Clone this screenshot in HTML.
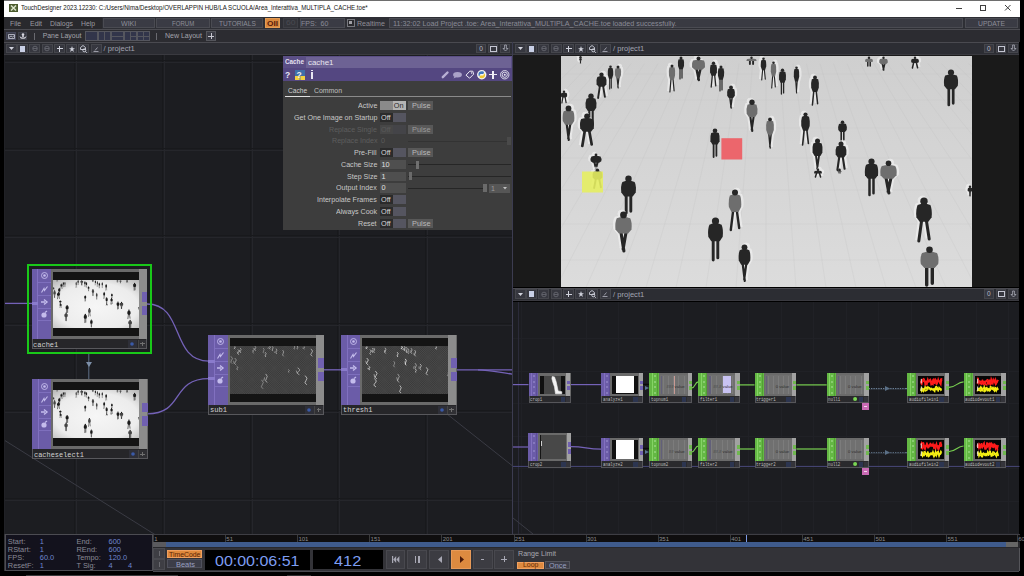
<!DOCTYPE html><html><head><meta charset="utf-8"><style>
html,body{margin:0;padding:0;}
body{width:1024px;height:576px;overflow:hidden;background:#000;position:relative;font-family:"Liberation Sans",sans-serif;}
.a{position:absolute;box-sizing:border-box;}
.t{white-space:pre;line-height:1;}
svg.a{overflow:visible;}
</style></head><body>

<div class="a" style="left:4px;top:0px;width:1016px;height:16.5px;background:#ffffff;"></div>
<div class="a" style="left:4px;top:0px;width:1016px;height:1px;background:#6e6e6e;"></div>
<svg class="a" style="left:8.5px;top:4px;" width="9" height="8" viewBox="0 0 9 8"><rect x="0" y="0" width="9" height="8" fill="#4b5a2c"/><rect x="1" y="1" width="7" height="6" fill="#56663a"/><path d="M2 1.5 L7 6.5 M7 1.5 L2 6.5" stroke="#dfe6cf" stroke-width="1.3"/></svg>
<div class="a t" style="left:20.50px;top:4.21px;font-size:7.9px;color:#141414;font-family:'Liberation Sans',sans-serif;transform:scaleX(0.7715);transform-origin:0 0;">TouchDesigner 2023.12230: C:/Users/Nima/Desktop/OVERLAPPIN HUB/LA SCUOLA/Area_Interattiva_MULTIPLA_CACHE.toe*</div>
<div class="a" style="left:955.5px;top:7.8px;width:6.5px;height:1px;background:#404040;"></div>
<div class="a" style="left:980px;top:5.2px;width:5.8px;height:5.6px;border:1px solid #404040;"></div>
<svg class="a" style="left:1004.6px;top:5px;" width="5.5" height="5.5" viewBox="0 0 5.5 5.5"><path d="M0 0L5.5 5.5M5.5 0L0 5.5" stroke="#404040" stroke-width="1"/></svg>
<div class="a" style="left:4px;top:16.5px;width:1016px;height:13px;background:#2c2c31;"></div>
<div class="a" style="left:4px;top:16.5px;width:97.5px;height:13px;background:#29292d;"></div>
<div class="a t" style="left:10.00px;top:19.72px;font-size:7.3px;color:#9a9aa0;font-family:'Liberation Sans',sans-serif;transform:scaleX(0.9352);transform-origin:0 0;">File</div>
<div class="a t" style="left:30.00px;top:19.72px;font-size:7.3px;color:#9a9aa0;font-family:'Liberation Sans',sans-serif;transform:scaleX(0.9540);transform-origin:0 0;">Edit</div>
<div class="a t" style="left:50.00px;top:19.72px;font-size:7.3px;color:#9a9aa0;font-family:'Liberation Sans',sans-serif;transform:scaleX(0.9447);transform-origin:0 0;">Dialogs</div>
<div class="a t" style="left:81.00px;top:19.72px;font-size:7.3px;color:#9a9aa0;font-family:'Liberation Sans',sans-serif;transform:scaleX(0.9325);transform-origin:0 0;">Help</div>
<div class="a" style="left:101.5px;top:16.5px;width:918.5px;height:13px;background:#2e2f35;"></div>
<div class="a" style="left:102.6px;top:17.8px;width:52.099999999999994px;height:9.8px;background:#3a3b44;border:1px solid #4a4b52;"></div>
<div class="a t" style="left:121.00px;top:19.82px;font-size:7.3px;color:#8c8d98;font-family:'Liberation Sans',sans-serif;transform:scaleX(0.9674);transform-origin:0 0;">WIKI</div>
<div class="a" style="left:156px;top:17.8px;width:54px;height:9.8px;background:#3a3b44;border:1px solid #4a4b52;"></div>
<div class="a t" style="left:171.80px;top:19.82px;font-size:7.3px;color:#8c8d98;font-family:'Liberation Sans',sans-serif;transform:scaleX(0.8295);transform-origin:0 0;">FORUM</div>
<div class="a" style="left:210.7px;top:17.8px;width:52.10000000000002px;height:9.8px;background:#3a3b44;border:1px solid #4a4b52;"></div>
<div class="a t" style="left:219.00px;top:19.82px;font-size:7.3px;color:#8c8d98;font-family:'Liberation Sans',sans-serif;transform:scaleX(0.9012);transform-origin:0 0;">TUTORIALS</div>
<div class="a" style="left:265.3px;top:17.8px;width:14.699999999999989px;height:9.8px;background:#d8893e;border:1px solid #e49c55;"></div>
<div class="a t" style="left:267.20px;top:19.77px;font-size:7px;color:#5a1a0c;font-family:'Liberation Sans',sans-serif;font-weight:bold;transform:scaleX(1.1892);transform-origin:0 0;">OII</div>
<div class="a" style="left:283px;top:17.8px;width:14.699999999999989px;height:9.8px;background:#34353b;border:1px solid #3e3f45;"></div>
<div class="a t" style="left:285.50px;top:20.09px;font-size:6.5px;color:#4a4b52;font-family:'Liberation Sans',sans-serif;transform:scaleX(1.3140);transform-origin:0 0;">60</div>
<div class="a" style="left:299.5px;top:17.8px;width:45.10000000000002px;height:9.8px;background:#3a3b44;border:1px solid #4a4b52;"></div>
<div class="a t" style="left:301.40px;top:19.82px;font-size:7.3px;color:#8a8b96;font-family:'Liberation Sans',sans-serif;transform:scaleX(0.9612);transform-origin:0 0;">FPS:  60</div>
<div class="a" style="left:347px;top:18.8px;width:7.5px;height:8px;background:#2a2a2e;border:1px solid #77787e;"></div>
<div class="a" style="left:349.2px;top:21px;width:3.2px;height:3.4px;background:#a0a0a6;"></div>
<div class="a t" style="left:357.30px;top:19.82px;font-size:7.3px;color:#8e8e96;font-family:'Liberation Sans',sans-serif;transform:scaleX(0.9686);transform-origin:0 0;">Realtime</div>
<div class="a" style="left:389.4px;top:17.8px;width:573.6px;height:9.8px;background:#393a42;border:1px solid #4a4b52;"></div>
<div class="a t" style="left:392.60px;top:19.82px;font-size:7.3px;color:#8a8b96;font-family:'Liberation Sans',sans-serif;transform:scaleX(0.9844);transform-origin:0 0;">11:32:02 Load Project .toe: Area_Interattiva_MULTIPLA_CACHE.toe loaded successfully.</div>
<div class="a" style="left:965px;top:17.8px;width:52.60000000000002px;height:9.8px;background:#3a3b44;border:1px solid #4a4b52;"></div>
<div class="a t" style="left:978.00px;top:19.82px;font-size:7.3px;color:#8c8d98;font-family:'Liberation Sans',sans-serif;transform:scaleX(0.9288);transform-origin:0 0;">UPDATE</div>
<div class="a" style="left:4px;top:29.2px;width:1016px;height:13px;background:#2c2c31;"></div>
<div class="a" style="left:4px;top:29.2px;width:1016px;height:0.8px;background:#4c4c52;"></div>
<div class="a" style="left:6px;top:32.3px;width:9.7px;height:7.4px;background:#3a3c48;border:1px solid #45475a;"></div>
<svg class="a" style="left:7.5px;top:33.5px;" width="7" height="5" viewBox="0 0 7 5"><path d="M0.5 0.5h6v4h-6z M1 3.5 L3 2 L4.5 3 L6.5 1.5" stroke="#c8cad8" stroke-width="0.8" fill="none"/></svg>
<div class="a" style="left:18px;top:32.3px;width:9.4px;height:7.4px;background:#34363f;border:1px solid #40424c;"></div>
<svg class="a" style="left:19px;top:33px;" width="8" height="6" viewBox="0 0 8 6"><circle cx="4" cy="1.6" r="1.3" fill="#d8d8e0"/><path d="M0.5 3 Q4 6.5 7.5 3 L6.5 5.2 Q4 6.5 1.5 5.2z" fill="#d8d8e0"/><rect x="3.2" y="2.5" width="1.6" height="1.8" fill="#d8d8e0"/></svg>
<div class="a" style="left:34.3px;top:33px;width:0.9px;height:7px;background:#6a6a70;"></div>
<div class="a t" style="left:42.70px;top:32.76px;font-size:6.9px;color:#a4a4ac;font-family:'Liberation Sans',sans-serif;">Pane Layout</div>
<div class="a" style="left:85px;top:31.3px;width:13px;height:9.8px;background:#32354a;border:1px solid #55565e;"></div>
<div class="a" style="left:98px;top:31.3px;width:13px;height:9.8px;background:#32354a;border:1px solid #55565e;"></div>
<div class="a" style="left:111px;top:31.3px;width:13px;height:9.8px;background:#32354a;border:1px solid #55565e;"></div>
<div class="a" style="left:124px;top:31.3px;width:13px;height:9.8px;background:#32354a;border:1px solid #55565e;"></div>
<div class="a" style="left:137px;top:31.3px;width:13px;height:9.8px;background:#32354a;border:1px solid #55565e;"></div>
<div class="a" style="left:104px;top:31.5px;width:1px;height:9.5px;background:#55565e;"></div>
<div class="a" style="left:111px;top:36px;width:13px;height:1px;background:#55565e;"></div>
<div class="a" style="left:130px;top:31.5px;width:1px;height:9.5px;background:#55565e;"></div>
<div class="a" style="left:130px;top:36px;width:7px;height:1px;background:#55565e;"></div>
<div class="a" style="left:143px;top:31.5px;width:1px;height:9.5px;background:#55565e;"></div>
<div class="a" style="left:137px;top:36px;width:13px;height:1px;background:#55565e;"></div>
<div class="a" style="left:156.2px;top:33px;width:0.9px;height:7px;background:#6a6a70;"></div>
<div class="a t" style="left:165.00px;top:32.76px;font-size:6.9px;color:#a4a4ac;font-family:'Liberation Sans',sans-serif;transform:scaleX(1.0154);transform-origin:0 0;">New Layout</div>
<div class="a" style="left:206px;top:31.3px;width:10px;height:9.6px;background:#3a3b44;border:1px solid #55565c;"></div>
<div class="a" style="left:208.3px;top:35.6px;width:5.4px;height:1px;background:#c8c8d0;"></div>
<div class="a" style="left:210.5px;top:33.4px;width:1px;height:5.4px;background:#c8c8d0;"></div>
<div class="a" style="left:4px;top:42.2px;width:507.7px;height:12.8px;background:#2c2d33;"></div>
<div class="a" style="left:4px;top:42.2px;width:507.7px;height:0.8px;background:#4a4a50;"></div>
<div class="a" style="left:4px;top:54.4px;width:507.7px;height:0.6px;background:#3a3a40;"></div>
<div class="a" style="left:6px;top:44.0px;width:11px;height:9.4px;background:#36373f;border:1px solid #45464c;"></div>
<div class="a" style="left:16.5px;top:44.0px;width:11px;height:9.4px;background:#36373f;border:1px solid #45464c;"></div>
<div class="a" style="left:29px;top:44.0px;width:11px;height:9.4px;background:#36373f;border:1px solid #45464c;"></div>
<div class="a" style="left:41.5px;top:44.0px;width:11px;height:9.4px;background:#36373f;border:1px solid #45464c;"></div>
<div class="a" style="left:54px;top:44.0px;width:11px;height:9.4px;background:#36373f;border:1px solid #45464c;"></div>
<div class="a" style="left:66px;top:44.0px;width:11px;height:9.4px;background:#36373f;border:1px solid #45464c;"></div>
<div class="a" style="left:78px;top:44.0px;width:11px;height:9.4px;background:#36373f;border:1px solid #45464c;"></div>
<div class="a" style="left:90.5px;top:44.0px;width:11px;height:9.4px;background:#36373f;border:1px solid #45464c;"></div>
<svg class="a" style="left:9px;top:47.2px;" width="5" height="3" viewBox="0 0 5 3"><path d="M0 0H5L2.5 3z" fill="#d0d2dc"/></svg>
<div class="a" style="left:19.5px;top:45.5px;width:5.5px;height:6.4px;background:#c9d0e6;"></div>
<svg class="a" style="left:31.5px;top:46.2px;" width="6" height="5" viewBox="0 0 6 5"><circle cx="3" cy="2.5" r="2.3" stroke="#6a6b74" stroke-width="0.8" fill="none"/><path d="M1 2.5h4" stroke="#6a6b74" stroke-width="0.8"/></svg>
<svg class="a" style="left:44.0px;top:46.2px;" width="6" height="5" viewBox="0 0 6 5"><circle cx="3" cy="2.5" r="2.3" stroke="#6a6b74" stroke-width="0.8" fill="none"/><path d="M1 2.5h4" stroke="#6a6b74" stroke-width="0.8"/></svg>
<div class="a" style="left:56.5px;top:48.2px;width:6px;height:1.1px;background:#d0d2dc;"></div>
<div class="a" style="left:58.95px;top:45.7px;width:1.1px;height:6px;background:#d0d2dc;"></div>
<svg class="a" style="left:68.5px;top:45.7px;" width="6" height="6" viewBox="0 0 6 6"><path d="M3 0L3.8 2.2H6L4.2 3.6L4.9 6L3 4.6L1.1 6L1.8 3.6L0 2.2H2.2z" fill="#d0d2dc"/></svg>
<svg class="a" style="left:80px;top:44.900000000000006px;" width="7" height="8" viewBox="0 0 7 8"><path d="M3 0.5L5.5 2.5V4.5H0.5V2.5z" stroke="#d0d2dc" stroke-width="0.9" fill="none"/><circle cx="4.3" cy="5.3" r="1.5" stroke="#d0d2dc" stroke-width="0.9" fill="none"/><path d="M5.3 6.3L6.8 7.8" stroke="#d0d2dc" stroke-width="0.9"/></svg>
<svg class="a" style="left:93.0px;top:46.7px;" width="6" height="5" viewBox="0 0 6 5"><path d="M0.5 4.5H5.5M4.5 0.5L2 3.5" stroke="#9a9ba6" stroke-width="1"/></svg>
<div class="a t" style="left:103.60px;top:45.26px;font-size:7.6px;color:#a2a4b2;font-family:'Liberation Sans',sans-serif;">/ project1</div>
<div class="a" style="left:476.2px;top:43.800000000000004px;width:10px;height:9.6px;background:#36373f;border:1px solid #45464c;"></div>
<div class="a t" style="left:479.20px;top:45.89px;font-size:6.5px;color:#b8bac6;font-family:'Liberation Sans',sans-serif;">0</div>
<div class="a" style="left:488.2px;top:43.800000000000004px;width:10px;height:9.6px;background:#36373f;border:1px solid #45464c;"></div>
<div class="a" style="left:490.2px;top:45.6px;width:6.5px;height:6px;border:1px solid #c4c6d2;border-top-width:1.6px;"></div>
<div class="a" style="left:500.4px;top:43.800000000000004px;width:10px;height:9.6px;background:#36373f;border:1px solid #45464c;"></div>
<svg class="a" style="left:502.7px;top:45.400000000000006px;" width="5" height="6.5" viewBox="0 0 5 6.5"><path d="M1.6 0V3.5H0L2.5 6L5 3.5H3.4V0z" stroke="#b8bac6" stroke-width="0.7" fill="none"/></svg>
<div class="a" style="left:513.4px;top:42.2px;width:506.1px;height:12.8px;background:#2c2d33;"></div>
<div class="a" style="left:513.4px;top:42.2px;width:506.1px;height:0.8px;background:#4a4a50;"></div>
<div class="a" style="left:513.4px;top:54.4px;width:506.1px;height:0.6px;background:#3a3a40;"></div>
<div class="a" style="left:515.4px;top:44.0px;width:11px;height:9.4px;background:#36373f;border:1px solid #45464c;"></div>
<div class="a" style="left:525.9px;top:44.0px;width:11px;height:9.4px;background:#36373f;border:1px solid #45464c;"></div>
<div class="a" style="left:538.4px;top:44.0px;width:11px;height:9.4px;background:#36373f;border:1px solid #45464c;"></div>
<div class="a" style="left:550.9px;top:44.0px;width:11px;height:9.4px;background:#36373f;border:1px solid #45464c;"></div>
<div class="a" style="left:563.4px;top:44.0px;width:11px;height:9.4px;background:#36373f;border:1px solid #45464c;"></div>
<div class="a" style="left:575.4px;top:44.0px;width:11px;height:9.4px;background:#36373f;border:1px solid #45464c;"></div>
<div class="a" style="left:587.4px;top:44.0px;width:11px;height:9.4px;background:#36373f;border:1px solid #45464c;"></div>
<div class="a" style="left:599.9px;top:44.0px;width:11px;height:9.4px;background:#36373f;border:1px solid #45464c;"></div>
<svg class="a" style="left:518.4px;top:47.2px;" width="5" height="3" viewBox="0 0 5 3"><path d="M0 0H5L2.5 3z" fill="#d0d2dc"/></svg>
<div class="a" style="left:528.9px;top:45.5px;width:5.5px;height:6.4px;background:#c9d0e6;"></div>
<svg class="a" style="left:540.9px;top:46.2px;" width="6" height="5" viewBox="0 0 6 5"><circle cx="3" cy="2.5" r="2.3" stroke="#6a6b74" stroke-width="0.8" fill="none"/><path d="M1 2.5h4" stroke="#6a6b74" stroke-width="0.8"/></svg>
<svg class="a" style="left:553.4px;top:46.2px;" width="6" height="5" viewBox="0 0 6 5"><circle cx="3" cy="2.5" r="2.3" stroke="#6a6b74" stroke-width="0.8" fill="none"/><path d="M1 2.5h4" stroke="#6a6b74" stroke-width="0.8"/></svg>
<div class="a" style="left:565.9px;top:48.2px;width:6px;height:1.1px;background:#d0d2dc;"></div>
<div class="a" style="left:568.35px;top:45.7px;width:1.1px;height:6px;background:#d0d2dc;"></div>
<svg class="a" style="left:577.9px;top:45.7px;" width="6" height="6" viewBox="0 0 6 6"><path d="M3 0L3.8 2.2H6L4.2 3.6L4.9 6L3 4.6L1.1 6L1.8 3.6L0 2.2H2.2z" fill="#d0d2dc"/></svg>
<svg class="a" style="left:589.4px;top:44.900000000000006px;" width="7" height="8" viewBox="0 0 7 8"><path d="M3 0.5L5.5 2.5V4.5H0.5V2.5z" stroke="#d0d2dc" stroke-width="0.9" fill="none"/><circle cx="4.3" cy="5.3" r="1.5" stroke="#d0d2dc" stroke-width="0.9" fill="none"/><path d="M5.3 6.3L6.8 7.8" stroke="#d0d2dc" stroke-width="0.9"/></svg>
<svg class="a" style="left:602.4px;top:46.7px;" width="6" height="5" viewBox="0 0 6 5"><path d="M0.5 4.5H5.5M4.5 0.5L2 3.5" stroke="#9a9ba6" stroke-width="1"/></svg>
<div class="a t" style="left:613.00px;top:45.26px;font-size:7.6px;color:#a2a4b2;font-family:'Liberation Sans',sans-serif;">/ project1</div>
<div class="a" style="left:984.0px;top:43.800000000000004px;width:10px;height:9.6px;background:#36373f;border:1px solid #45464c;"></div>
<div class="a t" style="left:987.00px;top:45.89px;font-size:6.5px;color:#b8bac6;font-family:'Liberation Sans',sans-serif;">0</div>
<div class="a" style="left:996.0px;top:43.800000000000004px;width:10px;height:9.6px;background:#36373f;border:1px solid #45464c;"></div>
<div class="a" style="left:998.0px;top:45.6px;width:6.5px;height:6px;border:1px solid #c4c6d2;border-top-width:1.6px;"></div>
<div class="a" style="left:1008.2px;top:43.800000000000004px;width:10px;height:9.6px;background:#36373f;border:1px solid #45464c;"></div>
<svg class="a" style="left:1010.5px;top:45.400000000000006px;" width="5" height="6.5" viewBox="0 0 5 6.5"><path d="M1.6 0V3.5H0L2.5 6L5 3.5H3.4V0z" stroke="#b8bac6" stroke-width="0.7" fill="none"/></svg>
<div class="a" style="left:4px;top:55px;width:507.7px;height:479px;background:#1c1d21;"></div>
<div class="a" style="left:4px;top:55px;width:1.2px;height:479px;background:#202126;"></div>
<div class="a" style="left:74.4px;top:55px;width:1px;height:479px;background:#18191c;"></div>
<div class="a" style="left:76.4px;top:55px;width:1px;height:479px;background:#25262b;"></div>
<div class="a" style="left:162px;top:55px;width:1px;height:479px;background:#18191c;"></div>
<div class="a" style="left:164px;top:55px;width:1px;height:479px;background:#25262b;"></div>
<div class="a" style="left:249.5px;top:55px;width:1px;height:479px;background:#18191c;"></div>
<div class="a" style="left:251.5px;top:55px;width:1px;height:479px;background:#25262b;"></div>
<div class="a" style="left:337px;top:55px;width:1px;height:479px;background:#18191c;"></div>
<div class="a" style="left:339px;top:55px;width:1px;height:479px;background:#25262b;"></div>
<div class="a" style="left:424.5px;top:55px;width:1px;height:479px;background:#18191c;"></div>
<div class="a" style="left:426.5px;top:55px;width:1px;height:479px;background:#25262b;"></div>
<div class="a" style="left:5px;top:59.5px;width:506.7px;height:1px;background:#18191c;"></div>
<div class="a" style="left:5px;top:61.5px;width:506.7px;height:1px;background:#25262b;"></div>
<div class="a" style="left:5px;top:147.6px;width:506.7px;height:1px;background:#18191c;"></div>
<div class="a" style="left:5px;top:149.6px;width:506.7px;height:1px;background:#25262b;"></div>
<div class="a" style="left:5px;top:235px;width:506.7px;height:1px;background:#18191c;"></div>
<div class="a" style="left:5px;top:237px;width:506.7px;height:1px;background:#25262b;"></div>
<div class="a" style="left:5px;top:322.5px;width:506.7px;height:1px;background:#18191c;"></div>
<div class="a" style="left:5px;top:324.5px;width:506.7px;height:1px;background:#25262b;"></div>
<div class="a" style="left:5px;top:410px;width:506.7px;height:1px;background:#18191c;"></div>
<div class="a" style="left:5px;top:412px;width:506.7px;height:1px;background:#25262b;"></div>
<div class="a" style="left:5px;top:497.5px;width:506.7px;height:1px;background:#18191c;"></div>
<div class="a" style="left:5px;top:499.5px;width:506.7px;height:1px;background:#25262b;"></div>
<svg class="a" style="left:0;top:0" width="1024" height="576"><path d="M5 440.6L155 534.6" stroke="#3a3b44" stroke-width="1" fill="none"/></svg>
<svg class="a" style="left:0;top:0" width="1024" height="576"><path d="M447 414L512 465.5" stroke="#3a3b44" stroke-width="1" fill="none"/></svg>
<svg class="a" style="left:0;top:0" width="1024" height="576"><path d="M5 303.4H32" stroke="#7462b8" stroke-width="1.3" fill="none"/></svg>
<svg class="a" style="left:0;top:0" width="1024" height="576"><path d="M147 304C185 304 170 361.2 209 361.2" stroke="#7462b8" stroke-width="1.3" fill="none"/></svg>
<svg class="a" style="left:0;top:0" width="1024" height="576"><path d="M147 413.8C185 413.8 170 378.6 209 378.6" stroke="#7462b8" stroke-width="1.3" fill="none"/></svg>
<svg class="a" style="left:0;top:0" width="1024" height="576"><path d="M324 369.8H341" stroke="#7462b8" stroke-width="1.3" fill="none"/></svg>
<svg class="a" style="left:0;top:0" width="1024" height="576"><path d="M456 369.8H512" stroke="#7462b8" stroke-width="1.3" fill="none"/></svg>
<svg class="a" style="left:0;top:0" width="1024" height="576"><path d="M478 369.8C490 370 500 372.5 512 374.1" stroke="#7462b8" stroke-width="1.3" fill="none"/></svg>
<svg class="a" style="left:0;top:0" width="1024" height="576"><path d="M88.8 354V379" stroke="#5f6f88" stroke-width="1" fill="none"/></svg>
<svg class="a" style="left:85.8px;top:362px;" width="6" height="5" viewBox="0 0 6 5"><path d="M0 0H6L3 5z" fill="#7d8fa8"/></svg>
<div class="a" style="left:27px;top:264px;width:125px;height:90px;border:2px solid #19c819;"></div>
<div class="a" style="left:31.8px;top:268.8px;width:115.5px;height:70px;background:#6a6a6a;"></div>
<div class="a" style="left:31.8px;top:268.8px;width:19.4px;height:70px;background:#6b5ca8;"></div>
<div class="a" style="left:37.4px;top:268.8px;width:0.8px;height:70px;background:#8170c0;"></div>
<div class="a" style="left:38.2px;top:282.1px;width:13px;height:0.7px;background:#7e6fbd;"></div>
<div class="a" style="left:38.2px;top:295.1px;width:13px;height:0.7px;background:#7e6fbd;"></div>
<div class="a" style="left:38.2px;top:308.1px;width:13px;height:0.7px;background:#7e6fbd;"></div>
<div class="a" style="left:38.2px;top:320.1px;width:13px;height:0.7px;background:#7e6fbd;"></div>
<svg class="a" style="left:40.5px;top:272.3px;" width="7" height="7" viewBox="0 0 7 7"><circle cx="3.5" cy="3.5" r="3" stroke="#c4bcec" stroke-width="0.9" fill="none"/><circle cx="3.5" cy="3.5" r="1.3" fill="#c4bcec"/></svg>
<svg class="a" style="left:40.5px;top:285.6px;" width="7" height="7" viewBox="0 0 7 7"><path d="M0.5 6.5L3 2.5L3.5 4.5L6.5 0.5" stroke="#c4bcec" stroke-width="1.1" fill="none"/></svg>
<svg class="a" style="left:40.5px;top:298.6px;" width="7" height="6" viewBox="0 0 7 6"><path d="M0 3H4M3 0.5L6 3L3 5.5" stroke="#c4bcec" stroke-width="1.4" fill="none"/></svg>
<svg class="a" style="left:40.5px;top:310.6px;" width="7" height="7" viewBox="0 0 7 7"><circle cx="3" cy="4" r="2.6" fill="#c4bcec"/><path d="M4 1.5L6 0" stroke="#c4bcec" stroke-width="1.2"/></svg>
<div class="a" style="left:31.8px;top:301.79999999999995px;width:6.4px;height:3.2px;background:#8a7bcc;"></div>
<div class="a" style="left:139.0px;top:268.8px;width:8.299999999999997px;height:70px;background:#8c8c8c;"></div>
<div class="a" style="left:141.8px;top:292.3px;width:5.5px;height:9.5px;background:#7060b0;"></div>
<div class="a" style="left:141.8px;top:305.8px;width:5.5px;height:9.5px;background:#7060b0;"></div>
<div class="a" style="left:53.0px;top:272.1px;width:86px;height:64.0px;background:#141414;"></div>
<svg class="a" style="left:53.0px;top:279.70000000000005px;overflow:hidden" width="86" height="48.4" viewBox="0 0 411 231.5" preserveAspectRatio="none"><defs><radialGradient id="vg" cx="0.5" cy="0.55" r="0.75"><stop offset="0" stop-color="#f6f6f6"/><stop offset="0.65" stop-color="#ececec"/><stop offset="1" stop-color="#b4b4b4"/></radialGradient></defs><rect width="411" height="231.5" fill="url(#vg)"/><path d="M19.1 3.1L19.6 7.0M19.9 3.1L19.4 7.0" stroke="#1a1a1a" stroke-width="0.9" stroke-linecap="round" fill="none"/><path d="M18.5 2.4Q19.5 1.4 20.5 2.4Q20.8 3.1 20.6 4.5L20.2 4.1L18.8 4.1L18.4 4.5Q18.2 3.1 18.5 2.4z" fill="#1a1a1a"/><circle cx="19.5" cy="1.2" r="1.2" fill="#1a1a1a"/><path d="M38.9 29.8L37.1 42.0M42.1 29.8L43.9 40.9" stroke="#1a1a1a" stroke-width="1.9" stroke-linecap="round" fill="none"/><path d="M36.3 20.9Q40.5 19.2 44.7 20.9Q46.0 23.5 45.4 28.2L43.4 30.8L37.6 30.8L35.6 28.2Q35.0 23.5 36.3 20.9z" fill="#1a1a1a"/><circle cx="40.5" cy="18.7" r="2.2" fill="#1a1a1a"/><path d="M48.7 21.7L48.7 33.0M50.3 21.7L50.3 32.1" stroke="#1a1a1a" stroke-width="1.1" stroke-linecap="round" fill="none"/><path d="M47.3 12.2Q49.5 11.1 51.7 12.2Q52.4 14.6 52.2 18.9L51.0 22.7L48.0 22.7L46.8 18.9Q46.6 14.6 47.3 12.2z" fill="#1a1a1a"/><circle cx="49.5" cy="10.8" r="1.3" fill="#1a1a1a"/><path d="M56.0 21.1L57.2 32.0M58.0 21.1L56.8 31.1" stroke="#1a1a1a" stroke-width="1.2" stroke-linecap="round" fill="none"/><path d="M54.4 12.5Q57.0 11.3 59.6 12.5Q60.4 14.8 60.0 19.0L58.8 22.1L55.2 22.1L54.0 19.0Q53.6 14.8 54.4 12.5z" fill="#444"/><circle cx="57.0" cy="11.0" r="1.5" fill="#1a1a1a"/><path d="M110.0 22.9L108.9 36.0M112.0 22.9L113.1 34.8" stroke="#1a1a1a" stroke-width="1.2" stroke-linecap="round" fill="none"/><path d="M108.4 11.5Q111.0 10.3 113.6 11.5Q114.4 14.3 114.0 19.4L112.8 23.9L109.2 23.9L108.0 19.4Q107.6 14.3 108.4 11.5z" fill="#444"/><circle cx="111.0" cy="10.0" r="1.5" fill="#1a1a1a"/><path d="M119.0 12.2L119.0 23.0M121.0 12.2L121.0 22.1" stroke="#1a1a1a" stroke-width="1.2" stroke-linecap="round" fill="none"/><path d="M117.4 3.5Q120.0 2.3 122.6 3.5Q123.4 5.8 123.0 10.0L121.8 13.2L118.2 13.2L117.0 10.0Q116.6 5.8 117.4 3.5z" fill="#1a1a1a"/><circle cx="120.0" cy="2.0" r="1.5" fill="#1a1a1a"/><path d="M135.5 12.7L137.8 24.0M139.5 12.7L137.2 23.1" stroke="#1a1a1a" stroke-width="2.5" stroke-linecap="round" fill="none"/><path d="M132.1 4.6Q137.5 2.9 142.9 4.6Q144.6 7.0 144.0 11.3L141.2 13.7L133.8 13.7L131.0 11.3Q130.4 7.0 132.1 4.6z" fill="#444"/><circle cx="137.5" cy="2.5" r="2.0" fill="#1a1a1a"/><path d="M151.4 18.8L150.2 31.0M153.6 18.8L154.8 29.9" stroke="#1a1a1a" stroke-width="1.3" stroke-linecap="round" fill="none"/><path d="M149.6 8.9Q152.5 7.6 155.4 8.9Q156.3 11.5 155.9 16.2L154.5 19.8L150.5 19.8L149.1 16.2Q148.7 11.5 149.6 8.9z" fill="#1a1a1a"/><circle cx="152.5" cy="7.2" r="1.7" fill="#1a1a1a"/><path d="M159.0 22.8L159.0 35.0M161.0 22.8L161.0 33.9" stroke="#1a1a1a" stroke-width="1.2" stroke-linecap="round" fill="none"/><path d="M157.4 12.5Q160.0 11.3 162.6 12.5Q163.4 15.1 163.0 19.8L161.8 23.8L158.2 23.8L157.0 19.8Q156.6 15.1 157.4 12.5z" fill="#1a1a1a"/><circle cx="160.0" cy="11.0" r="1.5" fill="#1a1a1a"/><path d="M168.8 41.1L170.2 52.0M171.2 41.1L169.8 51.1" stroke="#1a1a1a" stroke-width="1.5" stroke-linecap="round" fill="none"/><path d="M166.8 33.3Q170.0 31.8 173.2 33.3Q174.2 35.6 173.8 39.7L172.2 42.1L167.8 42.1L166.2 39.7Q165.8 35.6 166.8 33.3z" fill="#1a1a1a"/><circle cx="170.0" cy="31.4" r="1.9" fill="#1a1a1a"/><path d="M201.7 13.2L200.7 24.0M203.3 13.2L204.3 23.1" stroke="#1a1a1a" stroke-width="1.1" stroke-linecap="round" fill="none"/><path d="M200.3 4.2Q202.5 3.1 204.7 4.2Q205.4 6.5 205.2 10.6L204.0 14.2L201.0 14.2L199.8 10.6Q199.6 6.5 200.3 4.2z" fill="#1a1a1a"/><circle cx="202.5" cy="2.8" r="1.3" fill="#1a1a1a"/><path d="M188.9 3.9L188.9 8.0M192.1 3.9L192.1 8.0" stroke="#1a1a1a" stroke-width="1.9" stroke-linecap="round" fill="none"/><path d="M186.3 2.9Q190.5 1.9 194.7 2.9Q196.0 3.7 195.4 5.1L193.4 4.9L187.6 4.9L185.6 5.1Q185.0 3.7 186.3 2.9z" fill="#444"/><circle cx="190.5" cy="1.7" r="1.2" fill="#1a1a1a"/><path d="M189.3 60.1L191.3 75.0M192.7 60.1L190.7 73.6" stroke="#1a1a1a" stroke-width="2.1" stroke-linecap="round" fill="none"/><path d="M186.5 48.8Q191.0 46.7 195.5 48.8Q196.9 52.0 196.3 57.8L194.1 61.1L187.9 61.1L185.7 57.8Q185.1 52.0 186.5 48.8z" fill="#444"/><circle cx="191.0" cy="46.2" r="2.7" fill="#1a1a1a"/><path d="M2.0 40.6L0.9 47.0M4.0 40.6L5.1 46.7" stroke="#1a1a1a" stroke-width="1.2" stroke-linecap="round" fill="none"/><path d="M0.4 36.9Q3.0 35.9 5.6 36.9Q6.4 38.2 6.0 40.5L4.8 41.6L1.2 41.6L-0.0 40.5Q-0.4 38.2 0.4 36.9z" fill="#1a1a1a"/><circle cx="3.0" cy="35.7" r="1.2" fill="#1a1a1a"/><path d="M28.3 54.1L28.3 69.0M31.7 54.1L31.7 67.6" stroke="#1a1a1a" stroke-width="2.1" stroke-linecap="round" fill="none"/><path d="M25.5 42.8Q30.0 40.7 34.5 42.8Q35.9 46.0 35.3 51.8L33.1 55.1L26.9 55.1L24.7 51.8Q24.1 46.0 25.5 42.8z" fill="#1a1a1a"/><circle cx="30.0" cy="40.2" r="2.7" fill="#1a1a1a"/><path d="M5.7 67.8L7.8 84.0M9.3 67.8L7.2 82.4" stroke="#1a1a1a" stroke-width="2.2" stroke-linecap="round" fill="none"/><path d="M2.7 55.2Q7.5 52.9 12.3 55.2Q13.8 58.7 13.2 65.0L10.8 68.8L4.2 68.8L1.8 65.0Q1.2 58.7 2.7 55.2z" fill="#444"/><circle cx="7.5" cy="52.4" r="2.9" fill="#1a1a1a"/><path d="M23.8 74.7L21.3 90.0M28.2 74.7L30.7 88.5" stroke="#1a1a1a" stroke-width="2.7" stroke-linecap="round" fill="none"/><path d="M20.2 63.1Q26.0 60.9 31.8 63.1Q33.6 66.4 32.8 72.3L30.0 75.7L22.0 75.7L19.2 72.3Q18.4 66.4 20.2 63.1z" fill="#1a1a1a"/><circle cx="26.0" cy="60.3" r="2.8" fill="#1a1a1a"/><path d="M152.6 87.5L152.6 101.0M155.4 87.5L155.4 99.8" stroke="#1a1a1a" stroke-width="1.8" stroke-linecap="round" fill="none"/><path d="M150.2 77.1Q154.0 75.2 157.8 77.1Q159.0 80.0 158.6 85.2L156.6 88.5L151.4 88.5L149.4 85.2Q149.0 80.0 150.2 77.1z" fill="#1a1a1a"/><circle cx="154.0" cy="74.8" r="2.3" fill="#1a1a1a"/><path d="M33.3 105.8L35.3 114.0M36.7 105.8L34.7 113.5" stroke="#1a1a1a" stroke-width="2.1" stroke-linecap="round" fill="none"/><path d="M30.5 100.4Q35.0 99.2 39.5 100.4Q40.9 102.1 40.3 105.2L38.1 106.8L31.9 106.8L29.7 105.2Q29.1 102.1 30.5 100.4z" fill="#1a1a1a"/><circle cx="35.0" cy="98.9" r="1.4" fill="#1a1a1a"/><path d="M211.7 19.4L210.7 32.0M213.3 19.4L214.3 30.9" stroke="#1a1a1a" stroke-width="1.1" stroke-linecap="round" fill="none"/><path d="M210.3 8.2Q212.5 7.1 214.7 8.2Q215.4 10.9 215.2 15.7L214.0 20.4L211.0 20.4L209.8 15.7Q209.6 10.9 210.3 8.2z" fill="#444"/><circle cx="212.5" cy="6.8" r="1.3" fill="#1a1a1a"/><path d="M220.4 25.8L220.4 38.0M222.6 25.8L222.6 36.9" stroke="#1a1a1a" stroke-width="1.3" stroke-linecap="round" fill="none"/><path d="M218.6 15.9Q221.5 14.6 224.4 15.9Q225.3 18.5 224.9 23.2L223.5 26.8L219.5 26.8L218.1 23.2Q217.7 18.5 218.6 15.9z" fill="#1a1a1a"/><circle cx="221.5" cy="14.2" r="1.7" fill="#1a1a1a"/><path d="M234.7 24.4L235.6 37.0M236.3 24.4L235.4 35.9" stroke="#1a1a1a" stroke-width="1.1" stroke-linecap="round" fill="none"/><path d="M233.3 13.2Q235.5 12.1 237.7 13.2Q238.4 15.9 238.2 20.7L237.0 25.4L234.0 25.4L232.8 20.7Q232.6 15.9 233.3 13.2z" fill="#1a1a1a"/><circle cx="235.5" cy="11.8" r="1.3" fill="#1a1a1a"/><path d="M252.8 35.0L251.4 49.0M255.2 35.0L256.6 47.7" stroke="#1a1a1a" stroke-width="1.5" stroke-linecap="round" fill="none"/><path d="M250.8 23.3Q254.0 21.8 257.2 23.3Q258.2 26.3 257.8 31.7L256.2 36.0L251.8 36.0L250.2 31.7Q249.8 26.3 250.8 23.3z" fill="#1a1a1a"/><circle cx="254.0" cy="21.4" r="1.9" fill="#1a1a1a"/><path d="M306.8 5.0L306.8 10.0M309.2 5.0L309.2 9.9" stroke="#1a1a1a" stroke-width="1.5" stroke-linecap="round" fill="none"/><path d="M304.8 2.9Q308.0 1.9 311.2 2.9Q312.2 3.9 311.8 5.7L310.2 6.0L305.8 6.0L304.2 5.7Q303.8 3.9 304.8 2.9z" fill="#444"/><circle cx="308.0" cy="1.7" r="1.2" fill="#1a1a1a"/><path d="M321.2 7.2L322.7 14.0M323.8 7.2L322.3 13.7" stroke="#1a1a1a" stroke-width="1.6" stroke-linecap="round" fill="none"/><path d="M319.0 2.9Q322.5 1.9 326.0 2.9Q327.1 4.3 326.7 6.8L324.9 8.2L320.1 8.2L318.3 6.8Q317.9 4.3 319.0 2.9z" fill="#444"/><circle cx="322.5" cy="1.7" r="1.2" fill="#1a1a1a"/><path d="M352.8 6.1L351.4 12.0M355.2 6.1L356.6 11.8" stroke="#1a1a1a" stroke-width="1.5" stroke-linecap="round" fill="none"/><path d="M350.8 2.9Q354.0 1.9 357.2 2.9Q358.2 4.1 357.8 6.3L356.2 7.1L351.8 7.1L350.2 6.3Q349.8 4.1 350.8 2.9z" fill="#1a1a1a"/><circle cx="354.0" cy="1.7" r="1.2" fill="#1a1a1a"/><path d="M387.8 32.3L387.8 49.0M392.2 32.3L392.2 47.3" stroke="#1a1a1a" stroke-width="2.7" stroke-linecap="round" fill="none"/><path d="M384.2 19.6Q390.0 17.2 395.8 19.6Q397.6 23.2 396.8 29.7L394.0 33.3L386.0 33.3L383.2 29.7Q382.4 23.2 384.2 19.6z" fill="#1a1a1a"/><circle cx="390.0" cy="16.6" r="3.1" fill="#1a1a1a"/><path d="M207.8 77.5L209.2 92.0M210.2 77.5L208.8 90.6" stroke="#1a1a1a" stroke-width="1.5" stroke-linecap="round" fill="none"/><path d="M205.8 65.3Q209.0 63.8 212.2 65.3Q213.2 68.4 212.8 74.0L211.2 78.5L206.8 78.5L205.2 74.0Q204.8 68.4 205.8 65.3z" fill="#444"/><circle cx="209.0" cy="63.4" r="1.9" fill="#1a1a1a"/><path d="M243.2 73.7L241.6 89.0M245.8 73.7L247.4 87.5" stroke="#1a1a1a" stroke-width="1.6" stroke-linecap="round" fill="none"/><path d="M241.0 60.7Q244.5 59.0 248.0 60.7Q249.1 64.0 248.7 69.9L246.9 74.7L242.1 74.7L240.3 69.9Q239.9 64.0 241.0 60.7z" fill="#1a1a1a"/><circle cx="244.5" cy="58.6" r="2.1" fill="#1a1a1a"/><path d="M280.2 75.0L280.2 85.0M282.8 75.0L282.8 84.2" stroke="#1a1a1a" stroke-width="1.6" stroke-linecap="round" fill="none"/><path d="M278.0 68.1Q281.5 66.6 285.0 68.1Q286.1 70.2 285.7 73.9L283.9 76.0L279.1 76.0L277.3 73.9Q276.9 70.2 278.0 68.1z" fill="#1a1a1a"/><circle cx="281.5" cy="66.3" r="1.8" fill="#1a1a1a"/><path d="M254.9 99.1L256.8 114.0M258.1 99.1L256.2 112.6" stroke="#1a1a1a" stroke-width="1.9" stroke-linecap="round" fill="none"/><path d="M252.3 87.4Q256.5 85.5 260.7 87.4Q262.0 90.6 261.4 96.4L259.4 100.1L253.6 100.1L251.6 96.4Q251.0 90.6 252.3 87.4z" fill="#1a1a1a"/><circle cx="256.5" cy="85.0" r="2.5" fill="#1a1a1a"/><path d="M278.3 100.5L276.4 114.0M281.7 100.5L283.6 112.8" stroke="#1a1a1a" stroke-width="2.1" stroke-linecap="round" fill="none"/><path d="M275.5 90.4Q280.0 88.5 284.5 90.4Q285.9 93.3 285.3 98.6L283.1 101.5L276.9 101.5L274.7 98.6Q274.1 93.3 275.5 90.4z" fill="#1a1a1a"/><circle cx="280.0" cy="88.0" r="2.5" fill="#1a1a1a"/><path d="M308.5 121.8L308.5 139.0M312.5 121.8L312.5 137.3" stroke="#1a1a1a" stroke-width="2.5" stroke-linecap="round" fill="none"/><path d="M305.1 108.8Q310.5 106.3 315.9 108.8Q317.6 112.5 317.0 119.2L314.2 122.8L306.8 122.8L304.0 119.2Q303.4 112.5 305.1 108.8z" fill="#1a1a1a"/><circle cx="310.5" cy="105.6" r="3.1" fill="#1a1a1a"/><path d="M325.0 121.7L327.9 137.0M330.0 121.7L327.1 135.5" stroke="#1a1a1a" stroke-width="3.1" stroke-linecap="round" fill="none"/><path d="M320.8 110.1Q327.5 107.9 334.2 110.1Q336.3 113.4 335.5 119.3L332.1 122.7L322.9 122.7L319.5 119.3Q318.7 113.4 320.8 110.1z" fill="#444"/><circle cx="327.5" cy="107.3" r="2.8" fill="#1a1a1a"/><path d="M34.9 122.5L33.1 132.0M38.1 122.5L39.9 131.3" stroke="#1a1a1a" stroke-width="1.9" stroke-linecap="round" fill="none"/><path d="M32.3 115.9Q36.5 114.5 40.7 115.9Q42.0 117.9 41.4 121.5L39.4 123.5L33.6 123.5L31.6 121.5Q31.0 117.9 32.3 115.9z" fill="#1a1a1a"/><circle cx="36.5" cy="114.2" r="1.7" fill="#1a1a1a"/><path d="M65.2 139.4L65.2 157.0M69.8 139.4L69.8 155.2" stroke="#1a1a1a" stroke-width="2.9" stroke-linecap="round" fill="none"/><path d="M61.4 126.0Q67.5 123.4 73.6 126.0Q75.5 129.8 74.7 136.6L71.7 140.4L63.3 140.4L60.3 136.6Q59.5 129.8 61.4 126.0z" fill="#1a1a1a"/><circle cx="67.5" cy="122.7" r="3.2" fill="#1a1a1a"/><path d="M60.0 176.5L62.9 195.0M65.0 176.5L62.1 193.1" stroke="#1a1a1a" stroke-width="3.1" stroke-linecap="round" fill="none"/><path d="M55.8 162.3Q62.5 159.6 69.2 162.3Q71.3 166.3 70.5 173.5L67.1 177.5L57.9 177.5L54.5 173.5Q53.7 166.3 55.8 162.3z" fill="#444"/><circle cx="62.5" cy="158.9" r="3.4" fill="#1a1a1a"/><path d="M172.1 155.1L169.8 174.0M175.9 155.1L178.2 172.0" stroke="#1a1a1a" stroke-width="2.4" stroke-linecap="round" fill="none"/><path d="M168.9 139.6Q174.0 137.1 179.1 139.6Q180.7 143.7 180.1 151.1L177.5 156.1L170.5 156.1L167.9 151.1Q167.3 143.7 168.9 139.6z" fill="#444"/><circle cx="174.0" cy="136.5" r="3.0" fill="#1a1a1a"/><path d="M152.2 184.2L152.2 204.0M156.8 184.2L156.8 201.9" stroke="#1a1a1a" stroke-width="2.9" stroke-linecap="round" fill="none"/><path d="M148.4 168.7Q154.5 165.8 160.6 168.7Q162.5 173.0 161.7 180.8L158.7 185.2L150.3 185.2L147.3 180.8Q146.5 173.0 148.4 168.7z" fill="#1a1a1a"/><circle cx="154.5" cy="165.1" r="3.6" fill="#1a1a1a"/><path d="M181.7 207.8L183.8 225.0M185.3 207.8L183.2 223.3" stroke="#1a1a1a" stroke-width="2.2" stroke-linecap="round" fill="none"/><path d="M178.7 194.2Q183.5 191.9 188.3 194.2Q189.8 197.9 189.2 204.6L186.8 208.8L180.2 208.8L177.8 204.6Q177.2 197.9 178.7 194.2z" fill="#1a1a1a"/><circle cx="183.5" cy="191.3" r="2.9" fill="#1a1a1a"/><path d="M360.6 164.7L357.8 185.0M365.4 164.7L368.2 182.9" stroke="#1a1a1a" stroke-width="3.0" stroke-linecap="round" fill="none"/><path d="M356.6 149.0Q363.0 146.0 369.4 149.0Q371.4 153.4 370.6 161.3L367.4 165.7L358.6 165.7L355.4 161.3Q354.6 153.4 356.6 149.0z" fill="#1a1a1a"/><circle cx="363.0" cy="145.2" r="3.7" fill="#1a1a1a"/><path d="M365.7 210.9L365.7 229.0M371.3 210.9L371.3 227.2" stroke="#1a1a1a" stroke-width="3.4" stroke-linecap="round" fill="none"/><path d="M361.1 197.1Q368.5 194.5 375.9 197.1Q378.2 201.0 377.2 208.1L373.6 211.9L363.4 211.9L359.8 208.1Q358.8 201.0 361.1 197.1z" fill="#444"/><circle cx="368.5" cy="193.8" r="3.3" fill="#1a1a1a"/><path d="M408.3 134.6L409.1 140.0M409.7 134.6L408.9 139.8" stroke="#1a1a1a" stroke-width="0.9" stroke-linecap="round" fill="none"/><path d="M407.1 131.9Q409.0 130.9 410.9 131.9Q411.5 133.0 411.3 135.0L410.3 135.6L407.7 135.6L406.7 135.0Q406.5 133.0 407.1 131.9z" fill="#1a1a1a"/><circle cx="409.0" cy="130.7" r="1.2" fill="#1a1a1a"/><path d="M255.8 116.5L254.4 121.0M258.2 116.5L259.6 121.0" stroke="#1a1a1a" stroke-width="1.5" stroke-linecap="round" fill="none"/><path d="M253.8 114.9Q257.0 113.9 260.2 114.9Q261.2 115.8 260.8 117.4L259.2 117.5L254.8 117.5L253.2 117.4Q252.8 115.8 253.8 114.9z" fill="#1a1a1a"/><circle cx="257.0" cy="113.7" r="1.2" fill="#1a1a1a"/><path d="M277.9 114.2L277.9 117.0M279.1 114.2L279.1 117.2" stroke="#1a1a1a" stroke-width="0.9" stroke-linecap="round" fill="none"/><path d="M276.9 114.9Q278.5 113.9 280.1 114.9Q280.6 115.4 280.4 116.3L279.6 115.2L277.4 115.2L276.6 116.3Q276.4 115.4 276.9 114.9z" fill="#1a1a1a"/><circle cx="278.5" cy="113.7" r="1.2" fill="#1a1a1a"/></svg>
<div class="a" style="left:31.8px;top:338.8px;width:115.5px;height:10px;background:#262629;border:1px solid #58585c;border-top:none;"></div>
<div class="a t" style="left:33.30px;top:341.56px;font-size:7.1px;color:#d2d2d2;font-family:'Liberation Mono',monospace;transform:scaleX(0.9897);transform-origin:0 0;">cache1</div>
<div class="a" style="left:128.3px;top:339.8px;width:9px;height:8px;background:#2e2f38;"></div>
<svg class="a" style="left:130.3px;top:341.8px;" width="4" height="4" viewBox="0 0 4 4"><circle cx="2" cy="2" r="1.8" fill="#3a5aa8"/></svg>
<div class="a" style="left:137.8px;top:339.8px;width:8.5px;height:8px;background:#303034;border-left:1px solid #444;"></div>
<div class="a" style="left:140.0px;top:343.40000000000003px;width:4.5px;height:0.8px;background:#707070;"></div>
<div class="a" style="left:141.85000000000002px;top:341.6px;width:0.8px;height:4.5px;background:#707070;"></div>
<div class="a" style="left:32px;top:379px;width:115.5px;height:70px;background:#6a6a6a;"></div>
<div class="a" style="left:32px;top:379px;width:19.4px;height:70px;background:#6b5ca8;"></div>
<div class="a" style="left:37.6px;top:379px;width:0.8px;height:70px;background:#8170c0;"></div>
<div class="a" style="left:38.4px;top:392.3px;width:13px;height:0.7px;background:#7e6fbd;"></div>
<div class="a" style="left:38.4px;top:405.3px;width:13px;height:0.7px;background:#7e6fbd;"></div>
<div class="a" style="left:38.4px;top:418.3px;width:13px;height:0.7px;background:#7e6fbd;"></div>
<div class="a" style="left:38.4px;top:430.3px;width:13px;height:0.7px;background:#7e6fbd;"></div>
<svg class="a" style="left:40.7px;top:382.5px;" width="7" height="7" viewBox="0 0 7 7"><circle cx="3.5" cy="3.5" r="3" stroke="#c4bcec" stroke-width="0.9" fill="none"/><circle cx="3.5" cy="3.5" r="1.3" fill="#c4bcec"/></svg>
<svg class="a" style="left:40.7px;top:395.8px;" width="7" height="7" viewBox="0 0 7 7"><path d="M0.5 6.5L3 2.5L3.5 4.5L6.5 0.5" stroke="#c4bcec" stroke-width="1.1" fill="none"/></svg>
<svg class="a" style="left:40.7px;top:408.8px;" width="7" height="6" viewBox="0 0 7 6"><path d="M0 3H4M3 0.5L6 3L3 5.5" stroke="#c4bcec" stroke-width="1.4" fill="none"/></svg>
<svg class="a" style="left:40.7px;top:420.8px;" width="7" height="7" viewBox="0 0 7 7"><circle cx="3" cy="4" r="2.6" fill="#c4bcec"/><path d="M4 1.5L6 0" stroke="#c4bcec" stroke-width="1.2"/></svg>
<div class="a" style="left:139.2px;top:379px;width:8.299999999999997px;height:70px;background:#8c8c8c;"></div>
<div class="a" style="left:142px;top:402.5px;width:5.5px;height:9.5px;background:#7060b0;"></div>
<div class="a" style="left:142px;top:416px;width:5.5px;height:9.5px;background:#7060b0;"></div>
<div class="a" style="left:53.2px;top:382.3px;width:86px;height:64.0px;background:#141414;"></div>
<svg class="a" style="left:53.2px;top:389.90000000000003px;overflow:hidden" width="86" height="48.4" viewBox="0 0 411 231.5" preserveAspectRatio="none"><defs><radialGradient id="vg" cx="0.5" cy="0.55" r="0.75"><stop offset="0" stop-color="#f6f6f6"/><stop offset="0.65" stop-color="#ececec"/><stop offset="1" stop-color="#b4b4b4"/></radialGradient></defs><rect width="411" height="231.5" fill="url(#vg)"/><path d="M19.1 3.1L19.6 7.0M19.9 3.1L19.4 7.0" stroke="#1a1a1a" stroke-width="0.9" stroke-linecap="round" fill="none"/><path d="M18.5 2.4Q19.5 1.4 20.5 2.4Q20.8 3.1 20.6 4.5L20.2 4.1L18.8 4.1L18.4 4.5Q18.2 3.1 18.5 2.4z" fill="#1a1a1a"/><circle cx="19.5" cy="1.2" r="1.2" fill="#1a1a1a"/><path d="M38.9 29.8L37.1 42.0M42.1 29.8L43.9 40.9" stroke="#1a1a1a" stroke-width="1.9" stroke-linecap="round" fill="none"/><path d="M36.3 20.9Q40.5 19.2 44.7 20.9Q46.0 23.5 45.4 28.2L43.4 30.8L37.6 30.8L35.6 28.2Q35.0 23.5 36.3 20.9z" fill="#1a1a1a"/><circle cx="40.5" cy="18.7" r="2.2" fill="#1a1a1a"/><path d="M48.7 21.7L48.7 33.0M50.3 21.7L50.3 32.1" stroke="#1a1a1a" stroke-width="1.1" stroke-linecap="round" fill="none"/><path d="M47.3 12.2Q49.5 11.1 51.7 12.2Q52.4 14.6 52.2 18.9L51.0 22.7L48.0 22.7L46.8 18.9Q46.6 14.6 47.3 12.2z" fill="#1a1a1a"/><circle cx="49.5" cy="10.8" r="1.3" fill="#1a1a1a"/><path d="M56.0 21.1L57.2 32.0M58.0 21.1L56.8 31.1" stroke="#1a1a1a" stroke-width="1.2" stroke-linecap="round" fill="none"/><path d="M54.4 12.5Q57.0 11.3 59.6 12.5Q60.4 14.8 60.0 19.0L58.8 22.1L55.2 22.1L54.0 19.0Q53.6 14.8 54.4 12.5z" fill="#444"/><circle cx="57.0" cy="11.0" r="1.5" fill="#1a1a1a"/><path d="M110.0 22.9L108.9 36.0M112.0 22.9L113.1 34.8" stroke="#1a1a1a" stroke-width="1.2" stroke-linecap="round" fill="none"/><path d="M108.4 11.5Q111.0 10.3 113.6 11.5Q114.4 14.3 114.0 19.4L112.8 23.9L109.2 23.9L108.0 19.4Q107.6 14.3 108.4 11.5z" fill="#444"/><circle cx="111.0" cy="10.0" r="1.5" fill="#1a1a1a"/><path d="M119.0 12.2L119.0 23.0M121.0 12.2L121.0 22.1" stroke="#1a1a1a" stroke-width="1.2" stroke-linecap="round" fill="none"/><path d="M117.4 3.5Q120.0 2.3 122.6 3.5Q123.4 5.8 123.0 10.0L121.8 13.2L118.2 13.2L117.0 10.0Q116.6 5.8 117.4 3.5z" fill="#1a1a1a"/><circle cx="120.0" cy="2.0" r="1.5" fill="#1a1a1a"/><path d="M135.5 12.7L137.8 24.0M139.5 12.7L137.2 23.1" stroke="#1a1a1a" stroke-width="2.5" stroke-linecap="round" fill="none"/><path d="M132.1 4.6Q137.5 2.9 142.9 4.6Q144.6 7.0 144.0 11.3L141.2 13.7L133.8 13.7L131.0 11.3Q130.4 7.0 132.1 4.6z" fill="#444"/><circle cx="137.5" cy="2.5" r="2.0" fill="#1a1a1a"/><path d="M151.4 18.8L150.2 31.0M153.6 18.8L154.8 29.9" stroke="#1a1a1a" stroke-width="1.3" stroke-linecap="round" fill="none"/><path d="M149.6 8.9Q152.5 7.6 155.4 8.9Q156.3 11.5 155.9 16.2L154.5 19.8L150.5 19.8L149.1 16.2Q148.7 11.5 149.6 8.9z" fill="#1a1a1a"/><circle cx="152.5" cy="7.2" r="1.7" fill="#1a1a1a"/><path d="M159.0 22.8L159.0 35.0M161.0 22.8L161.0 33.9" stroke="#1a1a1a" stroke-width="1.2" stroke-linecap="round" fill="none"/><path d="M157.4 12.5Q160.0 11.3 162.6 12.5Q163.4 15.1 163.0 19.8L161.8 23.8L158.2 23.8L157.0 19.8Q156.6 15.1 157.4 12.5z" fill="#1a1a1a"/><circle cx="160.0" cy="11.0" r="1.5" fill="#1a1a1a"/><path d="M168.8 41.1L170.2 52.0M171.2 41.1L169.8 51.1" stroke="#1a1a1a" stroke-width="1.5" stroke-linecap="round" fill="none"/><path d="M166.8 33.3Q170.0 31.8 173.2 33.3Q174.2 35.6 173.8 39.7L172.2 42.1L167.8 42.1L166.2 39.7Q165.8 35.6 166.8 33.3z" fill="#1a1a1a"/><circle cx="170.0" cy="31.4" r="1.9" fill="#1a1a1a"/><path d="M201.7 13.2L200.7 24.0M203.3 13.2L204.3 23.1" stroke="#1a1a1a" stroke-width="1.1" stroke-linecap="round" fill="none"/><path d="M200.3 4.2Q202.5 3.1 204.7 4.2Q205.4 6.5 205.2 10.6L204.0 14.2L201.0 14.2L199.8 10.6Q199.6 6.5 200.3 4.2z" fill="#1a1a1a"/><circle cx="202.5" cy="2.8" r="1.3" fill="#1a1a1a"/><path d="M188.9 3.9L188.9 8.0M192.1 3.9L192.1 8.0" stroke="#1a1a1a" stroke-width="1.9" stroke-linecap="round" fill="none"/><path d="M186.3 2.9Q190.5 1.9 194.7 2.9Q196.0 3.7 195.4 5.1L193.4 4.9L187.6 4.9L185.6 5.1Q185.0 3.7 186.3 2.9z" fill="#444"/><circle cx="190.5" cy="1.7" r="1.2" fill="#1a1a1a"/><path d="M189.3 60.1L191.3 75.0M192.7 60.1L190.7 73.6" stroke="#1a1a1a" stroke-width="2.1" stroke-linecap="round" fill="none"/><path d="M186.5 48.8Q191.0 46.7 195.5 48.8Q196.9 52.0 196.3 57.8L194.1 61.1L187.9 61.1L185.7 57.8Q185.1 52.0 186.5 48.8z" fill="#444"/><circle cx="191.0" cy="46.2" r="2.7" fill="#1a1a1a"/><path d="M2.0 40.6L0.9 47.0M4.0 40.6L5.1 46.7" stroke="#1a1a1a" stroke-width="1.2" stroke-linecap="round" fill="none"/><path d="M0.4 36.9Q3.0 35.9 5.6 36.9Q6.4 38.2 6.0 40.5L4.8 41.6L1.2 41.6L-0.0 40.5Q-0.4 38.2 0.4 36.9z" fill="#1a1a1a"/><circle cx="3.0" cy="35.7" r="1.2" fill="#1a1a1a"/><path d="M28.3 54.1L28.3 69.0M31.7 54.1L31.7 67.6" stroke="#1a1a1a" stroke-width="2.1" stroke-linecap="round" fill="none"/><path d="M25.5 42.8Q30.0 40.7 34.5 42.8Q35.9 46.0 35.3 51.8L33.1 55.1L26.9 55.1L24.7 51.8Q24.1 46.0 25.5 42.8z" fill="#1a1a1a"/><circle cx="30.0" cy="40.2" r="2.7" fill="#1a1a1a"/><path d="M5.7 67.8L7.8 84.0M9.3 67.8L7.2 82.4" stroke="#1a1a1a" stroke-width="2.2" stroke-linecap="round" fill="none"/><path d="M2.7 55.2Q7.5 52.9 12.3 55.2Q13.8 58.7 13.2 65.0L10.8 68.8L4.2 68.8L1.8 65.0Q1.2 58.7 2.7 55.2z" fill="#444"/><circle cx="7.5" cy="52.4" r="2.9" fill="#1a1a1a"/><path d="M23.8 74.7L21.3 90.0M28.2 74.7L30.7 88.5" stroke="#1a1a1a" stroke-width="2.7" stroke-linecap="round" fill="none"/><path d="M20.2 63.1Q26.0 60.9 31.8 63.1Q33.6 66.4 32.8 72.3L30.0 75.7L22.0 75.7L19.2 72.3Q18.4 66.4 20.2 63.1z" fill="#1a1a1a"/><circle cx="26.0" cy="60.3" r="2.8" fill="#1a1a1a"/><path d="M152.6 87.5L152.6 101.0M155.4 87.5L155.4 99.8" stroke="#1a1a1a" stroke-width="1.8" stroke-linecap="round" fill="none"/><path d="M150.2 77.1Q154.0 75.2 157.8 77.1Q159.0 80.0 158.6 85.2L156.6 88.5L151.4 88.5L149.4 85.2Q149.0 80.0 150.2 77.1z" fill="#1a1a1a"/><circle cx="154.0" cy="74.8" r="2.3" fill="#1a1a1a"/><path d="M33.3 105.8L35.3 114.0M36.7 105.8L34.7 113.5" stroke="#1a1a1a" stroke-width="2.1" stroke-linecap="round" fill="none"/><path d="M30.5 100.4Q35.0 99.2 39.5 100.4Q40.9 102.1 40.3 105.2L38.1 106.8L31.9 106.8L29.7 105.2Q29.1 102.1 30.5 100.4z" fill="#1a1a1a"/><circle cx="35.0" cy="98.9" r="1.4" fill="#1a1a1a"/><path d="M211.7 19.4L210.7 32.0M213.3 19.4L214.3 30.9" stroke="#1a1a1a" stroke-width="1.1" stroke-linecap="round" fill="none"/><path d="M210.3 8.2Q212.5 7.1 214.7 8.2Q215.4 10.9 215.2 15.7L214.0 20.4L211.0 20.4L209.8 15.7Q209.6 10.9 210.3 8.2z" fill="#444"/><circle cx="212.5" cy="6.8" r="1.3" fill="#1a1a1a"/><path d="M220.4 25.8L220.4 38.0M222.6 25.8L222.6 36.9" stroke="#1a1a1a" stroke-width="1.3" stroke-linecap="round" fill="none"/><path d="M218.6 15.9Q221.5 14.6 224.4 15.9Q225.3 18.5 224.9 23.2L223.5 26.8L219.5 26.8L218.1 23.2Q217.7 18.5 218.6 15.9z" fill="#1a1a1a"/><circle cx="221.5" cy="14.2" r="1.7" fill="#1a1a1a"/><path d="M234.7 24.4L235.6 37.0M236.3 24.4L235.4 35.9" stroke="#1a1a1a" stroke-width="1.1" stroke-linecap="round" fill="none"/><path d="M233.3 13.2Q235.5 12.1 237.7 13.2Q238.4 15.9 238.2 20.7L237.0 25.4L234.0 25.4L232.8 20.7Q232.6 15.9 233.3 13.2z" fill="#1a1a1a"/><circle cx="235.5" cy="11.8" r="1.3" fill="#1a1a1a"/><path d="M252.8 35.0L251.4 49.0M255.2 35.0L256.6 47.7" stroke="#1a1a1a" stroke-width="1.5" stroke-linecap="round" fill="none"/><path d="M250.8 23.3Q254.0 21.8 257.2 23.3Q258.2 26.3 257.8 31.7L256.2 36.0L251.8 36.0L250.2 31.7Q249.8 26.3 250.8 23.3z" fill="#1a1a1a"/><circle cx="254.0" cy="21.4" r="1.9" fill="#1a1a1a"/><path d="M306.8 5.0L306.8 10.0M309.2 5.0L309.2 9.9" stroke="#1a1a1a" stroke-width="1.5" stroke-linecap="round" fill="none"/><path d="M304.8 2.9Q308.0 1.9 311.2 2.9Q312.2 3.9 311.8 5.7L310.2 6.0L305.8 6.0L304.2 5.7Q303.8 3.9 304.8 2.9z" fill="#444"/><circle cx="308.0" cy="1.7" r="1.2" fill="#1a1a1a"/><path d="M321.2 7.2L322.7 14.0M323.8 7.2L322.3 13.7" stroke="#1a1a1a" stroke-width="1.6" stroke-linecap="round" fill="none"/><path d="M319.0 2.9Q322.5 1.9 326.0 2.9Q327.1 4.3 326.7 6.8L324.9 8.2L320.1 8.2L318.3 6.8Q317.9 4.3 319.0 2.9z" fill="#444"/><circle cx="322.5" cy="1.7" r="1.2" fill="#1a1a1a"/><path d="M352.8 6.1L351.4 12.0M355.2 6.1L356.6 11.8" stroke="#1a1a1a" stroke-width="1.5" stroke-linecap="round" fill="none"/><path d="M350.8 2.9Q354.0 1.9 357.2 2.9Q358.2 4.1 357.8 6.3L356.2 7.1L351.8 7.1L350.2 6.3Q349.8 4.1 350.8 2.9z" fill="#1a1a1a"/><circle cx="354.0" cy="1.7" r="1.2" fill="#1a1a1a"/><path d="M387.8 32.3L387.8 49.0M392.2 32.3L392.2 47.3" stroke="#1a1a1a" stroke-width="2.7" stroke-linecap="round" fill="none"/><path d="M384.2 19.6Q390.0 17.2 395.8 19.6Q397.6 23.2 396.8 29.7L394.0 33.3L386.0 33.3L383.2 29.7Q382.4 23.2 384.2 19.6z" fill="#1a1a1a"/><circle cx="390.0" cy="16.6" r="3.1" fill="#1a1a1a"/><path d="M207.8 77.5L209.2 92.0M210.2 77.5L208.8 90.6" stroke="#1a1a1a" stroke-width="1.5" stroke-linecap="round" fill="none"/><path d="M205.8 65.3Q209.0 63.8 212.2 65.3Q213.2 68.4 212.8 74.0L211.2 78.5L206.8 78.5L205.2 74.0Q204.8 68.4 205.8 65.3z" fill="#444"/><circle cx="209.0" cy="63.4" r="1.9" fill="#1a1a1a"/><path d="M243.2 73.7L241.6 89.0M245.8 73.7L247.4 87.5" stroke="#1a1a1a" stroke-width="1.6" stroke-linecap="round" fill="none"/><path d="M241.0 60.7Q244.5 59.0 248.0 60.7Q249.1 64.0 248.7 69.9L246.9 74.7L242.1 74.7L240.3 69.9Q239.9 64.0 241.0 60.7z" fill="#1a1a1a"/><circle cx="244.5" cy="58.6" r="2.1" fill="#1a1a1a"/><path d="M280.2 75.0L280.2 85.0M282.8 75.0L282.8 84.2" stroke="#1a1a1a" stroke-width="1.6" stroke-linecap="round" fill="none"/><path d="M278.0 68.1Q281.5 66.6 285.0 68.1Q286.1 70.2 285.7 73.9L283.9 76.0L279.1 76.0L277.3 73.9Q276.9 70.2 278.0 68.1z" fill="#1a1a1a"/><circle cx="281.5" cy="66.3" r="1.8" fill="#1a1a1a"/><path d="M254.9 99.1L256.8 114.0M258.1 99.1L256.2 112.6" stroke="#1a1a1a" stroke-width="1.9" stroke-linecap="round" fill="none"/><path d="M252.3 87.4Q256.5 85.5 260.7 87.4Q262.0 90.6 261.4 96.4L259.4 100.1L253.6 100.1L251.6 96.4Q251.0 90.6 252.3 87.4z" fill="#1a1a1a"/><circle cx="256.5" cy="85.0" r="2.5" fill="#1a1a1a"/><path d="M278.3 100.5L276.4 114.0M281.7 100.5L283.6 112.8" stroke="#1a1a1a" stroke-width="2.1" stroke-linecap="round" fill="none"/><path d="M275.5 90.4Q280.0 88.5 284.5 90.4Q285.9 93.3 285.3 98.6L283.1 101.5L276.9 101.5L274.7 98.6Q274.1 93.3 275.5 90.4z" fill="#1a1a1a"/><circle cx="280.0" cy="88.0" r="2.5" fill="#1a1a1a"/><path d="M308.5 121.8L308.5 139.0M312.5 121.8L312.5 137.3" stroke="#1a1a1a" stroke-width="2.5" stroke-linecap="round" fill="none"/><path d="M305.1 108.8Q310.5 106.3 315.9 108.8Q317.6 112.5 317.0 119.2L314.2 122.8L306.8 122.8L304.0 119.2Q303.4 112.5 305.1 108.8z" fill="#1a1a1a"/><circle cx="310.5" cy="105.6" r="3.1" fill="#1a1a1a"/><path d="M325.0 121.7L327.9 137.0M330.0 121.7L327.1 135.5" stroke="#1a1a1a" stroke-width="3.1" stroke-linecap="round" fill="none"/><path d="M320.8 110.1Q327.5 107.9 334.2 110.1Q336.3 113.4 335.5 119.3L332.1 122.7L322.9 122.7L319.5 119.3Q318.7 113.4 320.8 110.1z" fill="#444"/><circle cx="327.5" cy="107.3" r="2.8" fill="#1a1a1a"/><path d="M34.9 122.5L33.1 132.0M38.1 122.5L39.9 131.3" stroke="#1a1a1a" stroke-width="1.9" stroke-linecap="round" fill="none"/><path d="M32.3 115.9Q36.5 114.5 40.7 115.9Q42.0 117.9 41.4 121.5L39.4 123.5L33.6 123.5L31.6 121.5Q31.0 117.9 32.3 115.9z" fill="#1a1a1a"/><circle cx="36.5" cy="114.2" r="1.7" fill="#1a1a1a"/><path d="M65.2 139.4L65.2 157.0M69.8 139.4L69.8 155.2" stroke="#1a1a1a" stroke-width="2.9" stroke-linecap="round" fill="none"/><path d="M61.4 126.0Q67.5 123.4 73.6 126.0Q75.5 129.8 74.7 136.6L71.7 140.4L63.3 140.4L60.3 136.6Q59.5 129.8 61.4 126.0z" fill="#1a1a1a"/><circle cx="67.5" cy="122.7" r="3.2" fill="#1a1a1a"/><path d="M60.0 176.5L62.9 195.0M65.0 176.5L62.1 193.1" stroke="#1a1a1a" stroke-width="3.1" stroke-linecap="round" fill="none"/><path d="M55.8 162.3Q62.5 159.6 69.2 162.3Q71.3 166.3 70.5 173.5L67.1 177.5L57.9 177.5L54.5 173.5Q53.7 166.3 55.8 162.3z" fill="#444"/><circle cx="62.5" cy="158.9" r="3.4" fill="#1a1a1a"/><path d="M172.1 155.1L169.8 174.0M175.9 155.1L178.2 172.0" stroke="#1a1a1a" stroke-width="2.4" stroke-linecap="round" fill="none"/><path d="M168.9 139.6Q174.0 137.1 179.1 139.6Q180.7 143.7 180.1 151.1L177.5 156.1L170.5 156.1L167.9 151.1Q167.3 143.7 168.9 139.6z" fill="#444"/><circle cx="174.0" cy="136.5" r="3.0" fill="#1a1a1a"/><path d="M152.2 184.2L152.2 204.0M156.8 184.2L156.8 201.9" stroke="#1a1a1a" stroke-width="2.9" stroke-linecap="round" fill="none"/><path d="M148.4 168.7Q154.5 165.8 160.6 168.7Q162.5 173.0 161.7 180.8L158.7 185.2L150.3 185.2L147.3 180.8Q146.5 173.0 148.4 168.7z" fill="#1a1a1a"/><circle cx="154.5" cy="165.1" r="3.6" fill="#1a1a1a"/><path d="M181.7 207.8L183.8 225.0M185.3 207.8L183.2 223.3" stroke="#1a1a1a" stroke-width="2.2" stroke-linecap="round" fill="none"/><path d="M178.7 194.2Q183.5 191.9 188.3 194.2Q189.8 197.9 189.2 204.6L186.8 208.8L180.2 208.8L177.8 204.6Q177.2 197.9 178.7 194.2z" fill="#1a1a1a"/><circle cx="183.5" cy="191.3" r="2.9" fill="#1a1a1a"/><path d="M360.6 164.7L357.8 185.0M365.4 164.7L368.2 182.9" stroke="#1a1a1a" stroke-width="3.0" stroke-linecap="round" fill="none"/><path d="M356.6 149.0Q363.0 146.0 369.4 149.0Q371.4 153.4 370.6 161.3L367.4 165.7L358.6 165.7L355.4 161.3Q354.6 153.4 356.6 149.0z" fill="#1a1a1a"/><circle cx="363.0" cy="145.2" r="3.7" fill="#1a1a1a"/><path d="M365.7 210.9L365.7 229.0M371.3 210.9L371.3 227.2" stroke="#1a1a1a" stroke-width="3.4" stroke-linecap="round" fill="none"/><path d="M361.1 197.1Q368.5 194.5 375.9 197.1Q378.2 201.0 377.2 208.1L373.6 211.9L363.4 211.9L359.8 208.1Q358.8 201.0 361.1 197.1z" fill="#444"/><circle cx="368.5" cy="193.8" r="3.3" fill="#1a1a1a"/><path d="M408.3 134.6L409.1 140.0M409.7 134.6L408.9 139.8" stroke="#1a1a1a" stroke-width="0.9" stroke-linecap="round" fill="none"/><path d="M407.1 131.9Q409.0 130.9 410.9 131.9Q411.5 133.0 411.3 135.0L410.3 135.6L407.7 135.6L406.7 135.0Q406.5 133.0 407.1 131.9z" fill="#1a1a1a"/><circle cx="409.0" cy="130.7" r="1.2" fill="#1a1a1a"/><path d="M255.8 116.5L254.4 121.0M258.2 116.5L259.6 121.0" stroke="#1a1a1a" stroke-width="1.5" stroke-linecap="round" fill="none"/><path d="M253.8 114.9Q257.0 113.9 260.2 114.9Q261.2 115.8 260.8 117.4L259.2 117.5L254.8 117.5L253.2 117.4Q252.8 115.8 253.8 114.9z" fill="#1a1a1a"/><circle cx="257.0" cy="113.7" r="1.2" fill="#1a1a1a"/><path d="M277.9 114.2L277.9 117.0M279.1 114.2L279.1 117.2" stroke="#1a1a1a" stroke-width="0.9" stroke-linecap="round" fill="none"/><path d="M276.9 114.9Q278.5 113.9 280.1 114.9Q280.6 115.4 280.4 116.3L279.6 115.2L277.4 115.2L276.6 116.3Q276.4 115.4 276.9 114.9z" fill="#1a1a1a"/><circle cx="278.5" cy="113.7" r="1.2" fill="#1a1a1a"/></svg>
<div class="a" style="left:32px;top:449px;width:115.5px;height:10px;background:#262629;border:1px solid #58585c;border-top:none;"></div>
<div class="a t" style="left:33.50px;top:451.76px;font-size:7.1px;color:#d2d2d2;font-family:'Liberation Mono',monospace;transform:scaleX(0.9779);transform-origin:0 0;">cacheselect1</div>
<div class="a" style="left:128.5px;top:450px;width:9px;height:8px;background:#2e2f38;"></div>
<svg class="a" style="left:130.5px;top:452px;" width="4" height="4" viewBox="0 0 4 4"><circle cx="2" cy="2" r="1.8" fill="#3a5aa8"/></svg>
<div class="a" style="left:138.0px;top:450px;width:8.5px;height:8px;background:#303034;border-left:1px solid #444;"></div>
<div class="a" style="left:140.2px;top:453.6px;width:4.5px;height:0.8px;background:#707070;"></div>
<div class="a" style="left:142.05px;top:451.8px;width:0.8px;height:4.5px;background:#707070;"></div>
<div class="a" style="left:208.4px;top:334.7px;width:115.5px;height:70px;background:#6a6a6a;"></div>
<div class="a" style="left:208.4px;top:334.7px;width:19.4px;height:70px;background:#6b5ca8;"></div>
<div class="a" style="left:214.0px;top:334.7px;width:0.8px;height:70px;background:#8170c0;"></div>
<div class="a" style="left:214.8px;top:348.0px;width:13px;height:0.7px;background:#7e6fbd;"></div>
<div class="a" style="left:214.8px;top:361.0px;width:13px;height:0.7px;background:#7e6fbd;"></div>
<div class="a" style="left:214.8px;top:374.0px;width:13px;height:0.7px;background:#7e6fbd;"></div>
<div class="a" style="left:214.8px;top:386.0px;width:13px;height:0.7px;background:#7e6fbd;"></div>
<svg class="a" style="left:217.1px;top:338.2px;" width="7" height="7" viewBox="0 0 7 7"><circle cx="3.5" cy="3.5" r="3" stroke="#c4bcec" stroke-width="0.9" fill="none"/><circle cx="3.5" cy="3.5" r="1.3" fill="#c4bcec"/></svg>
<svg class="a" style="left:217.1px;top:351.5px;" width="7" height="7" viewBox="0 0 7 7"><path d="M0.5 6.5L3 2.5L3.5 4.5L6.5 0.5" stroke="#c4bcec" stroke-width="1.1" fill="none"/></svg>
<svg class="a" style="left:217.1px;top:364.5px;" width="7" height="6" viewBox="0 0 7 6"><path d="M0 3H4M3 0.5L6 3L3 5.5" stroke="#c4bcec" stroke-width="1.4" fill="none"/></svg>
<svg class="a" style="left:217.1px;top:376.5px;" width="7" height="7" viewBox="0 0 7 7"><circle cx="3" cy="4" r="2.6" fill="#c4bcec"/><path d="M4 1.5L6 0" stroke="#c4bcec" stroke-width="1.2"/></svg>
<div class="a" style="left:208.4px;top:359.59999999999997px;width:6.4px;height:3.2px;background:#8a7bcc;"></div>
<div class="a" style="left:208.4px;top:377.0px;width:6.4px;height:3.2px;background:#8a7bcc;"></div>
<div class="a" style="left:315.6px;top:334.7px;width:8.299999999999997px;height:70px;background:#8c8c8c;"></div>
<div class="a" style="left:318.4px;top:358.2px;width:5.5px;height:9.5px;background:#7060b0;"></div>
<div class="a" style="left:318.4px;top:371.7px;width:5.5px;height:9.5px;background:#7060b0;"></div>
<div class="a" style="left:229.6px;top:338.0px;width:86px;height:64.0px;background:#141414;"></div>
<svg class="a" style="left:229.6px;top:345.6px;overflow:hidden" width="86" height="48.4"><rect width="86" height="48.4" fill="#3a3a3a"/><path d="M-66.0 0L-17.6 48.4M-17.6 0L-66.0 48.4" stroke="#525252" stroke-width="0.45"/><path d="M-63.800000000000004 0L-15.400000000000006 48.4M-15.400000000000006 0L-63.800000000000004 48.4" stroke="#525252" stroke-width="0.45"/><path d="M-61.60000000000001 0L-13.20000000000001 48.4M-13.20000000000001 0L-61.60000000000001 48.4" stroke="#525252" stroke-width="0.45"/><path d="M-59.400000000000006 0L-11.000000000000007 48.4M-11.000000000000007 0L-59.400000000000006 48.4" stroke="#525252" stroke-width="0.45"/><path d="M-57.2 0L-8.800000000000004 48.4M-8.800000000000004 0L-57.2 48.4" stroke="#525252" stroke-width="0.45"/><path d="M-55.00000000000001 0L-6.6000000000000085 48.4M-6.6000000000000085 0L-55.00000000000001 48.4" stroke="#525252" stroke-width="0.45"/><path d="M-52.800000000000004 0L-4.400000000000006 48.4M-4.400000000000006 0L-52.800000000000004 48.4" stroke="#525252" stroke-width="0.45"/><path d="M-50.6 0L-2.200000000000003 48.4M-2.200000000000003 0L-50.6 48.4" stroke="#525252" stroke-width="0.45"/><path d="M-48.400000000000006 0L-7.105427357601002e-15 48.4M-7.105427357601002e-15 0L-48.400000000000006 48.4" stroke="#525252" stroke-width="0.45"/><path d="M-46.2 0L2.1999999999999957 48.4M2.1999999999999957 0L-46.2 48.4" stroke="#525252" stroke-width="0.45"/><path d="M-44.0 0L4.399999999999999 48.4M4.399999999999999 0L-44.0 48.4" stroke="#525252" stroke-width="0.45"/><path d="M-41.800000000000004 0L6.599999999999994 48.4M6.599999999999994 0L-41.800000000000004 48.4" stroke="#525252" stroke-width="0.45"/><path d="M-39.6 0L8.799999999999997 48.4M8.799999999999997 0L-39.6 48.4" stroke="#525252" stroke-width="0.45"/><path d="M-37.400000000000006 0L10.999999999999993 48.4M10.999999999999993 0L-37.400000000000006 48.4" stroke="#525252" stroke-width="0.45"/><path d="M-35.2 0L13.199999999999996 48.4M13.199999999999996 0L-35.2 48.4" stroke="#525252" stroke-width="0.45"/><path d="M-33.0 0L15.399999999999999 48.4M15.399999999999999 0L-33.0 48.4" stroke="#525252" stroke-width="0.45"/><path d="M-30.800000000000004 0L17.599999999999994 48.4M17.599999999999994 0L-30.800000000000004 48.4" stroke="#525252" stroke-width="0.45"/><path d="M-28.6 0L19.799999999999997 48.4M19.799999999999997 0L-28.6 48.4" stroke="#525252" stroke-width="0.45"/><path d="M-26.400000000000002 0L21.999999999999996 48.4M21.999999999999996 0L-26.400000000000002 48.4" stroke="#525252" stroke-width="0.45"/><path d="M-24.200000000000003 0L24.199999999999996 48.4M24.199999999999996 0L-24.200000000000003 48.4" stroke="#525252" stroke-width="0.45"/><path d="M-22.0 0L26.4 48.4M26.4 0L-22.0 48.4" stroke="#525252" stroke-width="0.45"/><path d="M-19.8 0L28.599999999999998 48.4M28.599999999999998 0L-19.8 48.4" stroke="#525252" stroke-width="0.45"/><path d="M-17.6 0L30.799999999999997 48.4M30.799999999999997 0L-17.6 48.4" stroke="#525252" stroke-width="0.45"/><path d="M-15.400000000000002 0L33.0 48.4M33.0 0L-15.400000000000002 48.4" stroke="#525252" stroke-width="0.45"/><path d="M-13.200000000000001 0L35.199999999999996 48.4M35.199999999999996 0L-13.200000000000001 48.4" stroke="#525252" stroke-width="0.45"/><path d="M-11.0 0L37.4 48.4M37.4 0L-11.0 48.4" stroke="#525252" stroke-width="0.45"/><path d="M-8.8 0L39.599999999999994 48.4M39.599999999999994 0L-8.8 48.4" stroke="#525252" stroke-width="0.45"/><path d="M-6.6000000000000005 0L41.8 48.4M41.8 0L-6.6000000000000005 48.4" stroke="#525252" stroke-width="0.45"/><path d="M-4.4 0L44.0 48.4M44.0 0L-4.4 48.4" stroke="#525252" stroke-width="0.45"/><path d="M-2.2 0L46.199999999999996 48.4M46.199999999999996 0L-2.2 48.4" stroke="#525252" stroke-width="0.45"/><path d="M0.0 0L48.4 48.4M48.4 0L0.0 48.4" stroke="#525252" stroke-width="0.45"/><path d="M2.2 0L50.6 48.4M50.6 0L2.2 48.4" stroke="#525252" stroke-width="0.45"/><path d="M4.4 0L52.8 48.4M52.8 0L4.4 48.4" stroke="#525252" stroke-width="0.45"/><path d="M6.6000000000000005 0L55.0 48.4M55.0 0L6.6000000000000005 48.4" stroke="#525252" stroke-width="0.45"/><path d="M8.8 0L57.2 48.4M57.2 0L8.8 48.4" stroke="#525252" stroke-width="0.45"/><path d="M11.0 0L59.4 48.4M59.4 0L11.0 48.4" stroke="#525252" stroke-width="0.45"/><path d="M13.200000000000001 0L61.6 48.4M61.6 0L13.200000000000001 48.4" stroke="#525252" stroke-width="0.45"/><path d="M15.400000000000002 0L63.8 48.4M63.8 0L15.400000000000002 48.4" stroke="#525252" stroke-width="0.45"/><path d="M17.6 0L66.0 48.4M66.0 0L17.6 48.4" stroke="#525252" stroke-width="0.45"/><path d="M19.8 0L68.2 48.4M68.2 0L19.8 48.4" stroke="#525252" stroke-width="0.45"/><path d="M22.0 0L70.4 48.4M70.4 0L22.0 48.4" stroke="#525252" stroke-width="0.45"/><path d="M24.200000000000003 0L72.6 48.4M72.6 0L24.200000000000003 48.4" stroke="#525252" stroke-width="0.45"/><path d="M26.400000000000002 0L74.8 48.4M74.8 0L26.400000000000002 48.4" stroke="#525252" stroke-width="0.45"/><path d="M28.6 0L77.0 48.4M77.0 0L28.6 48.4" stroke="#525252" stroke-width="0.45"/><path d="M30.800000000000004 0L79.2 48.4M79.2 0L30.800000000000004 48.4" stroke="#525252" stroke-width="0.45"/><path d="M33.0 0L81.4 48.4M81.4 0L33.0 48.4" stroke="#525252" stroke-width="0.45"/><path d="M35.2 0L83.6 48.4M83.6 0L35.2 48.4" stroke="#525252" stroke-width="0.45"/><path d="M37.400000000000006 0L85.80000000000001 48.4M85.80000000000001 0L37.400000000000006 48.4" stroke="#525252" stroke-width="0.45"/><path d="M39.6 0L88.0 48.4M88.0 0L39.6 48.4" stroke="#525252" stroke-width="0.45"/><path d="M41.800000000000004 0L90.2 48.4M90.2 0L41.800000000000004 48.4" stroke="#525252" stroke-width="0.45"/><path d="M44.0 0L92.4 48.4M92.4 0L44.0 48.4" stroke="#525252" stroke-width="0.45"/><path d="M46.2 0L94.6 48.4M94.6 0L46.2 48.4" stroke="#525252" stroke-width="0.45"/><path d="M48.400000000000006 0L96.80000000000001 48.4M96.80000000000001 0L48.400000000000006 48.4" stroke="#525252" stroke-width="0.45"/><path d="M50.6 0L99.0 48.4M99.0 0L50.6 48.4" stroke="#525252" stroke-width="0.45"/><path d="M52.800000000000004 0L101.2 48.4M101.2 0L52.800000000000004 48.4" stroke="#525252" stroke-width="0.45"/><path d="M55.00000000000001 0L103.4 48.4M103.4 0L55.00000000000001 48.4" stroke="#525252" stroke-width="0.45"/><path d="M57.2 0L105.6 48.4M105.6 0L57.2 48.4" stroke="#525252" stroke-width="0.45"/><path d="M59.400000000000006 0L107.80000000000001 48.4M107.80000000000001 0L59.400000000000006 48.4" stroke="#525252" stroke-width="0.45"/><path d="M61.60000000000001 0L110.0 48.4M110.0 0L61.60000000000001 48.4" stroke="#525252" stroke-width="0.45"/><path d="M63.800000000000004 0L112.2 48.4M112.2 0L63.800000000000004 48.4" stroke="#525252" stroke-width="0.45"/><path d="M66.0 0L114.4 48.4M114.4 0L66.0 48.4" stroke="#525252" stroke-width="0.45"/><path d="M68.2 0L116.6 48.4M116.6 0L68.2 48.4" stroke="#525252" stroke-width="0.45"/><path d="M70.4 0L118.80000000000001 48.4M118.80000000000001 0L70.4 48.4" stroke="#525252" stroke-width="0.45"/><path d="M72.60000000000001 0L121.0 48.4M121.0 0L72.60000000000001 48.4" stroke="#525252" stroke-width="0.45"/><path d="M74.80000000000001 0L123.20000000000002 48.4M123.20000000000002 0L74.80000000000001 48.4" stroke="#525252" stroke-width="0.45"/><path d="M77.0 0L125.4 48.4M125.4 0L77.0 48.4" stroke="#525252" stroke-width="0.45"/><path d="M79.2 0L127.6 48.4M127.6 0L79.2 48.4" stroke="#525252" stroke-width="0.45"/><path d="M81.4 0L129.8 48.4M129.8 0L81.4 48.4" stroke="#525252" stroke-width="0.45"/><path d="M83.60000000000001 0L132.0 48.4M132.0 0L83.60000000000001 48.4" stroke="#525252" stroke-width="0.45"/><path d="M85.80000000000001 0L134.20000000000002 48.4M134.20000000000002 0L85.80000000000001 48.4" stroke="#525252" stroke-width="0.45"/><path d="M88.0 0L136.4 48.4M136.4 0L88.0 48.4" stroke="#525252" stroke-width="0.45"/><path d="M90.2 0L138.6 48.4M138.6 0L90.2 48.4" stroke="#525252" stroke-width="0.45"/><path d="M92.4 0L140.8 48.4M140.8 0L92.4 48.4" stroke="#525252" stroke-width="0.45"/><path d="M94.60000000000001 0L143.0 48.4M143.0 0L94.60000000000001 48.4" stroke="#525252" stroke-width="0.45"/><path d="M96.80000000000001 0L145.20000000000002 48.4M145.20000000000002 0L96.80000000000001 48.4" stroke="#525252" stroke-width="0.45"/><path d="M99.00000000000001 0L147.4 48.4M147.4 0L99.00000000000001 48.4" stroke="#525252" stroke-width="0.45"/><path d="M101.2 0L149.6 48.4M149.6 0L101.2 48.4" stroke="#525252" stroke-width="0.45"/><path d="M103.4 0L151.8 48.4M151.8 0L103.4 48.4" stroke="#525252" stroke-width="0.45"/><path d="M105.60000000000001 0L154.0 48.4M154.0 0L105.60000000000001 48.4" stroke="#525252" stroke-width="0.45"/><path d="M107.80000000000001 0L156.20000000000002 48.4M156.20000000000002 0L107.80000000000001 48.4" stroke="#525252" stroke-width="0.45"/><path d="M110.00000000000001 0L158.4 48.4M158.4 0L110.00000000000001 48.4" stroke="#525252" stroke-width="0.45"/><path d="M112.2 0L160.6 48.4M160.6 0L112.2 48.4" stroke="#525252" stroke-width="0.45"/><path d="M114.4 0L162.8 48.4M162.8 0L114.4 48.4" stroke="#525252" stroke-width="0.45"/><path d="M116.60000000000001 0L165.0 48.4M165.0 0L116.60000000000001 48.4" stroke="#525252" stroke-width="0.45"/><path d="M118.80000000000001 0L167.20000000000002 48.4M167.20000000000002 0L118.80000000000001 48.4" stroke="#525252" stroke-width="0.45"/><path d="M121.00000000000001 0L169.4 48.4M169.4 0L121.00000000000001 48.4" stroke="#525252" stroke-width="0.45"/><path d="M123.20000000000002 0L171.60000000000002 48.4M171.60000000000002 0L123.20000000000002 48.4" stroke="#525252" stroke-width="0.45"/><path d="M125.4 0L173.8 48.4M173.8 0L125.4 48.4" stroke="#525252" stroke-width="0.45"/><path d="M127.60000000000001 0L176.0 48.4M176.0 0L127.60000000000001 48.4" stroke="#525252" stroke-width="0.45"/><path d="M129.8 0L178.20000000000002 48.4M178.20000000000002 0L129.8 48.4" stroke="#525252" stroke-width="0.45"/><path d="M132.0 0L180.4 48.4M180.4 0L132.0 48.4" stroke="#525252" stroke-width="0.45"/><path d="M134.20000000000002 0L182.60000000000002 48.4M182.60000000000002 0L134.20000000000002 48.4" stroke="#525252" stroke-width="0.45"/><path d="M136.4 0L184.8 48.4M184.8 0L136.4 48.4" stroke="#525252" stroke-width="0.45"/><path d="M4.4 0.0Q6.0 0.9 4.8 1.7T5.2 3.0" stroke="#c8c8c8" stroke-width="0.92" fill="none" opacity="0.90"/><path d="M7.9 3.4Q10.1 5.1 8.5 6.4T9.0 8.9" stroke="#c8c8c8" stroke-width="0.61" fill="none" opacity="0.97"/><path d="M7.1 5.6l0.9 2.2" stroke="#c8c8c8" stroke-width="0.6" opacity="0.97"/><path d="M10.2 2.0Q11.8 3.5 10.6 4.7T11.0 7.0" stroke="#c8c8c8" stroke-width="0.65" fill="none" opacity="0.96"/><path d="M9.6 4.0l-0.5 2.0" stroke="#c8c8c8" stroke-width="0.6" opacity="0.96"/><path d="M23.0 1.8Q24.6 3.5 23.4 5.0T23.8 7.6" stroke="#c8c8c8" stroke-width="0.69" fill="none" opacity="0.61"/><path d="M22.4 4.1l0.8 2.3" stroke="#c8c8c8" stroke-width="0.6" opacity="0.61"/><path d="M24.9 0.1Q26.5 1.5 25.3 2.7T25.7 4.9" stroke="#c8c8c8" stroke-width="0.92" fill="none" opacity="0.66"/><path d="M24.3 2.0l0.2 1.9" stroke="#c8c8c8" stroke-width="0.6" opacity="0.66"/><path d="M33.2 2.0Q34.8 3.6 33.6 5.0T34.0 7.4" stroke="#c8c8c8" stroke-width="0.69" fill="none" opacity="0.68"/><path d="M35.2 6.2Q36.8 7.6 35.6 8.8T36.0 11.0" stroke="#c8c8c8" stroke-width="0.98" fill="none" opacity="0.72"/><path d="M42.2 0.3Q43.8 1.8 42.6 3.0T43.0 5.1" stroke="#c8c8c8" stroke-width="0.98" fill="none" opacity="0.68"/><path d="M39.3 0.1Q41.5 1.0 39.9 1.8T40.4 3.1" stroke="#c8c8c8" stroke-width="0.72" fill="none" opacity="0.96"/><path d="M38.5 1.3l-0.7 1.2" stroke="#c8c8c8" stroke-width="0.6" opacity="0.96"/><path d="M0.9 10.3Q3.5 12.5 1.6 14.4T2.2 17.7" stroke="#c8c8c8" stroke-width="0.87" fill="none" opacity="0.60"/><path d="M0.0 13.3l-0.4 2.9" stroke="#c8c8c8" stroke-width="0.6" opacity="0.60"/><path d="M4.7 12.0Q7.7 14.1 5.4 15.8T6.2 18.9" stroke="#c8c8c8" stroke-width="0.73" fill="none" opacity="0.79"/><path d="M3.6 14.8l0.4 2.8" stroke="#c8c8c8" stroke-width="0.6" opacity="0.79"/><path d="M6.7 20.4Q9.1 21.5 7.3 22.3T7.9 23.9" stroke="#c8c8c8" stroke-width="0.90" fill="none" opacity="0.61"/><path d="M46.0 2.6Q47.6 4.2 46.4 5.6T46.8 8.0" stroke="#c8c8c8" stroke-width="0.83" fill="none" opacity="0.75"/><path d="M45.4 4.8l-0.9 2.2" stroke="#c8c8c8" stroke-width="0.6" opacity="0.75"/><path d="M52.7 4.1Q54.4 6.0 53.1 7.5T53.6 10.3" stroke="#c8c8c8" stroke-width="0.90" fill="none" opacity="0.68"/><path d="M64.0 0.1Q65.7 1.0 64.4 1.8T64.9 3.1" stroke="#c8c8c8" stroke-width="0.74" fill="none" opacity="0.74"/><path d="M67.0 0.1Q68.9 1.0 67.5 1.8T67.9 3.1" stroke="#c8c8c8" stroke-width="0.90" fill="none" opacity="0.64"/><path d="M73.7 0.1Q75.3 1.0 74.1 1.8T74.5 3.1" stroke="#c8c8c8" stroke-width="0.98" fill="none" opacity="0.61"/><path d="M73.0 1.3l-0.3 1.2" stroke="#c8c8c8" stroke-width="0.6" opacity="0.61"/><path d="M80.9 2.8Q83.9 5.1 81.6 7.0T82.4 10.3" stroke="#c8c8c8" stroke-width="0.74" fill="none" opacity="0.97"/><path d="M67.6 21.8Q71.2 23.9 68.5 25.6T69.4 28.7" stroke="#c8c8c8" stroke-width="0.66" fill="none" opacity="1.00"/><path d="M66.3 24.6l1.0 2.8" stroke="#c8c8c8" stroke-width="0.6" opacity="1.00"/><path d="M35.7 27.9Q38.4 30.5 36.4 32.6T37.1 36.5" stroke="#c8c8c8" stroke-width="0.78" fill="none" opacity="0.93"/><path d="M34.7 31.3l-0.9 3.4" stroke="#c8c8c8" stroke-width="0.6" opacity="0.93"/><path d="M31.5 33.8Q34.7 36.5 32.3 38.7T33.1 42.8" stroke="#c8c8c8" stroke-width="0.80" fill="none" opacity="0.61"/><path d="M75.1 29.6Q78.5 32.3 76.0 34.6T76.8 38.8" stroke="#c8c8c8" stroke-width="0.85" fill="none" opacity="0.98"/><path d="M58.4 23.5Q60.0 24.4 58.8 25.2T59.2 26.5" stroke="#c8c8c8" stroke-width="0.78" fill="none" opacity="0.72"/></svg>
<div class="a" style="left:208.4px;top:404.7px;width:115.5px;height:10px;background:#262629;border:1px solid #58585c;border-top:none;"></div>
<div class="a t" style="left:209.90px;top:407.46px;font-size:7.1px;color:#d2d2d2;font-family:'Liberation Mono',monospace;">sub1</div>
<div class="a" style="left:304.9px;top:405.7px;width:9px;height:8px;background:#2e2f38;"></div>
<svg class="a" style="left:306.9px;top:407.7px;" width="4" height="4" viewBox="0 0 4 4"><circle cx="2" cy="2" r="1.8" fill="#3a5aa8"/></svg>
<div class="a" style="left:314.4px;top:405.7px;width:8.5px;height:8px;background:#303034;border-left:1px solid #444;"></div>
<div class="a" style="left:316.59999999999997px;top:409.3px;width:4.5px;height:0.8px;background:#707070;"></div>
<div class="a" style="left:318.45px;top:407.5px;width:0.8px;height:4.5px;background:#707070;"></div>
<div class="a" style="left:341px;top:334.7px;width:115.5px;height:70px;background:#6a6a6a;"></div>
<div class="a" style="left:341px;top:334.7px;width:19.4px;height:70px;background:#6b5ca8;"></div>
<div class="a" style="left:346.6px;top:334.7px;width:0.8px;height:70px;background:#8170c0;"></div>
<div class="a" style="left:347.4px;top:348.0px;width:13px;height:0.7px;background:#7e6fbd;"></div>
<div class="a" style="left:347.4px;top:361.0px;width:13px;height:0.7px;background:#7e6fbd;"></div>
<div class="a" style="left:347.4px;top:374.0px;width:13px;height:0.7px;background:#7e6fbd;"></div>
<div class="a" style="left:347.4px;top:386.0px;width:13px;height:0.7px;background:#7e6fbd;"></div>
<svg class="a" style="left:349.7px;top:338.2px;" width="7" height="7" viewBox="0 0 7 7"><circle cx="3.5" cy="3.5" r="3" stroke="#c4bcec" stroke-width="0.9" fill="none"/><circle cx="3.5" cy="3.5" r="1.3" fill="#c4bcec"/></svg>
<svg class="a" style="left:349.7px;top:351.5px;" width="7" height="7" viewBox="0 0 7 7"><path d="M0.5 6.5L3 2.5L3.5 4.5L6.5 0.5" stroke="#c4bcec" stroke-width="1.1" fill="none"/></svg>
<svg class="a" style="left:349.7px;top:364.5px;" width="7" height="6" viewBox="0 0 7 6"><path d="M0 3H4M3 0.5L6 3L3 5.5" stroke="#c4bcec" stroke-width="1.4" fill="none"/></svg>
<svg class="a" style="left:349.7px;top:376.5px;" width="7" height="7" viewBox="0 0 7 7"><circle cx="3" cy="4" r="2.6" fill="#c4bcec"/><path d="M4 1.5L6 0" stroke="#c4bcec" stroke-width="1.2"/></svg>
<div class="a" style="left:341px;top:368.2px;width:6.4px;height:3.2px;background:#8a7bcc;"></div>
<div class="a" style="left:448.2px;top:334.7px;width:8.299999999999997px;height:70px;background:#8c8c8c;"></div>
<div class="a" style="left:451px;top:358.2px;width:5.5px;height:9.5px;background:#7060b0;"></div>
<div class="a" style="left:451px;top:371.7px;width:5.5px;height:9.5px;background:#7060b0;"></div>
<div class="a" style="left:362.2px;top:338.0px;width:86px;height:64.0px;background:#141414;"></div>
<svg class="a" style="left:362.2px;top:345.6px;overflow:hidden" width="86" height="48.4"><rect width="86" height="48.4" fill="#3a3a3a"/><path d="M-66.0 0L-17.6 48.4M-17.6 0L-66.0 48.4" stroke="#525252" stroke-width="0.45"/><path d="M-63.800000000000004 0L-15.400000000000006 48.4M-15.400000000000006 0L-63.800000000000004 48.4" stroke="#525252" stroke-width="0.45"/><path d="M-61.60000000000001 0L-13.20000000000001 48.4M-13.20000000000001 0L-61.60000000000001 48.4" stroke="#525252" stroke-width="0.45"/><path d="M-59.400000000000006 0L-11.000000000000007 48.4M-11.000000000000007 0L-59.400000000000006 48.4" stroke="#525252" stroke-width="0.45"/><path d="M-57.2 0L-8.800000000000004 48.4M-8.800000000000004 0L-57.2 48.4" stroke="#525252" stroke-width="0.45"/><path d="M-55.00000000000001 0L-6.6000000000000085 48.4M-6.6000000000000085 0L-55.00000000000001 48.4" stroke="#525252" stroke-width="0.45"/><path d="M-52.800000000000004 0L-4.400000000000006 48.4M-4.400000000000006 0L-52.800000000000004 48.4" stroke="#525252" stroke-width="0.45"/><path d="M-50.6 0L-2.200000000000003 48.4M-2.200000000000003 0L-50.6 48.4" stroke="#525252" stroke-width="0.45"/><path d="M-48.400000000000006 0L-7.105427357601002e-15 48.4M-7.105427357601002e-15 0L-48.400000000000006 48.4" stroke="#525252" stroke-width="0.45"/><path d="M-46.2 0L2.1999999999999957 48.4M2.1999999999999957 0L-46.2 48.4" stroke="#525252" stroke-width="0.45"/><path d="M-44.0 0L4.399999999999999 48.4M4.399999999999999 0L-44.0 48.4" stroke="#525252" stroke-width="0.45"/><path d="M-41.800000000000004 0L6.599999999999994 48.4M6.599999999999994 0L-41.800000000000004 48.4" stroke="#525252" stroke-width="0.45"/><path d="M-39.6 0L8.799999999999997 48.4M8.799999999999997 0L-39.6 48.4" stroke="#525252" stroke-width="0.45"/><path d="M-37.400000000000006 0L10.999999999999993 48.4M10.999999999999993 0L-37.400000000000006 48.4" stroke="#525252" stroke-width="0.45"/><path d="M-35.2 0L13.199999999999996 48.4M13.199999999999996 0L-35.2 48.4" stroke="#525252" stroke-width="0.45"/><path d="M-33.0 0L15.399999999999999 48.4M15.399999999999999 0L-33.0 48.4" stroke="#525252" stroke-width="0.45"/><path d="M-30.800000000000004 0L17.599999999999994 48.4M17.599999999999994 0L-30.800000000000004 48.4" stroke="#525252" stroke-width="0.45"/><path d="M-28.6 0L19.799999999999997 48.4M19.799999999999997 0L-28.6 48.4" stroke="#525252" stroke-width="0.45"/><path d="M-26.400000000000002 0L21.999999999999996 48.4M21.999999999999996 0L-26.400000000000002 48.4" stroke="#525252" stroke-width="0.45"/><path d="M-24.200000000000003 0L24.199999999999996 48.4M24.199999999999996 0L-24.200000000000003 48.4" stroke="#525252" stroke-width="0.45"/><path d="M-22.0 0L26.4 48.4M26.4 0L-22.0 48.4" stroke="#525252" stroke-width="0.45"/><path d="M-19.8 0L28.599999999999998 48.4M28.599999999999998 0L-19.8 48.4" stroke="#525252" stroke-width="0.45"/><path d="M-17.6 0L30.799999999999997 48.4M30.799999999999997 0L-17.6 48.4" stroke="#525252" stroke-width="0.45"/><path d="M-15.400000000000002 0L33.0 48.4M33.0 0L-15.400000000000002 48.4" stroke="#525252" stroke-width="0.45"/><path d="M-13.200000000000001 0L35.199999999999996 48.4M35.199999999999996 0L-13.200000000000001 48.4" stroke="#525252" stroke-width="0.45"/><path d="M-11.0 0L37.4 48.4M37.4 0L-11.0 48.4" stroke="#525252" stroke-width="0.45"/><path d="M-8.8 0L39.599999999999994 48.4M39.599999999999994 0L-8.8 48.4" stroke="#525252" stroke-width="0.45"/><path d="M-6.6000000000000005 0L41.8 48.4M41.8 0L-6.6000000000000005 48.4" stroke="#525252" stroke-width="0.45"/><path d="M-4.4 0L44.0 48.4M44.0 0L-4.4 48.4" stroke="#525252" stroke-width="0.45"/><path d="M-2.2 0L46.199999999999996 48.4M46.199999999999996 0L-2.2 48.4" stroke="#525252" stroke-width="0.45"/><path d="M0.0 0L48.4 48.4M48.4 0L0.0 48.4" stroke="#525252" stroke-width="0.45"/><path d="M2.2 0L50.6 48.4M50.6 0L2.2 48.4" stroke="#525252" stroke-width="0.45"/><path d="M4.4 0L52.8 48.4M52.8 0L4.4 48.4" stroke="#525252" stroke-width="0.45"/><path d="M6.6000000000000005 0L55.0 48.4M55.0 0L6.6000000000000005 48.4" stroke="#525252" stroke-width="0.45"/><path d="M8.8 0L57.2 48.4M57.2 0L8.8 48.4" stroke="#525252" stroke-width="0.45"/><path d="M11.0 0L59.4 48.4M59.4 0L11.0 48.4" stroke="#525252" stroke-width="0.45"/><path d="M13.200000000000001 0L61.6 48.4M61.6 0L13.200000000000001 48.4" stroke="#525252" stroke-width="0.45"/><path d="M15.400000000000002 0L63.8 48.4M63.8 0L15.400000000000002 48.4" stroke="#525252" stroke-width="0.45"/><path d="M17.6 0L66.0 48.4M66.0 0L17.6 48.4" stroke="#525252" stroke-width="0.45"/><path d="M19.8 0L68.2 48.4M68.2 0L19.8 48.4" stroke="#525252" stroke-width="0.45"/><path d="M22.0 0L70.4 48.4M70.4 0L22.0 48.4" stroke="#525252" stroke-width="0.45"/><path d="M24.200000000000003 0L72.6 48.4M72.6 0L24.200000000000003 48.4" stroke="#525252" stroke-width="0.45"/><path d="M26.400000000000002 0L74.8 48.4M74.8 0L26.400000000000002 48.4" stroke="#525252" stroke-width="0.45"/><path d="M28.6 0L77.0 48.4M77.0 0L28.6 48.4" stroke="#525252" stroke-width="0.45"/><path d="M30.800000000000004 0L79.2 48.4M79.2 0L30.800000000000004 48.4" stroke="#525252" stroke-width="0.45"/><path d="M33.0 0L81.4 48.4M81.4 0L33.0 48.4" stroke="#525252" stroke-width="0.45"/><path d="M35.2 0L83.6 48.4M83.6 0L35.2 48.4" stroke="#525252" stroke-width="0.45"/><path d="M37.400000000000006 0L85.80000000000001 48.4M85.80000000000001 0L37.400000000000006 48.4" stroke="#525252" stroke-width="0.45"/><path d="M39.6 0L88.0 48.4M88.0 0L39.6 48.4" stroke="#525252" stroke-width="0.45"/><path d="M41.800000000000004 0L90.2 48.4M90.2 0L41.800000000000004 48.4" stroke="#525252" stroke-width="0.45"/><path d="M44.0 0L92.4 48.4M92.4 0L44.0 48.4" stroke="#525252" stroke-width="0.45"/><path d="M46.2 0L94.6 48.4M94.6 0L46.2 48.4" stroke="#525252" stroke-width="0.45"/><path d="M48.400000000000006 0L96.80000000000001 48.4M96.80000000000001 0L48.400000000000006 48.4" stroke="#525252" stroke-width="0.45"/><path d="M50.6 0L99.0 48.4M99.0 0L50.6 48.4" stroke="#525252" stroke-width="0.45"/><path d="M52.800000000000004 0L101.2 48.4M101.2 0L52.800000000000004 48.4" stroke="#525252" stroke-width="0.45"/><path d="M55.00000000000001 0L103.4 48.4M103.4 0L55.00000000000001 48.4" stroke="#525252" stroke-width="0.45"/><path d="M57.2 0L105.6 48.4M105.6 0L57.2 48.4" stroke="#525252" stroke-width="0.45"/><path d="M59.400000000000006 0L107.80000000000001 48.4M107.80000000000001 0L59.400000000000006 48.4" stroke="#525252" stroke-width="0.45"/><path d="M61.60000000000001 0L110.0 48.4M110.0 0L61.60000000000001 48.4" stroke="#525252" stroke-width="0.45"/><path d="M63.800000000000004 0L112.2 48.4M112.2 0L63.800000000000004 48.4" stroke="#525252" stroke-width="0.45"/><path d="M66.0 0L114.4 48.4M114.4 0L66.0 48.4" stroke="#525252" stroke-width="0.45"/><path d="M68.2 0L116.6 48.4M116.6 0L68.2 48.4" stroke="#525252" stroke-width="0.45"/><path d="M70.4 0L118.80000000000001 48.4M118.80000000000001 0L70.4 48.4" stroke="#525252" stroke-width="0.45"/><path d="M72.60000000000001 0L121.0 48.4M121.0 0L72.60000000000001 48.4" stroke="#525252" stroke-width="0.45"/><path d="M74.80000000000001 0L123.20000000000002 48.4M123.20000000000002 0L74.80000000000001 48.4" stroke="#525252" stroke-width="0.45"/><path d="M77.0 0L125.4 48.4M125.4 0L77.0 48.4" stroke="#525252" stroke-width="0.45"/><path d="M79.2 0L127.6 48.4M127.6 0L79.2 48.4" stroke="#525252" stroke-width="0.45"/><path d="M81.4 0L129.8 48.4M129.8 0L81.4 48.4" stroke="#525252" stroke-width="0.45"/><path d="M83.60000000000001 0L132.0 48.4M132.0 0L83.60000000000001 48.4" stroke="#525252" stroke-width="0.45"/><path d="M85.80000000000001 0L134.20000000000002 48.4M134.20000000000002 0L85.80000000000001 48.4" stroke="#525252" stroke-width="0.45"/><path d="M88.0 0L136.4 48.4M136.4 0L88.0 48.4" stroke="#525252" stroke-width="0.45"/><path d="M90.2 0L138.6 48.4M138.6 0L90.2 48.4" stroke="#525252" stroke-width="0.45"/><path d="M92.4 0L140.8 48.4M140.8 0L92.4 48.4" stroke="#525252" stroke-width="0.45"/><path d="M94.60000000000001 0L143.0 48.4M143.0 0L94.60000000000001 48.4" stroke="#525252" stroke-width="0.45"/><path d="M96.80000000000001 0L145.20000000000002 48.4M145.20000000000002 0L96.80000000000001 48.4" stroke="#525252" stroke-width="0.45"/><path d="M99.00000000000001 0L147.4 48.4M147.4 0L99.00000000000001 48.4" stroke="#525252" stroke-width="0.45"/><path d="M101.2 0L149.6 48.4M149.6 0L101.2 48.4" stroke="#525252" stroke-width="0.45"/><path d="M103.4 0L151.8 48.4M151.8 0L103.4 48.4" stroke="#525252" stroke-width="0.45"/><path d="M105.60000000000001 0L154.0 48.4M154.0 0L105.60000000000001 48.4" stroke="#525252" stroke-width="0.45"/><path d="M107.80000000000001 0L156.20000000000002 48.4M156.20000000000002 0L107.80000000000001 48.4" stroke="#525252" stroke-width="0.45"/><path d="M110.00000000000001 0L158.4 48.4M158.4 0L110.00000000000001 48.4" stroke="#525252" stroke-width="0.45"/><path d="M112.2 0L160.6 48.4M160.6 0L112.2 48.4" stroke="#525252" stroke-width="0.45"/><path d="M114.4 0L162.8 48.4M162.8 0L114.4 48.4" stroke="#525252" stroke-width="0.45"/><path d="M116.60000000000001 0L165.0 48.4M165.0 0L116.60000000000001 48.4" stroke="#525252" stroke-width="0.45"/><path d="M118.80000000000001 0L167.20000000000002 48.4M167.20000000000002 0L118.80000000000001 48.4" stroke="#525252" stroke-width="0.45"/><path d="M121.00000000000001 0L169.4 48.4M169.4 0L121.00000000000001 48.4" stroke="#525252" stroke-width="0.45"/><path d="M123.20000000000002 0L171.60000000000002 48.4M171.60000000000002 0L123.20000000000002 48.4" stroke="#525252" stroke-width="0.45"/><path d="M125.4 0L173.8 48.4M173.8 0L125.4 48.4" stroke="#525252" stroke-width="0.45"/><path d="M127.60000000000001 0L176.0 48.4M176.0 0L127.60000000000001 48.4" stroke="#525252" stroke-width="0.45"/><path d="M129.8 0L178.20000000000002 48.4M178.20000000000002 0L129.8 48.4" stroke="#525252" stroke-width="0.45"/><path d="M132.0 0L180.4 48.4M180.4 0L132.0 48.4" stroke="#525252" stroke-width="0.45"/><path d="M134.20000000000002 0L182.60000000000002 48.4M182.60000000000002 0L134.20000000000002 48.4" stroke="#525252" stroke-width="0.45"/><path d="M136.4 0L184.8 48.4M184.8 0L136.4 48.4" stroke="#525252" stroke-width="0.45"/><path d="M4.4 0.0Q6.0 0.9 4.8 1.7T5.2 3.0" stroke="#f0f0f0" stroke-width="0.97" fill="none" opacity="0.82"/><path d="M3.8 1.2l0.0 1.2" stroke="#f0f0f0" stroke-width="0.6" opacity="0.82"/><path d="M7.9 3.4Q10.1 5.1 8.5 6.4T9.0 8.9" stroke="#f0f0f0" stroke-width="0.80" fill="none" opacity="0.67"/><path d="M10.2 2.0Q11.8 3.5 10.6 4.7T11.0 7.0" stroke="#f0f0f0" stroke-width="0.72" fill="none" opacity="0.64"/><path d="M9.6 4.0l0.6 2.0" stroke="#f0f0f0" stroke-width="0.6" opacity="0.64"/><path d="M11.7 2.0Q13.3 3.4 12.1 4.6T12.5 6.8" stroke="#f0f0f0" stroke-width="0.99" fill="none" opacity="0.62"/><path d="M23.0 1.8Q24.6 3.5 23.4 5.0T23.8 7.6" stroke="#f0f0f0" stroke-width="0.66" fill="none" opacity="0.85"/><path d="M22.4 4.1l0.1 2.3" stroke="#f0f0f0" stroke-width="0.6" opacity="0.85"/><path d="M35.2 6.2Q36.8 7.6 35.6 8.8T36.0 11.0" stroke="#f0f0f0" stroke-width="0.94" fill="none" opacity="0.78"/><path d="M42.2 0.3Q43.8 1.8 42.6 3.0T43.0 5.1" stroke="#f0f0f0" stroke-width="0.86" fill="none" opacity="0.80"/><path d="M41.6 2.2l-0.4 1.9" stroke="#f0f0f0" stroke-width="0.6" opacity="0.80"/><path d="M39.3 0.1Q41.5 1.0 39.9 1.8T40.4 3.1" stroke="#f0f0f0" stroke-width="0.94" fill="none" opacity="1.00"/><path d="M4.7 12.0Q7.7 14.1 5.4 15.8T6.2 18.9" stroke="#f0f0f0" stroke-width="0.94" fill="none" opacity="0.76"/><path d="M3.6 14.8l0.9 2.8" stroke="#f0f0f0" stroke-width="0.6" opacity="0.76"/><path d="M31.7 15.2Q33.7 17.0 32.2 18.5T32.7 21.2" stroke="#f0f0f0" stroke-width="0.68" fill="none" opacity="0.60"/><path d="M6.7 20.4Q9.1 21.5 7.3 22.3T7.9 23.9" stroke="#f0f0f0" stroke-width="0.76" fill="none" opacity="0.99"/><path d="M5.9 21.8l0.3 1.4" stroke="#f0f0f0" stroke-width="0.6" opacity="0.99"/><path d="M44.3 1.1Q45.9 2.8 44.7 4.3T45.1 6.8" stroke="#f0f0f0" stroke-width="0.63" fill="none" opacity="0.71"/><path d="M43.7 3.4l0.9 2.3" stroke="#f0f0f0" stroke-width="0.6" opacity="0.71"/><path d="M46.0 2.6Q47.6 4.2 46.4 5.6T46.8 8.0" stroke="#f0f0f0" stroke-width="0.70" fill="none" opacity="0.65"/><path d="M45.4 4.8l-0.9 2.2" stroke="#f0f0f0" stroke-width="0.6" opacity="0.65"/><path d="M49.1 2.2Q50.7 3.9 49.5 5.3T49.9 7.8" stroke="#f0f0f0" stroke-width="0.82" fill="none" opacity="0.67"/><path d="M48.5 4.5l-0.6 2.3" stroke="#f0f0f0" stroke-width="0.6" opacity="0.67"/><path d="M52.7 4.1Q54.4 6.0 53.1 7.5T53.6 10.3" stroke="#f0f0f0" stroke-width="0.86" fill="none" opacity="0.65"/><path d="M52.1 6.6l-0.2 2.5" stroke="#f0f0f0" stroke-width="0.6" opacity="0.65"/><path d="M73.7 0.1Q75.3 1.0 74.1 1.8T74.5 3.1" stroke="#f0f0f0" stroke-width="0.72" fill="none" opacity="0.92"/><path d="M43.3 12.9Q45.0 14.8 43.7 16.4T44.2 19.3" stroke="#f0f0f0" stroke-width="0.86" fill="none" opacity="0.94"/><path d="M42.7 15.5l1.0 2.6" stroke="#f0f0f0" stroke-width="0.6" opacity="0.94"/><path d="M53.1 17.2Q55.3 19.3 53.7 20.9T54.2 23.9" stroke="#f0f0f0" stroke-width="0.72" fill="none" opacity="0.73"/><path d="M52.3 19.9l-0.8 2.7" stroke="#f0f0f0" stroke-width="0.6" opacity="0.73"/><path d="M58.0 17.9Q60.3 19.7 58.6 21.2T59.2 23.9" stroke="#f0f0f0" stroke-width="0.84" fill="none" opacity="0.70"/><path d="M57.1 20.3l-0.1 2.4" stroke="#f0f0f0" stroke-width="0.6" opacity="0.70"/><path d="M64.3 21.4Q67.1 23.8 65.0 25.7T65.7 29.2" stroke="#f0f0f0" stroke-width="0.83" fill="none" opacity="0.79"/><path d="M13.3 25.0Q16.5 27.4 14.1 29.4T14.9 32.9" stroke="#f0f0f0" stroke-width="0.70" fill="none" opacity="0.93"/><path d="M12.1 28.2l0.5 3.2" stroke="#f0f0f0" stroke-width="0.6" opacity="0.93"/><path d="M12.2 32.5Q15.7 35.0 13.1 37.1T14.0 40.9" stroke="#f0f0f0" stroke-width="0.98" fill="none" opacity="0.68"/><path d="M35.7 27.9Q38.4 30.5 36.4 32.6T37.1 36.5" stroke="#f0f0f0" stroke-width="0.64" fill="none" opacity="0.77"/><path d="M34.7 31.3l0.9 3.4" stroke="#f0f0f0" stroke-width="0.6" opacity="0.77"/><path d="M37.8 39.4Q40.3 41.7 38.4 43.7T39.0 47.1" stroke="#f0f0f0" stroke-width="0.93" fill="none" opacity="0.70"/><path d="M85.6 27.1Q87.2 28.0 86.0 28.7T86.4 30.1" stroke="#f0f0f0" stroke-width="0.69" fill="none" opacity="0.63"/><path d="M53.4 23.5Q55.0 24.4 53.8 25.2T54.2 26.5" stroke="#f0f0f0" stroke-width="0.71" fill="none" opacity="0.85"/></svg>
<div class="a" style="left:341px;top:404.7px;width:115.5px;height:10px;background:#262629;border:1px solid #58585c;border-top:none;"></div>
<div class="a t" style="left:342.50px;top:407.46px;font-size:7.1px;color:#d2d2d2;font-family:'Liberation Mono',monospace;transform:scaleX(0.9891);transform-origin:0 0;">thresh1</div>
<div class="a" style="left:437.5px;top:405.7px;width:9px;height:8px;background:#2e2f38;"></div>
<svg class="a" style="left:439.5px;top:407.7px;" width="4" height="4" viewBox="0 0 4 4"><circle cx="2" cy="2" r="1.8" fill="#3a5aa8"/></svg>
<div class="a" style="left:447.0px;top:405.7px;width:8.5px;height:8px;background:#303034;border-left:1px solid #444;"></div>
<div class="a" style="left:449.2px;top:409.3px;width:4.5px;height:0.8px;background:#707070;"></div>
<div class="a" style="left:451.05px;top:407.5px;width:0.8px;height:4.5px;background:#707070;"></div>
<div class="a" style="left:282.8px;top:55.5px;width:229.2px;height:174px;background:#3d3d3d;"></div>
<div class="a" style="left:282.8px;top:55.5px;width:229.2px;height:12.5px;background:#5b4f86;"></div>
<div class="a" style="left:306px;top:56.5px;width:205px;height:11px;background:#6d6294;"></div>
<div class="a t" style="left:285.00px;top:58.96px;font-size:6.9px;color:#e4e0f0;font-family:'Liberation Sans',sans-serif;font-weight:bold;transform:scaleX(0.9174);transform-origin:0 0;">Cache</div>
<div class="a t" style="left:308.00px;top:58.52px;font-size:8px;color:#e8e6f0;font-family:'Liberation Sans',sans-serif;transform:scaleX(0.9885);transform-origin:0 0;">cache1</div>
<div class="a" style="left:282.8px;top:68px;width:229.2px;height:12.8px;background:#544781;"></div>
<div class="a t" style="left:285.00px;top:71.10px;font-size:8.5px;color:#e8e6f2;font-family:'Liberation Sans',sans-serif;font-weight:bold;">?</div>
<svg class="a" style="left:295px;top:69.5px;" width="10" height="10" viewBox="0 0 10 10"><rect width="10" height="10" fill="#3f6fa8"/><rect y="6" width="4.6" height="4" fill="#f2d040"/><rect x="5.4" y="6" width="4.6" height="4" fill="#f2d040"/></svg>
<div class="a t" style="left:296.60px;top:71.10px;font-size:8.5px;color:#f0f0f0;font-family:'Liberation Sans',sans-serif;font-weight:bold;">?</div>
<div class="a" style="left:310.5px;top:69.5px;width:2px;height:1.8px;background:#e8e6f2;"></div>
<div class="a" style="left:310.5px;top:72.3px;width:2px;height:6.3px;background:#e8e6f2;"></div>
<svg class="a" style="left:442.3px;top:71px;" width="7" height="7" viewBox="0 0 7 7"><path d="M0.8 6.2L5.5 1.5" stroke="#b8b0d4" stroke-width="2.4" stroke-linecap="round"/></svg>
<svg class="a" style="left:453px;top:71.5px;" width="9" height="6.5" viewBox="0 0 9 6.5"><ellipse cx="4.5" cy="2.8" rx="4.4" ry="2.7" fill="#aaa2c8"/><path d="M1.5 4.5L0.5 6.5L3.5 5z" fill="#aaa2c8"/></svg>
<svg class="a" style="left:465px;top:70px;" width="9.5" height="9" viewBox="0 0 9.5 9"><path d="M1 5.2L4.8 1.2H7.8L8.6 4.2L4.6 8.2z" stroke="#ecebf4" stroke-width="1" fill="none" stroke-linejoin="round"/><circle cx="6.6" cy="3" r="0.7" fill="#ecebf4"/></svg>
<svg class="a" style="left:477px;top:70px;" width="9.5" height="9.5" viewBox="0 0 9.5 9.5"><circle cx="4.75" cy="4.75" r="4.7" fill="#f4f4f4"/><path d="M4.6 1.2C2.6 1.2 1.4 2.4 1.4 4.4C1.4 5.4 1.9 6.1 2.6 6.3L2.8 4.8C2.9 4.2 3.4 3.9 4 3.9H6C6.5 3.9 6.9 3.5 6.9 3V2.2C6.9 1.6 6 1.2 4.6 1.2z" fill="#3e78c0"/><path d="M4.9 8.3C6.9 8.3 8.1 7.1 8.1 5.1C8.1 4.1 7.6 3.4 6.9 3.2L6.7 4.7C6.6 5.3 6.1 5.6 5.5 5.6H3.5C3 5.6 2.6 6 2.6 6.5V7.3C2.6 7.9 3.5 8.3 4.9 8.3z" fill="#f0c830"/></svg>
<div class="a" style="left:489px;top:73.9px;width:7.5px;height:1.5px;background:#f0eef6;"></div>
<div class="a" style="left:492px;top:71px;width:1.5px;height:7.5px;background:#f0eef6;"></div>
<svg class="a" style="left:500px;top:70px;" width="9.5" height="9.5" viewBox="0 0 9.5 9.5"><circle cx="4.75" cy="4.75" r="4.2" stroke="#e8e6f2" stroke-width="0.9" fill="none"/><circle cx="4.75" cy="4.75" r="2.6" stroke="#e8e6f2" stroke-width="0.9" fill="none"/><circle cx="4.75" cy="4.75" r="1" fill="#e8e6f2"/></svg>
<div class="a t" style="left:287.80px;top:87.20px;font-size:7.2px;color:#d0d0d0;font-family:'Liberation Sans',sans-serif;transform:scaleX(0.9225);transform-origin:0 0;">Cache</div>
<div class="a t" style="left:313.60px;top:87.20px;font-size:7.2px;color:#c0c0c0;font-family:'Liberation Sans',sans-serif;transform:scaleX(0.9621);transform-origin:0 0;">Common</div>
<div class="a" style="left:285px;top:96px;width:226px;height:0.8px;background:#8a8a8a;"></div>
<div class="a" style="left:285px;top:95.5px;width:25px;height:1.8px;background:#e0e0e0;"></div>
<div class="a t" style="left:357.62px;top:102.22px;font-size:7.3px;color:#c8c8c8;font-family:'Liberation Sans',sans-serif;transform:scaleX(0.9750);transform-origin:0 0;">Active</div>
<div class="a" style="left:380px;top:101.2px;width:12.5px;height:9.2px;background:#8a8a8a;"></div>
<div class="a" style="left:392.5px;top:101.2px;width:13.3px;height:9.2px;background:#b4b4b4;"></div>
<div class="a t" style="left:393.80px;top:102.22px;font-size:7.3px;color:#2a2a2a;font-family:'Liberation Sans',sans-serif;">On</div>
<div class="a" style="left:408px;top:101.2px;width:25px;height:9.2px;background:#585858;"></div>
<div class="a t" style="left:411.50px;top:102.22px;font-size:7.3px;color:#b8b8b8;font-family:'Liberation Sans',sans-serif;transform:scaleX(1.0131);transform-origin:0 0;">Pulse</div>
<div class="a t" style="left:293.52px;top:113.92px;font-size:7.3px;color:#c8c8c8;font-family:'Liberation Sans',sans-serif;transform:scaleX(0.9750);transform-origin:0 0;">Get One Image on Startup</div>
<div class="a" style="left:380px;top:112.9px;width:12.5px;height:9.2px;background:#2b2b2b;"></div>
<div class="a" style="left:392.5px;top:112.9px;width:13.5px;height:9.2px;background:#555560;"></div>
<div class="a t" style="left:381.00px;top:113.92px;font-size:7.3px;color:#d8d8d8;font-family:'Liberation Sans',sans-serif;">Off</div>
<div class="a t" style="left:329.12px;top:125.82px;font-size:7.3px;color:#5e5e5e;font-family:'Liberation Sans',sans-serif;transform:scaleX(0.9750);transform-origin:0 0;">Replace Single</div>
<div class="a" style="left:380px;top:124.80000000000001px;width:12.5px;height:9.2px;background:#474747;"></div>
<div class="a" style="left:392.5px;top:124.80000000000001px;width:13.5px;height:9.2px;background:#444448;"></div>
<div class="a t" style="left:381.00px;top:125.82px;font-size:7.3px;color:#5a5a5a;font-family:'Liberation Sans',sans-serif;">Off</div>
<div class="a" style="left:408px;top:124.80000000000001px;width:25px;height:9.2px;background:#585858;"></div>
<div class="a t" style="left:411.50px;top:125.82px;font-size:7.3px;color:#9a9a9a;font-family:'Liberation Sans',sans-serif;transform:scaleX(1.0131);transform-origin:0 0;">Pulse</div>
<div class="a t" style="left:331.50px;top:137.42px;font-size:7.3px;color:#5e5e5e;font-family:'Liberation Sans',sans-serif;transform:scaleX(0.9750);transform-origin:0 0;">Replace Index</div>
<div class="a t" style="left:381.00px;top:137.42px;font-size:7.3px;color:#5a5a5a;font-family:'Liberation Sans',sans-serif;">0</div>
<div class="a" style="left:408px;top:140.5px;width:103px;height:1px;background:#333;"></div>
<div class="a" style="left:507px;top:137.0px;width:4px;height:8px;background:#4a4a4a;"></div>
<div class="a t" style="left:354.46px;top:149.12px;font-size:7.3px;color:#c8c8c8;font-family:'Liberation Sans',sans-serif;transform:scaleX(0.9750);transform-origin:0 0;">Pre-Fill</div>
<div class="a" style="left:380px;top:148.1px;width:12.5px;height:9.2px;background:#2b2b2b;"></div>
<div class="a" style="left:392.5px;top:148.1px;width:13.5px;height:9.2px;background:#555560;"></div>
<div class="a t" style="left:381.00px;top:149.12px;font-size:7.3px;color:#d8d8d8;font-family:'Liberation Sans',sans-serif;">Off</div>
<div class="a" style="left:408px;top:148.1px;width:25px;height:9.2px;background:#585858;"></div>
<div class="a t" style="left:411.50px;top:149.12px;font-size:7.3px;color:#b8b8b8;font-family:'Liberation Sans',sans-serif;transform:scaleX(1.0131);transform-origin:0 0;">Pulse</div>
<div class="a t" style="left:340.60px;top:160.92px;font-size:7.3px;color:#c8c8c8;font-family:'Liberation Sans',sans-serif;transform:scaleX(0.9750);transform-origin:0 0;">Cache Size</div>
<div class="a" style="left:380px;top:159.9px;width:26.4px;height:9.2px;background:#4f4f4f;"></div>
<div class="a t" style="left:381.50px;top:160.92px;font-size:7.3px;color:#e0e0e0;font-family:'Liberation Sans',sans-serif;">10</div>
<div class="a t" style="left:346.53px;top:172.62px;font-size:7.3px;color:#c8c8c8;font-family:'Liberation Sans',sans-serif;transform:scaleX(0.9750);transform-origin:0 0;">Step Size</div>
<div class="a" style="left:380px;top:171.6px;width:26.4px;height:9.2px;background:#4f4f4f;"></div>
<div class="a t" style="left:381.50px;top:172.62px;font-size:7.3px;color:#e0e0e0;font-family:'Liberation Sans',sans-serif;">1</div>
<div class="a t" style="left:336.24px;top:184.42px;font-size:7.3px;color:#c8c8c8;font-family:'Liberation Sans',sans-serif;transform:scaleX(0.9750);transform-origin:0 0;">Output Index</div>
<div class="a" style="left:380px;top:183.4px;width:26.4px;height:9.2px;background:#4f4f4f;"></div>
<div class="a t" style="left:381.50px;top:184.42px;font-size:7.3px;color:#e0e0e0;font-family:'Liberation Sans',sans-serif;">0</div>
<div class="a t" style="left:317.27px;top:196.12px;font-size:7.3px;color:#c8c8c8;font-family:'Liberation Sans',sans-serif;transform:scaleX(0.9750);transform-origin:0 0;">Interpolate Frames</div>
<div class="a" style="left:380px;top:195.1px;width:12.5px;height:9.2px;background:#2b2b2b;"></div>
<div class="a" style="left:392.5px;top:195.1px;width:13.5px;height:9.2px;background:#555560;"></div>
<div class="a t" style="left:381.00px;top:196.12px;font-size:7.3px;color:#d8d8d8;font-family:'Liberation Sans',sans-serif;">Off</div>
<div class="a t" style="left:335.86px;top:207.92px;font-size:7.3px;color:#c8c8c8;font-family:'Liberation Sans',sans-serif;transform:scaleX(0.9750);transform-origin:0 0;">Always Cook</div>
<div class="a" style="left:380px;top:206.9px;width:12.5px;height:9.2px;background:#2b2b2b;"></div>
<div class="a" style="left:392.5px;top:206.9px;width:13.5px;height:9.2px;background:#555560;"></div>
<div class="a t" style="left:381.00px;top:207.92px;font-size:7.3px;color:#d8d8d8;font-family:'Liberation Sans',sans-serif;">Off</div>
<div class="a t" style="left:358.41px;top:219.72px;font-size:7.3px;color:#c8c8c8;font-family:'Liberation Sans',sans-serif;transform:scaleX(0.9750);transform-origin:0 0;">Reset</div>
<div class="a" style="left:380px;top:218.70000000000002px;width:12.5px;height:9.2px;background:#2b2b2b;"></div>
<div class="a" style="left:392.5px;top:218.70000000000002px;width:13.5px;height:9.2px;background:#555560;"></div>
<div class="a t" style="left:381.00px;top:219.72px;font-size:7.3px;color:#d8d8d8;font-family:'Liberation Sans',sans-serif;">Off</div>
<div class="a" style="left:408px;top:218.70000000000002px;width:25px;height:9.2px;background:#585858;"></div>
<div class="a t" style="left:411.50px;top:219.72px;font-size:7.3px;color:#b8b8b8;font-family:'Liberation Sans',sans-serif;transform:scaleX(1.0131);transform-origin:0 0;">Pulse</div>
<div class="a" style="left:408px;top:164.2px;width:103px;height:1px;background:#262626;"></div>
<div class="a" style="left:416px;top:160.5px;width:3.3px;height:8px;background:#707070;"></div>
<div class="a" style="left:408px;top:176px;width:103px;height:1px;background:#262626;"></div>
<div class="a" style="left:408.5px;top:172px;width:3.5px;height:8px;background:#6a6a6a;"></div>
<div class="a" style="left:408px;top:187.6px;width:75px;height:1px;background:#262626;"></div>
<div class="a" style="left:483px;top:183.8px;width:4px;height:8px;background:#6a6a6a;"></div>
<div class="a" style="left:489px;top:183.5px;width:20.5px;height:9px;background:#565656;"></div>
<div class="a t" style="left:491.00px;top:184.67px;font-size:7px;color:#9a9a9a;font-family:'Liberation Sans',sans-serif;">1</div>
<svg class="a" style="left:503px;top:186.5px;" width="4" height="3" viewBox="0 0 4 3"><path d="M0 0H4L2 2.5z" fill="#c0c0c0"/></svg>
<div class="a" style="left:511.7px;top:42px;width:1.7px;height:492px;background:#3c3c50;"></div>
<div class="a" style="left:513.4px;top:55px;width:506px;height:232px;background:#1a1a1a;"></div>
<svg class="a" style="left:561px;top:55.5px;overflow:hidden" width="411" height="231.5" viewBox="0 0 411 231.5"><defs><linearGradient id="pg" x1="0" y1="0" x2="0" y2="1"><stop offset="0" stop-color="#cfcfcf"/><stop offset="1" stop-color="#dcdcdc"/></linearGradient></defs><rect width="411" height="231.5" fill="url(#pg)"/><path d="M-215.0 231.5L16.0 7.6" stroke="#b8b8b8" stroke-width="0.6" opacity="0.3"/><path d="M-185.0 231.5L29.5 7.6" stroke="#b8b8b8" stroke-width="0.6" opacity="0.3"/><path d="M-155.0 231.5L43.0 7.6" stroke="#b8b8b8" stroke-width="0.6" opacity="0.3"/><path d="M-125.0 231.5L56.5 7.6" stroke="#b8b8b8" stroke-width="0.6" opacity="0.3"/><path d="M-95.0 231.5L70.0 7.6" stroke="#b8b8b8" stroke-width="0.6" opacity="0.3"/><path d="M-65.0 231.5L83.5 7.6" stroke="#b8b8b8" stroke-width="0.6" opacity="0.3"/><path d="M-35.0 231.5L97.0 7.6" stroke="#b8b8b8" stroke-width="0.6" opacity="0.3"/><path d="M-5.0 231.5L110.5 7.6" stroke="#b8b8b8" stroke-width="0.6" opacity="0.3"/><path d="M25.0 231.5L124.0 7.6" stroke="#b8b8b8" stroke-width="0.6" opacity="0.3"/><path d="M55.0 231.5L137.5 7.6" stroke="#b8b8b8" stroke-width="0.6" opacity="0.3"/><path d="M85.0 231.5L151.0 7.6" stroke="#b8b8b8" stroke-width="0.6" opacity="0.3"/><path d="M115.0 231.5L164.5 7.6" stroke="#b8b8b8" stroke-width="0.6" opacity="0.3"/><path d="M145.0 231.5L178.0 7.6" stroke="#b8b8b8" stroke-width="0.6" opacity="0.3"/><path d="M175.0 231.5L191.5 7.6" stroke="#b8b8b8" stroke-width="0.6" opacity="0.3"/><path d="M205.0 231.5L205.0 7.6" stroke="#b8b8b8" stroke-width="0.6" opacity="0.3"/><path d="M235.0 231.5L218.5 7.6" stroke="#b8b8b8" stroke-width="0.6" opacity="0.3"/><path d="M265.0 231.5L232.0 7.6" stroke="#b8b8b8" stroke-width="0.6" opacity="0.3"/><path d="M295.0 231.5L245.5 7.6" stroke="#b8b8b8" stroke-width="0.6" opacity="0.3"/><path d="M325.0 231.5L259.0 7.6" stroke="#b8b8b8" stroke-width="0.6" opacity="0.3"/><path d="M355.0 231.5L272.5 7.6" stroke="#b8b8b8" stroke-width="0.6" opacity="0.3"/><path d="M385.0 231.5L286.0 7.6" stroke="#b8b8b8" stroke-width="0.6" opacity="0.3"/><path d="M415.0 231.5L299.5 7.6" stroke="#b8b8b8" stroke-width="0.6" opacity="0.3"/><path d="M445.0 231.5L313.0 7.6" stroke="#b8b8b8" stroke-width="0.6" opacity="0.3"/><path d="M475.0 231.5L326.5 7.6" stroke="#b8b8b8" stroke-width="0.6" opacity="0.3"/><path d="M505.0 231.5L340.0 7.6" stroke="#b8b8b8" stroke-width="0.6" opacity="0.3"/><path d="M535.0 231.5L353.5 7.6" stroke="#b8b8b8" stroke-width="0.6" opacity="0.3"/><path d="M565.0 231.5L367.0 7.6" stroke="#b8b8b8" stroke-width="0.6" opacity="0.3"/><path d="M595.0 231.5L380.5 7.6" stroke="#b8b8b8" stroke-width="0.6" opacity="0.3"/><path d="M625.0 231.5L394.0 7.6" stroke="#b8b8b8" stroke-width="0.6" opacity="0.3"/><path d="M655.0 231.5L407.5 7.6" stroke="#b8b8b8" stroke-width="0.6" opacity="0.3"/><path d="M0 18H411" stroke="#b8b8b8" stroke-width="0.6" opacity="0.22"/><path d="M0 44H411" stroke="#b8b8b8" stroke-width="0.6" opacity="0.22"/><path d="M0 72H411" stroke="#b8b8b8" stroke-width="0.6" opacity="0.22"/><path d="M0 102H411" stroke="#b8b8b8" stroke-width="0.6" opacity="0.22"/><path d="M0 134H411" stroke="#b8b8b8" stroke-width="0.6" opacity="0.22"/><path d="M0 168H411" stroke="#b8b8b8" stroke-width="0.6" opacity="0.22"/><path d="M0 204H411" stroke="#b8b8b8" stroke-width="0.6" opacity="0.22"/><g fill="#f6f6f6" stroke="#f6f6f6" opacity="0.6"><circle cx="17.9" cy="0.4" r="1.8"/><path d="M16.9 1.6Q17.9 0.6 18.9 1.6Q19.2 2.3 19.0 3.7L18.6 3.3L17.2 3.3L16.8 3.7Q16.6 2.3 16.9 1.6z" stroke-width="1.4"/><path d="M17.5 2.3L18.0 6.2M18.3 2.3L17.8 6.2" stroke-width="2.1" fill="none"/></g><path d="M19.1 3.1L19.6 7.0M19.9 3.1L19.4 7.0" stroke="#262626" stroke-width="0.9" stroke-linecap="round" fill="none"/><path d="M18.5 2.4Q19.5 1.4 20.5 2.4Q20.8 3.1 20.6 4.5L20.2 4.1L18.8 4.1L18.4 4.5Q18.2 3.1 18.5 2.4z" fill="#262626"/><circle cx="19.5" cy="1.2" r="1.2" fill="#262626"/><g fill="#f6f6f6" stroke="#f6f6f6" opacity="0.6"><circle cx="42.1" cy="17.9" r="2.8"/><path d="M37.9 20.1Q42.1 18.4 46.3 20.1Q47.6 22.7 47.0 27.4L45.0 30.0L39.2 30.0L37.2 27.4Q36.6 22.7 37.9 20.1z" stroke-width="1.4"/><path d="M40.5 29.0L38.7 41.2M43.7 29.0L45.5 40.1" stroke-width="3.1" fill="none"/></g><path d="M38.9 29.8L37.1 42.0M42.1 29.8L43.9 40.9" stroke="#262626" stroke-width="1.9" stroke-linecap="round" fill="none"/><path d="M36.3 20.9Q40.5 19.2 44.7 20.9Q46.0 23.5 45.4 28.2L43.4 30.8L37.6 30.8L35.6 28.2Q35.0 23.5 36.3 20.9z" fill="#262626"/><circle cx="40.5" cy="18.7" r="2.2" fill="#262626"/><path d="M48.7 21.7L48.7 33.0M50.3 21.7L50.3 32.1" stroke="#262626" stroke-width="1.1" stroke-linecap="round" fill="none"/><path d="M47.3 12.2Q49.5 11.1 51.7 12.2Q52.4 14.6 52.2 18.9L51.0 22.7L48.0 22.7L46.8 18.9Q46.6 14.6 47.3 12.2z" fill="#262626"/><circle cx="49.5" cy="10.8" r="1.3" fill="#262626"/><g fill="#f6f6f6" stroke="#f6f6f6" opacity="0.6"><circle cx="58.6" cy="10.2" r="2.1"/><path d="M56.0 11.7Q58.6 10.5 61.2 11.7Q62.0 14.0 61.6 18.2L60.4 21.4L56.8 21.4L55.6 18.2Q55.2 14.0 56.0 11.7z" stroke-width="1.4"/><path d="M57.6 20.4L58.8 31.2M59.6 20.4L58.4 30.3" stroke-width="2.4" fill="none"/></g><path d="M56.0 21.1L57.2 32.0M58.0 21.1L56.8 31.1" stroke="#262626" stroke-width="1.2" stroke-linecap="round" fill="none"/><path d="M54.4 12.5Q57.0 11.3 59.6 12.5Q60.4 14.8 60.0 19.0L58.8 22.1L55.2 22.1L54.0 19.0Q53.6 14.8 54.4 12.5z" fill="#6e6e6e"/><circle cx="57.0" cy="11.0" r="1.5" fill="#262626"/><g fill="#f6f6f6" stroke="#f6f6f6" opacity="0.6"><circle cx="109.4" cy="9.2" r="2.1"/><path d="M106.8 10.7Q109.4 9.5 112.0 10.7Q112.8 13.5 112.4 18.6L111.2 23.1L107.6 23.1L106.4 18.6Q106.0 13.5 106.8 10.7z" stroke-width="1.4"/><path d="M108.4 22.1L107.3 35.2M110.4 22.1L111.5 34.0" stroke-width="2.4" fill="none"/></g><path d="M110.0 22.9L108.9 36.0M112.0 22.9L113.1 34.8" stroke="#262626" stroke-width="1.2" stroke-linecap="round" fill="none"/><path d="M108.4 11.5Q111.0 10.3 113.6 11.5Q114.4 14.3 114.0 19.4L112.8 23.9L109.2 23.9L108.0 19.4Q107.6 14.3 108.4 11.5z" fill="#6e6e6e"/><circle cx="111.0" cy="10.0" r="1.5" fill="#262626"/><path d="M119.0 12.2L119.0 23.0M121.0 12.2L121.0 22.1" stroke="#262626" stroke-width="1.2" stroke-linecap="round" fill="none"/><path d="M117.4 3.5Q120.0 2.3 122.6 3.5Q123.4 5.8 123.0 10.0L121.8 13.2L118.2 13.2L117.0 10.0Q116.6 5.8 117.4 3.5z" fill="#262626"/><circle cx="120.0" cy="2.0" r="1.5" fill="#262626"/><g fill="#f6f6f6" stroke="#f6f6f6" opacity="0.6"><circle cx="135.9" cy="1.7" r="2.6"/><path d="M130.5 3.8Q135.9 2.1 141.3 3.8Q143.0 6.2 142.4 10.5L139.6 12.9L132.2 12.9L129.4 10.5Q128.8 6.2 130.5 3.8z" stroke-width="1.4"/><path d="M133.9 11.9L136.2 23.2M137.9 11.9L135.6 22.3" stroke-width="3.8" fill="none"/></g><path d="M135.5 12.7L137.8 24.0M139.5 12.7L137.2 23.1" stroke="#262626" stroke-width="2.5" stroke-linecap="round" fill="none"/><path d="M132.1 4.6Q137.5 2.9 142.9 4.6Q144.6 7.0 144.0 11.3L141.2 13.7L133.8 13.7L131.0 11.3Q130.4 7.0 132.1 4.6z" fill="#6e6e6e"/><circle cx="137.5" cy="2.5" r="2.0" fill="#262626"/><g fill="#f6f6f6" stroke="#f6f6f6" opacity="0.6"><circle cx="154.1" cy="6.4" r="2.3"/><path d="M151.2 8.1Q154.1 6.8 157.0 8.1Q157.9 10.7 157.5 15.4L156.1 19.0L152.1 19.0L150.7 15.4Q150.3 10.7 151.2 8.1z" stroke-width="1.4"/><path d="M153.0 18.0L151.8 30.2M155.2 18.0L156.4 29.1" stroke-width="2.5" fill="none"/></g><path d="M151.4 18.8L150.2 31.0M153.6 18.8L154.8 29.9" stroke="#262626" stroke-width="1.3" stroke-linecap="round" fill="none"/><path d="M149.6 8.9Q152.5 7.6 155.4 8.9Q156.3 11.5 155.9 16.2L154.5 19.8L150.5 19.8L149.1 16.2Q148.7 11.5 149.6 8.9z" fill="#262626"/><circle cx="152.5" cy="7.2" r="1.7" fill="#262626"/><path d="M159.0 22.8L159.0 35.0M161.0 22.8L161.0 33.9" stroke="#262626" stroke-width="1.2" stroke-linecap="round" fill="none"/><path d="M157.4 12.5Q160.0 11.3 162.6 12.5Q163.4 15.1 163.0 19.8L161.8 23.8L158.2 23.8L157.0 19.8Q156.6 15.1 157.4 12.5z" fill="#262626"/><circle cx="160.0" cy="11.0" r="1.5" fill="#262626"/><g fill="#f6f6f6" stroke="#f6f6f6" opacity="0.6"><circle cx="171.6" cy="30.6" r="2.5"/><path d="M168.4 32.5Q171.6 31.0 174.8 32.5Q175.8 34.8 175.4 38.9L173.8 41.4L169.4 41.4L167.8 38.9Q167.4 34.8 168.4 32.5z" stroke-width="1.4"/><path d="M170.4 40.4L171.8 51.2M172.8 40.4L171.4 50.3" stroke-width="2.7" fill="none"/></g><path d="M168.8 41.1L170.2 52.0M171.2 41.1L169.8 51.1" stroke="#262626" stroke-width="1.5" stroke-linecap="round" fill="none"/><path d="M166.8 33.3Q170.0 31.8 173.2 33.3Q174.2 35.6 173.8 39.7L172.2 42.1L167.8 42.1L166.2 39.7Q165.8 35.6 166.8 33.3z" fill="#262626"/><circle cx="170.0" cy="31.4" r="1.9" fill="#262626"/><g fill="#f6f6f6" stroke="#f6f6f6" opacity="0.6"><circle cx="200.9" cy="2.0" r="1.9"/><path d="M198.7 3.4Q200.9 2.3 203.1 3.4Q203.8 5.7 203.6 9.8L202.4 13.3L199.4 13.3L198.2 9.8Q198.0 5.7 198.7 3.4z" stroke-width="1.4"/><path d="M200.1 12.3L199.1 23.2M201.7 12.3L202.7 22.3" stroke-width="2.2" fill="none"/></g><path d="M201.7 13.2L200.7 24.0M203.3 13.2L204.3 23.1" stroke="#262626" stroke-width="1.1" stroke-linecap="round" fill="none"/><path d="M200.3 4.2Q202.5 3.1 204.7 4.2Q205.4 6.5 205.2 10.6L204.0 14.2L201.0 14.2L199.8 10.6Q199.6 6.5 200.3 4.2z" fill="#262626"/><circle cx="202.5" cy="2.8" r="1.3" fill="#262626"/><path d="M188.9 3.9L188.9 8.0M192.1 3.9L192.1 8.0" stroke="#262626" stroke-width="1.9" stroke-linecap="round" fill="none"/><path d="M186.3 2.9Q190.5 1.9 194.7 2.9Q196.0 3.7 195.4 5.1L193.4 4.9L187.6 4.9L185.6 5.1Q185.0 3.7 186.3 2.9z" fill="#6e6e6e"/><circle cx="190.5" cy="1.7" r="1.2" fill="#262626"/><g fill="#f6f6f6" stroke="#f6f6f6" opacity="0.6"><circle cx="189.4" cy="45.4" r="3.3"/><path d="M184.9 48.0Q189.4 45.9 193.9 48.0Q195.3 51.2 194.7 57.0L192.5 60.3L186.3 60.3L184.1 57.0Q183.5 51.2 184.9 48.0z" stroke-width="1.4"/><path d="M187.7 59.3L189.7 74.2M191.1 59.3L189.1 72.8" stroke-width="3.3" fill="none"/></g><path d="M189.3 60.1L191.3 75.0M192.7 60.1L190.7 73.6" stroke="#262626" stroke-width="2.1" stroke-linecap="round" fill="none"/><path d="M186.5 48.8Q191.0 46.7 195.5 48.8Q196.9 52.0 196.3 57.8L194.1 61.1L187.9 61.1L185.7 57.8Q185.1 52.0 186.5 48.8z" fill="#6e6e6e"/><circle cx="191.0" cy="46.2" r="2.7" fill="#262626"/><g fill="#f6f6f6" stroke="#f6f6f6" opacity="0.6"><circle cx="4.6" cy="34.9" r="1.8"/><path d="M2.0 36.1Q4.6 35.1 7.2 36.1Q8.0 37.4 7.6 39.7L6.4 40.9L2.8 40.9L1.6 39.7Q1.2 37.4 2.0 36.1z" stroke-width="1.4"/><path d="M3.6 39.9L2.5 46.2M5.6 39.9L6.7 45.9" stroke-width="2.4" fill="none"/></g><path d="M2.0 40.6L0.9 47.0M4.0 40.6L5.1 46.7" stroke="#262626" stroke-width="1.2" stroke-linecap="round" fill="none"/><path d="M0.4 36.9Q3.0 35.9 5.6 36.9Q6.4 38.2 6.0 40.5L4.8 41.6L1.2 41.6L-0.0 40.5Q-0.4 38.2 0.4 36.9z" fill="#262626"/><circle cx="3.0" cy="35.7" r="1.2" fill="#262626"/><path d="M28.3 54.1L28.3 69.0M31.7 54.1L31.7 67.6" stroke="#262626" stroke-width="2.1" stroke-linecap="round" fill="none"/><path d="M25.5 42.8Q30.0 40.7 34.5 42.8Q35.9 46.0 35.3 51.8L33.1 55.1L26.9 55.1L24.7 51.8Q24.1 46.0 25.5 42.8z" fill="#262626"/><circle cx="30.0" cy="40.2" r="2.7" fill="#262626"/><g fill="#f6f6f6" stroke="#f6f6f6" opacity="0.6"><circle cx="9.1" cy="51.6" r="3.5"/><path d="M4.3 54.4Q9.1 52.1 13.9 54.4Q15.4 57.9 14.8 64.2L12.4 68.0L5.8 68.0L3.4 64.2Q2.8 57.9 4.3 54.4z" stroke-width="1.4"/><path d="M7.3 67.0L9.4 83.2M10.9 67.0L8.8 81.6" stroke-width="3.5" fill="none"/></g><path d="M5.7 67.8L7.8 84.0M9.3 67.8L7.2 82.4" stroke="#262626" stroke-width="2.2" stroke-linecap="round" fill="none"/><path d="M2.7 55.2Q7.5 52.9 12.3 55.2Q13.8 58.7 13.2 65.0L10.8 68.8L4.2 68.8L1.8 65.0Q1.2 58.7 2.7 55.2z" fill="#6e6e6e"/><circle cx="7.5" cy="52.4" r="2.9" fill="#262626"/><g fill="#f6f6f6" stroke="#f6f6f6" opacity="0.6"><circle cx="24.4" cy="59.5" r="3.4"/><path d="M18.6 62.3Q24.4 60.1 30.2 62.3Q32.0 65.6 31.2 71.5L28.4 74.9L20.4 74.9L17.6 71.5Q16.8 65.6 18.6 62.3z" stroke-width="1.4"/><path d="M22.2 73.9L19.7 89.2M26.6 73.9L29.1 87.7" stroke-width="3.9" fill="none"/></g><path d="M23.8 74.7L21.3 90.0M28.2 74.7L30.7 88.5" stroke="#262626" stroke-width="2.7" stroke-linecap="round" fill="none"/><path d="M20.2 63.1Q26.0 60.9 31.8 63.1Q33.6 66.4 32.8 72.3L30.0 75.7L22.0 75.7L19.2 72.3Q18.4 66.4 20.2 63.1z" fill="#262626"/><circle cx="26.0" cy="60.3" r="2.8" fill="#262626"/><path d="M152.6 87.5L152.6 101.0M155.4 87.5L155.4 99.8" stroke="#262626" stroke-width="1.8" stroke-linecap="round" fill="none"/><path d="M150.2 77.1Q154.0 75.2 157.8 77.1Q159.0 80.0 158.6 85.2L156.6 88.5L151.4 88.5L149.4 85.2Q149.0 80.0 150.2 77.1z" fill="#262626"/><circle cx="154.0" cy="74.8" r="2.3" fill="#262626"/><g fill="#f6f6f6" stroke="#f6f6f6" opacity="0.6"><circle cx="33.4" cy="98.1" r="2.0"/><path d="M28.9 99.6Q33.4 98.4 37.9 99.6Q39.3 101.3 38.7 104.4L36.5 106.1L30.3 106.1L28.1 104.4Q27.5 101.3 28.9 99.6z" stroke-width="1.4"/><path d="M31.7 105.1L33.7 113.2M35.1 105.1L33.1 112.7" stroke-width="3.3" fill="none"/></g><path d="M33.3 105.8L35.3 114.0M36.7 105.8L34.7 113.5" stroke="#262626" stroke-width="2.1" stroke-linecap="round" fill="none"/><path d="M30.5 100.4Q35.0 99.2 39.5 100.4Q40.9 102.1 40.3 105.2L38.1 106.8L31.9 106.8L29.7 105.2Q29.1 102.1 30.5 100.4z" fill="#262626"/><circle cx="35.0" cy="98.9" r="1.4" fill="#262626"/><g fill="#f6f6f6" stroke="#f6f6f6" opacity="0.6"><circle cx="214.1" cy="6.0" r="1.9"/><path d="M211.9 7.4Q214.1 6.3 216.3 7.4Q217.0 10.1 216.8 14.9L215.6 19.6L212.6 19.6L211.4 14.9Q211.2 10.1 211.9 7.4z" stroke-width="1.4"/><path d="M213.3 18.6L212.3 31.2M214.9 18.6L215.9 30.1" stroke-width="2.2" fill="none"/></g><path d="M211.7 19.4L210.7 32.0M213.3 19.4L214.3 30.9" stroke="#262626" stroke-width="1.1" stroke-linecap="round" fill="none"/><path d="M210.3 8.2Q212.5 7.1 214.7 8.2Q215.4 10.9 215.2 15.7L214.0 20.4L211.0 20.4L209.8 15.7Q209.6 10.9 210.3 8.2z" fill="#6e6e6e"/><circle cx="212.5" cy="6.8" r="1.3" fill="#262626"/><path d="M220.4 25.8L220.4 38.0M222.6 25.8L222.6 36.9" stroke="#262626" stroke-width="1.3" stroke-linecap="round" fill="none"/><path d="M218.6 15.9Q221.5 14.6 224.4 15.9Q225.3 18.5 224.9 23.2L223.5 26.8L219.5 26.8L218.1 23.2Q217.7 18.5 218.6 15.9z" fill="#262626"/><circle cx="221.5" cy="14.2" r="1.7" fill="#262626"/><g fill="#f6f6f6" stroke="#f6f6f6" opacity="0.6"><circle cx="237.1" cy="11.0" r="1.9"/><path d="M234.9 12.4Q237.1 11.3 239.3 12.4Q240.0 15.1 239.8 19.9L238.6 24.6L235.6 24.6L234.4 19.9Q234.2 15.1 234.9 12.4z" stroke-width="1.4"/><path d="M236.3 23.6L237.2 36.2M237.9 23.6L237.0 35.1" stroke-width="2.2" fill="none"/></g><path d="M234.7 24.4L235.6 37.0M236.3 24.4L235.4 35.9" stroke="#262626" stroke-width="1.1" stroke-linecap="round" fill="none"/><path d="M233.3 13.2Q235.5 12.1 237.7 13.2Q238.4 15.9 238.2 20.7L237.0 25.4L234.0 25.4L232.8 20.7Q232.6 15.9 233.3 13.2z" fill="#262626"/><circle cx="235.5" cy="11.8" r="1.3" fill="#262626"/><g fill="#f6f6f6" stroke="#f6f6f6" opacity="0.6"><circle cx="252.4" cy="20.6" r="2.5"/><path d="M249.2 22.5Q252.4 21.0 255.6 22.5Q256.6 25.5 256.2 30.9L254.6 35.2L250.2 35.2L248.6 30.9Q248.2 25.5 249.2 22.5z" stroke-width="1.4"/><path d="M251.2 34.2L249.8 48.2M253.6 34.2L255.0 46.9" stroke-width="2.7" fill="none"/></g><path d="M252.8 35.0L251.4 49.0M255.2 35.0L256.6 47.7" stroke="#262626" stroke-width="1.5" stroke-linecap="round" fill="none"/><path d="M250.8 23.3Q254.0 21.8 257.2 23.3Q258.2 26.3 257.8 31.7L256.2 36.0L251.8 36.0L250.2 31.7Q249.8 26.3 250.8 23.3z" fill="#262626"/><circle cx="254.0" cy="21.4" r="1.9" fill="#262626"/><path d="M306.8 5.0L306.8 10.0M309.2 5.0L309.2 9.9" stroke="#262626" stroke-width="1.5" stroke-linecap="round" fill="none"/><path d="M304.8 2.9Q308.0 1.9 311.2 2.9Q312.2 3.9 311.8 5.7L310.2 6.0L305.8 6.0L304.2 5.7Q303.8 3.9 304.8 2.9z" fill="#6e6e6e"/><circle cx="308.0" cy="1.7" r="1.2" fill="#262626"/><g fill="#f6f6f6" stroke="#f6f6f6" opacity="0.6"><circle cx="320.9" cy="0.9" r="1.8"/><path d="M317.4 2.1Q320.9 1.1 324.4 2.1Q325.5 3.5 325.1 6.0L323.3 7.4L318.5 7.4L316.7 6.0Q316.3 3.5 317.4 2.1z" stroke-width="1.4"/><path d="M319.6 6.4L321.1 13.2M322.2 6.4L320.7 12.9" stroke-width="2.8" fill="none"/></g><path d="M321.2 7.2L322.7 14.0M323.8 7.2L322.3 13.7" stroke="#262626" stroke-width="1.6" stroke-linecap="round" fill="none"/><path d="M319.0 2.9Q322.5 1.9 326.0 2.9Q327.1 4.3 326.7 6.8L324.9 8.2L320.1 8.2L318.3 6.8Q317.9 4.3 319.0 2.9z" fill="#6e6e6e"/><circle cx="322.5" cy="1.7" r="1.2" fill="#262626"/><g fill="#f6f6f6" stroke="#f6f6f6" opacity="0.6"><circle cx="355.6" cy="0.9" r="1.8"/><path d="M352.4 2.1Q355.6 1.1 358.8 2.1Q359.8 3.3 359.4 5.5L357.8 6.3L353.4 6.3L351.8 5.5Q351.4 3.3 352.4 2.1z" stroke-width="1.4"/><path d="M354.4 5.3L353.0 11.2M356.8 5.3L358.2 11.0" stroke-width="2.7" fill="none"/></g><path d="M352.8 6.1L351.4 12.0M355.2 6.1L356.6 11.8" stroke="#262626" stroke-width="1.5" stroke-linecap="round" fill="none"/><path d="M350.8 2.9Q354.0 1.9 357.2 2.9Q358.2 4.1 357.8 6.3L356.2 7.1L351.8 7.1L350.2 6.3Q349.8 4.1 350.8 2.9z" fill="#262626"/><circle cx="354.0" cy="1.7" r="1.2" fill="#262626"/><path d="M387.8 32.3L387.8 49.0M392.2 32.3L392.2 47.3" stroke="#262626" stroke-width="2.7" stroke-linecap="round" fill="none"/><path d="M384.2 19.6Q390.0 17.2 395.8 19.6Q397.6 23.2 396.8 29.7L394.0 33.3L386.0 33.3L383.2 29.7Q382.4 23.2 384.2 19.6z" fill="#262626"/><circle cx="390.0" cy="16.6" r="3.1" fill="#262626"/><g fill="#f6f6f6" stroke="#f6f6f6" opacity="0.6"><circle cx="210.6" cy="62.6" r="2.5"/><path d="M207.4 64.5Q210.6 63.0 213.8 64.5Q214.8 67.6 214.4 73.2L212.8 77.8L208.4 77.8L206.8 73.2Q206.4 67.6 207.4 64.5z" stroke-width="1.4"/><path d="M209.4 76.8L210.8 91.2M211.8 76.8L210.4 89.8" stroke-width="2.7" fill="none"/></g><path d="M207.8 77.5L209.2 92.0M210.2 77.5L208.8 90.6" stroke="#262626" stroke-width="1.5" stroke-linecap="round" fill="none"/><path d="M205.8 65.3Q209.0 63.8 212.2 65.3Q213.2 68.4 212.8 74.0L211.2 78.5L206.8 78.5L205.2 74.0Q204.8 68.4 205.8 65.3z" fill="#6e6e6e"/><circle cx="209.0" cy="63.4" r="1.9" fill="#262626"/><g fill="#f6f6f6" stroke="#f6f6f6" opacity="0.6"><circle cx="242.9" cy="57.8" r="2.7"/><path d="M239.4 59.9Q242.9 58.2 246.4 59.9Q247.5 63.2 247.1 69.1L245.3 73.9L240.5 73.9L238.7 69.1Q238.3 63.2 239.4 59.9z" stroke-width="1.4"/><path d="M241.6 72.9L240.0 88.2M244.2 72.9L245.8 86.7" stroke-width="2.8" fill="none"/></g><path d="M243.2 73.7L241.6 89.0M245.8 73.7L247.4 87.5" stroke="#262626" stroke-width="1.6" stroke-linecap="round" fill="none"/><path d="M241.0 60.7Q244.5 59.0 248.0 60.7Q249.1 64.0 248.7 69.9L246.9 74.7L242.1 74.7L240.3 69.9Q239.9 64.0 241.0 60.7z" fill="#262626"/><circle cx="244.5" cy="58.6" r="2.1" fill="#262626"/><path d="M280.2 75.0L280.2 85.0M282.8 75.0L282.8 84.2" stroke="#262626" stroke-width="1.6" stroke-linecap="round" fill="none"/><path d="M278.0 68.1Q281.5 66.6 285.0 68.1Q286.1 70.2 285.7 73.9L283.9 76.0L279.1 76.0L277.3 73.9Q276.9 70.2 278.0 68.1z" fill="#262626"/><circle cx="281.5" cy="66.3" r="1.8" fill="#262626"/><g fill="#f6f6f6" stroke="#f6f6f6" opacity="0.6"><circle cx="254.9" cy="84.2" r="3.1"/><path d="M250.7 86.6Q254.9 84.7 259.1 86.6Q260.4 89.8 259.8 95.6L257.8 99.3L252.0 99.3L250.0 95.6Q249.4 89.8 250.7 86.6z" stroke-width="1.4"/><path d="M253.3 98.3L255.2 113.2M256.5 98.3L254.6 111.8" stroke-width="3.1" fill="none"/></g><path d="M254.9 99.1L256.8 114.0M258.1 99.1L256.2 112.6" stroke="#262626" stroke-width="1.9" stroke-linecap="round" fill="none"/><path d="M252.3 87.4Q256.5 85.5 260.7 87.4Q262.0 90.6 261.4 96.4L259.4 100.1L253.6 100.1L251.6 96.4Q251.0 90.6 252.3 87.4z" fill="#262626"/><circle cx="256.5" cy="85.0" r="2.5" fill="#262626"/><g fill="#f6f6f6" stroke="#f6f6f6" opacity="0.6"><circle cx="281.6" cy="87.2" r="3.1"/><path d="M277.1 89.6Q281.6 87.7 286.1 89.6Q287.5 92.5 286.9 97.8L284.7 100.7L278.5 100.7L276.3 97.8Q275.7 92.5 277.1 89.6z" stroke-width="1.4"/><path d="M279.9 99.7L278.0 113.2M283.3 99.7L285.2 112.0" stroke-width="3.3" fill="none"/></g><path d="M278.3 100.5L276.4 114.0M281.7 100.5L283.6 112.8" stroke="#262626" stroke-width="2.1" stroke-linecap="round" fill="none"/><path d="M275.5 90.4Q280.0 88.5 284.5 90.4Q285.9 93.3 285.3 98.6L283.1 101.5L276.9 101.5L274.7 98.6Q274.1 93.3 275.5 90.4z" fill="#262626"/><circle cx="280.0" cy="88.0" r="2.5" fill="#262626"/><path d="M308.5 121.8L308.5 139.0M312.5 121.8L312.5 137.3" stroke="#262626" stroke-width="2.5" stroke-linecap="round" fill="none"/><path d="M305.1 108.8Q310.5 106.3 315.9 108.8Q317.6 112.5 317.0 119.2L314.2 122.8L306.8 122.8L304.0 119.2Q303.4 112.5 305.1 108.8z" fill="#262626"/><circle cx="310.5" cy="105.6" r="3.1" fill="#262626"/><g fill="#f6f6f6" stroke="#f6f6f6" opacity="0.6"><circle cx="329.1" cy="106.5" r="3.4"/><path d="M322.4 109.3Q329.1 107.1 335.8 109.3Q337.9 112.6 337.1 118.5L333.7 121.9L324.5 121.9L321.1 118.5Q320.3 112.6 322.4 109.3z" stroke-width="1.4"/><path d="M326.6 120.9L329.5 136.2M331.6 120.9L328.7 134.7" stroke-width="4.3" fill="none"/></g><path d="M325.0 121.7L327.9 137.0M330.0 121.7L327.1 135.5" stroke="#262626" stroke-width="3.1" stroke-linecap="round" fill="none"/><path d="M320.8 110.1Q327.5 107.9 334.2 110.1Q336.3 113.4 335.5 119.3L332.1 122.7L322.9 122.7L319.5 119.3Q318.7 113.4 320.8 110.1z" fill="#6e6e6e"/><circle cx="327.5" cy="107.3" r="2.8" fill="#262626"/><g fill="#f6f6f6" stroke="#f6f6f6" opacity="0.6"><circle cx="34.9" cy="113.4" r="2.3"/><path d="M30.7 115.1Q34.9 113.7 39.1 115.1Q40.4 117.1 39.8 120.7L37.8 122.7L32.0 122.7L30.0 120.7Q29.4 117.1 30.7 115.1z" stroke-width="1.4"/><path d="M33.3 121.7L31.5 131.2M36.5 121.7L38.3 130.5" stroke-width="3.1" fill="none"/></g><path d="M34.9 122.5L33.1 132.0M38.1 122.5L39.9 131.3" stroke="#262626" stroke-width="1.9" stroke-linecap="round" fill="none"/><path d="M32.3 115.9Q36.5 114.5 40.7 115.9Q42.0 117.9 41.4 121.5L39.4 123.5L33.6 123.5L31.6 121.5Q31.0 117.9 32.3 115.9z" fill="#262626"/><circle cx="36.5" cy="114.2" r="1.7" fill="#262626"/><path d="M65.2 139.4L65.2 157.0M69.8 139.4L69.8 155.2" stroke="#262626" stroke-width="2.9" stroke-linecap="round" fill="none"/><path d="M61.4 126.0Q67.5 123.4 73.6 126.0Q75.5 129.8 74.7 136.6L71.7 140.4L63.3 140.4L60.3 136.6Q59.5 129.8 61.4 126.0z" fill="#262626"/><circle cx="67.5" cy="122.7" r="3.2" fill="#262626"/><g fill="#f6f6f6" stroke="#f6f6f6" opacity="0.6"><circle cx="60.9" cy="158.1" r="4.0"/><path d="M54.2 161.5Q60.9 158.8 67.6 161.5Q69.7 165.5 68.9 172.7L65.5 176.7L56.3 176.7L52.9 172.7Q52.1 165.5 54.2 161.5z" stroke-width="1.4"/><path d="M58.4 175.7L61.3 194.2M63.4 175.7L60.5 192.3" stroke-width="4.3" fill="none"/></g><path d="M60.0 176.5L62.9 195.0M65.0 176.5L62.1 193.1" stroke="#262626" stroke-width="3.1" stroke-linecap="round" fill="none"/><path d="M55.8 162.3Q62.5 159.6 69.2 162.3Q71.3 166.3 70.5 173.5L67.1 177.5L57.9 177.5L54.5 173.5Q53.7 166.3 55.8 162.3z" fill="#6e6e6e"/><circle cx="62.5" cy="158.9" r="3.4" fill="#262626"/><g fill="#f6f6f6" stroke="#f6f6f6" opacity="0.6"><circle cx="175.6" cy="135.7" r="3.6"/><path d="M170.5 138.8Q175.6 136.3 180.7 138.8Q182.3 142.9 181.7 150.3L179.1 155.2L172.1 155.2L169.5 150.3Q168.9 142.9 170.5 138.8z" stroke-width="1.4"/><path d="M173.7 154.2L171.4 173.2M177.5 154.2L179.8 171.2" stroke-width="3.6" fill="none"/></g><path d="M172.1 155.1L169.8 174.0M175.9 155.1L178.2 172.0" stroke="#262626" stroke-width="2.4" stroke-linecap="round" fill="none"/><path d="M168.9 139.6Q174.0 137.1 179.1 139.6Q180.7 143.7 180.1 151.1L177.5 156.1L170.5 156.1L167.9 151.1Q167.3 143.7 168.9 139.6z" fill="#6e6e6e"/><circle cx="174.0" cy="136.5" r="3.0" fill="#262626"/><path d="M152.2 184.2L152.2 204.0M156.8 184.2L156.8 201.9" stroke="#262626" stroke-width="2.9" stroke-linecap="round" fill="none"/><path d="M148.4 168.7Q154.5 165.8 160.6 168.7Q162.5 173.0 161.7 180.8L158.7 185.2L150.3 185.2L147.3 180.8Q146.5 173.0 148.4 168.7z" fill="#262626"/><circle cx="154.5" cy="165.1" r="3.6" fill="#262626"/><g fill="#f6f6f6" stroke="#f6f6f6" opacity="0.6"><circle cx="185.1" cy="190.5" r="3.5"/><path d="M180.3 193.4Q185.1 191.1 189.9 193.4Q191.4 197.1 190.8 203.8L188.4 208.0L181.8 208.0L179.4 203.8Q178.8 197.1 180.3 193.4z" stroke-width="1.4"/><path d="M183.3 207.0L185.4 224.2M186.9 207.0L184.8 222.5" stroke-width="3.5" fill="none"/></g><path d="M181.7 207.8L183.8 225.0M185.3 207.8L183.2 223.3" stroke="#262626" stroke-width="2.2" stroke-linecap="round" fill="none"/><path d="M178.7 194.2Q183.5 191.9 188.3 194.2Q189.8 197.9 189.2 204.6L186.8 208.8L180.2 208.8L177.8 204.6Q177.2 197.9 178.7 194.2z" fill="#262626"/><circle cx="183.5" cy="191.3" r="2.9" fill="#262626"/><g fill="#f6f6f6" stroke="#f6f6f6" opacity="0.6"><circle cx="361.4" cy="144.4" r="4.3"/><path d="M355.0 148.2Q361.4 145.2 367.8 148.2Q369.8 152.6 369.0 160.5L365.8 164.9L357.0 164.9L353.8 160.5Q353.0 152.6 355.0 148.2z" stroke-width="1.4"/><path d="M359.0 163.9L356.2 184.2M363.8 163.9L366.6 182.1" stroke-width="4.2" fill="none"/></g><path d="M360.6 164.7L357.8 185.0M365.4 164.7L368.2 182.9" stroke="#262626" stroke-width="3.0" stroke-linecap="round" fill="none"/><path d="M356.6 149.0Q363.0 146.0 369.4 149.0Q371.4 153.4 370.6 161.3L367.4 165.7L358.6 165.7L355.4 161.3Q354.6 153.4 356.6 149.0z" fill="#262626"/><circle cx="363.0" cy="145.2" r="3.7" fill="#262626"/><path d="M365.7 210.9L365.7 229.0M371.3 210.9L371.3 227.2" stroke="#262626" stroke-width="3.4" stroke-linecap="round" fill="none"/><path d="M361.1 197.1Q368.5 194.5 375.9 197.1Q378.2 201.0 377.2 208.1L373.6 211.9L363.4 211.9L359.8 208.1Q358.8 201.0 361.1 197.1z" fill="#6e6e6e"/><circle cx="368.5" cy="193.8" r="3.3" fill="#262626"/><g fill="#f6f6f6" stroke="#f6f6f6" opacity="0.6"><circle cx="407.4" cy="129.9" r="1.8"/><path d="M405.5 131.1Q407.4 130.1 409.3 131.1Q409.9 132.2 409.7 134.2L408.7 134.8L406.1 134.8L405.1 134.2Q404.9 132.2 405.5 131.1z" stroke-width="1.4"/><path d="M406.7 133.8L407.5 139.2M408.1 133.8L407.3 139.0" stroke-width="2.1" fill="none"/></g><path d="M408.3 134.6L409.1 140.0M409.7 134.6L408.9 139.8" stroke="#262626" stroke-width="0.9" stroke-linecap="round" fill="none"/><path d="M407.1 131.9Q409.0 130.9 410.9 131.9Q411.5 133.0 411.3 135.0L410.3 135.6L407.7 135.6L406.7 135.0Q406.5 133.0 407.1 131.9z" fill="#262626"/><circle cx="409.0" cy="130.7" r="1.2" fill="#262626"/><g fill="#f6f6f6" stroke="#f6f6f6" opacity="0.6"><circle cx="258.6" cy="112.9" r="1.8"/><path d="M255.4 114.1Q258.6 113.1 261.8 114.1Q262.8 115.0 262.4 116.6L260.8 116.7L256.4 116.7L254.8 116.6Q254.4 115.0 255.4 114.1z" stroke-width="1.4"/><path d="M257.4 115.7L256.0 120.2M259.8 115.7L261.2 120.2" stroke-width="2.7" fill="none"/></g><path d="M255.8 116.5L254.4 121.0M258.2 116.5L259.6 121.0" stroke="#262626" stroke-width="1.5" stroke-linecap="round" fill="none"/><path d="M253.8 114.9Q257.0 113.9 260.2 114.9Q261.2 115.8 260.8 117.4L259.2 117.5L254.8 117.5L253.2 117.4Q252.8 115.8 253.8 114.9z" fill="#262626"/><circle cx="257.0" cy="113.7" r="1.2" fill="#262626"/><path d="M277.9 114.2L277.9 117.0M279.1 114.2L279.1 117.2" stroke="#262626" stroke-width="0.9" stroke-linecap="round" fill="none"/><path d="M276.9 114.9Q278.5 113.9 280.1 114.9Q280.6 115.4 280.4 116.3L279.6 115.2L277.4 115.2L276.6 116.3Q276.4 115.4 276.9 114.9z" fill="#262626"/><circle cx="278.5" cy="113.7" r="1.2" fill="#262626"/><rect x="160.4" y="82.2" width="20.8" height="21.3" fill="#ec666c"/><rect x="21" y="115.5" width="21" height="21" fill="#e6ee62" opacity="0.9"/></svg>
<div class="a" style="left:513.4px;top:287.5px;width:506.1px;height:12.8px;background:#2c2d33;"></div>
<div class="a" style="left:513.4px;top:287.5px;width:506.1px;height:0.8px;background:#4a4a50;"></div>
<div class="a" style="left:513.4px;top:299.7px;width:506.1px;height:0.6px;background:#3a3a40;"></div>
<div class="a" style="left:515.4px;top:289.3px;width:11px;height:9.4px;background:#36373f;border:1px solid #45464c;"></div>
<div class="a" style="left:525.9px;top:289.3px;width:11px;height:9.4px;background:#36373f;border:1px solid #45464c;"></div>
<div class="a" style="left:538.4px;top:289.3px;width:11px;height:9.4px;background:#36373f;border:1px solid #45464c;"></div>
<div class="a" style="left:550.9px;top:289.3px;width:11px;height:9.4px;background:#36373f;border:1px solid #45464c;"></div>
<div class="a" style="left:563.4px;top:289.3px;width:11px;height:9.4px;background:#36373f;border:1px solid #45464c;"></div>
<div class="a" style="left:575.4px;top:289.3px;width:11px;height:9.4px;background:#36373f;border:1px solid #45464c;"></div>
<div class="a" style="left:587.4px;top:289.3px;width:11px;height:9.4px;background:#36373f;border:1px solid #45464c;"></div>
<div class="a" style="left:599.9px;top:289.3px;width:11px;height:9.4px;background:#36373f;border:1px solid #45464c;"></div>
<svg class="a" style="left:518.4px;top:292.5px;" width="5" height="3" viewBox="0 0 5 3"><path d="M0 0H5L2.5 3z" fill="#d0d2dc"/></svg>
<div class="a" style="left:528.9px;top:290.8px;width:5.5px;height:6.4px;background:#c9d0e6;"></div>
<svg class="a" style="left:540.9px;top:291.5px;" width="6" height="5" viewBox="0 0 6 5"><circle cx="3" cy="2.5" r="2.3" stroke="#6a6b74" stroke-width="0.8" fill="none"/><path d="M1 2.5h4" stroke="#6a6b74" stroke-width="0.8"/></svg>
<svg class="a" style="left:553.4px;top:291.5px;" width="6" height="5" viewBox="0 0 6 5"><circle cx="3" cy="2.5" r="2.3" stroke="#6a6b74" stroke-width="0.8" fill="none"/><path d="M1 2.5h4" stroke="#6a6b74" stroke-width="0.8"/></svg>
<div class="a" style="left:565.9px;top:293.5px;width:6px;height:1.1px;background:#d0d2dc;"></div>
<div class="a" style="left:568.35px;top:291.0px;width:1.1px;height:6px;background:#d0d2dc;"></div>
<svg class="a" style="left:577.9px;top:291.0px;" width="6" height="6" viewBox="0 0 6 6"><path d="M3 0L3.8 2.2H6L4.2 3.6L4.9 6L3 4.6L1.1 6L1.8 3.6L0 2.2H2.2z" fill="#d0d2dc"/></svg>
<svg class="a" style="left:589.4px;top:290.2px;" width="7" height="8" viewBox="0 0 7 8"><path d="M3 0.5L5.5 2.5V4.5H0.5V2.5z" stroke="#d0d2dc" stroke-width="0.9" fill="none"/><circle cx="4.3" cy="5.3" r="1.5" stroke="#d0d2dc" stroke-width="0.9" fill="none"/><path d="M5.3 6.3L6.8 7.8" stroke="#d0d2dc" stroke-width="0.9"/></svg>
<svg class="a" style="left:602.4px;top:292.0px;" width="6" height="5" viewBox="0 0 6 5"><path d="M0.5 4.5H5.5M4.5 0.5L2 3.5" stroke="#9a9ba6" stroke-width="1"/></svg>
<div class="a t" style="left:613.00px;top:290.56px;font-size:7.6px;color:#a2a4b2;font-family:'Liberation Sans',sans-serif;">/ project1</div>
<div class="a" style="left:984.0px;top:289.1px;width:10px;height:9.6px;background:#36373f;border:1px solid #45464c;"></div>
<div class="a t" style="left:987.00px;top:291.19px;font-size:6.5px;color:#b8bac6;font-family:'Liberation Sans',sans-serif;">0</div>
<div class="a" style="left:996.0px;top:289.1px;width:10px;height:9.6px;background:#36373f;border:1px solid #45464c;"></div>
<div class="a" style="left:998.0px;top:290.9px;width:6.5px;height:6px;border:1px solid #c4c6d2;border-top-width:1.6px;"></div>
<div class="a" style="left:1008.2px;top:289.1px;width:10px;height:9.6px;background:#36373f;border:1px solid #45464c;"></div>
<svg class="a" style="left:1010.5px;top:290.7px;" width="5" height="6.5" viewBox="0 0 5 6.5"><path d="M1.6 0V3.5H0L2.5 6L5 3.5H3.4V0z" stroke="#b8bac6" stroke-width="0.7" fill="none"/></svg>
<div class="a" style="left:513.4px;top:302px;width:506.1px;height:232px;background:#1c1d21;"></div>
<div class="a" style="left:520.8px;top:302px;width:0.8px;height:232px;background:#202126;"></div>
<div class="a" style="left:553.3px;top:302px;width:0.8px;height:232px;background:#202126;"></div>
<div class="a" style="left:585.8px;top:302px;width:0.8px;height:232px;background:#202126;"></div>
<div class="a" style="left:618.3px;top:302px;width:0.8px;height:232px;background:#202126;"></div>
<div class="a" style="left:650.8px;top:302px;width:0.8px;height:232px;background:#202126;"></div>
<div class="a" style="left:683.3px;top:302px;width:0.8px;height:232px;background:#202126;"></div>
<div class="a" style="left:715.8px;top:302px;width:0.8px;height:232px;background:#202126;"></div>
<div class="a" style="left:748.3px;top:302px;width:0.8px;height:232px;background:#202126;"></div>
<div class="a" style="left:780.8px;top:302px;width:0.8px;height:232px;background:#202126;"></div>
<div class="a" style="left:813.3px;top:302px;width:0.8px;height:232px;background:#202126;"></div>
<div class="a" style="left:845.8px;top:302px;width:0.8px;height:232px;background:#202126;"></div>
<div class="a" style="left:878.3px;top:302px;width:0.8px;height:232px;background:#202126;"></div>
<div class="a" style="left:910.8px;top:302px;width:0.8px;height:232px;background:#202126;"></div>
<div class="a" style="left:943.3px;top:302px;width:0.8px;height:232px;background:#202126;"></div>
<div class="a" style="left:975.8px;top:302px;width:0.8px;height:232px;background:#202126;"></div>
<div class="a" style="left:1008.3px;top:302px;width:0.8px;height:232px;background:#202126;"></div>
<div class="a" style="left:513.4px;top:338.0px;width:506.1px;height:0.8px;background:#202126;"></div>
<div class="a" style="left:513.4px;top:370.5px;width:506.1px;height:0.8px;background:#202126;"></div>
<div class="a" style="left:513.4px;top:403.0px;width:506.1px;height:0.8px;background:#202126;"></div>
<div class="a" style="left:513.4px;top:435.5px;width:506.1px;height:0.8px;background:#202126;"></div>
<div class="a" style="left:513.4px;top:468.0px;width:506.1px;height:0.8px;background:#202126;"></div>
<div class="a" style="left:513.4px;top:500.5px;width:506.1px;height:0.8px;background:#202126;"></div>
<div class="a" style="left:513.4px;top:533.0px;width:506.1px;height:0.8px;background:#202126;"></div>
<div class="a" style="left:518.3px;top:302px;width:0.8px;height:232px;background:#2a2a38;"></div>
<svg class="a" style="left:0;top:0" width="1024" height="576"><path d="M513 466.4H1019.5" stroke="#48487a" stroke-width="1" fill="none"/></svg>
<svg class="a" style="left:0;top:0" width="1024" height="576"><path d="M513 518L533 534" stroke="#3a3b44" stroke-width="1" fill="none"/></svg>
<svg class="a" style="left:0;top:0" width="1024" height="576"><path d="M513 384.6H528.5" stroke="#7462b8" stroke-width="1.2" fill="none"/></svg>
<svg class="a" style="left:0;top:0" width="1024" height="576"><path d="M570.5 384.6H601.3" stroke="#7462b8" stroke-width="1.2" fill="none"/></svg>
<svg class="a" style="left:0;top:0" width="1024" height="576"><path d="M643 384.40000000000003H649.4" stroke="#0a0a0a" stroke-width="1.3" fill="none"/></svg>
<svg class="a" style="left:644.5px;top:386.1px;" width="4" height="4" viewBox="0 0 4 4"><path d="M0 0L4 2L0 4z" fill="#5a7390"/></svg>
<svg class="a" style="left:0;top:0" width="1024" height="576"><path d="M691.9 387.90000000000003C695 387.90000000000003 695 381.90000000000003 698.2 381.90000000000003" stroke="#78d050" stroke-width="1.1" fill="none"/></svg>
<svg class="a" style="left:0;top:0" width="1024" height="576"><path d="M698.2 386.40000000000003H702" stroke="#0a0a0a" stroke-width="1.2" fill="none"/></svg>
<svg class="a" style="left:0;top:0" width="1024" height="576"><path d="M739.8 384.90000000000003H754.5" stroke="#78d050" stroke-width="1.2" fill="none"/></svg>
<svg class="a" style="left:0;top:0" width="1024" height="576"><path d="M796.4 384.90000000000003H826.7" stroke="#78d050" stroke-width="1.2" fill="none"/></svg>
<svg class="a" style="left:0;top:0" width="1024" height="576"><path d="M869 388.6H907" stroke="#6a7f96" stroke-width="1.1" fill="none"/></svg>
<svg class="a" style="left:0;top:0" width="1024" height="576"><path d="M870 388.6H906" stroke="#1c1d21" stroke-width="1.3" stroke-dasharray="1 1.4" fill="none"/></svg>
<svg class="a" style="left:884.5px;top:386.1px;" width="5" height="5" viewBox="0 0 5 5"><path d="M0 0L5 2.5L0 5z" fill="#5a6f86"/></svg>
<svg class="a" style="left:0;top:0" width="1024" height="576"><path d="M949 387.40000000000003C956 387.40000000000003 957 381.90000000000003 963.6 381.90000000000003" stroke="#78d050" stroke-width="1.1" fill="none"/></svg>
<div class="a" style="left:528.5px;top:373.2px;width:42.0px;height:22.900000000000034px;background:#6a6a6a;"></div>
<div class="a" style="left:528.5px;top:373.2px;width:9.2px;height:22.900000000000034px;background:#6b5ca8;"></div>
<div class="a" style="left:531.1px;top:373.2px;width:0.7px;height:22.900000000000034px;background:#8270c0;"></div>
<div class="a" style="left:536.3px;top:373.2px;width:0.6px;height:22.900000000000034px;background:#5d4f98;"></div>
<div class="a" style="left:532.8px;top:375.2px;width:2.6px;height:2px;background:#b4aae0;opacity:0.5;border-radius:1px;"></div>
<div class="a" style="left:532.8px;top:380.8333333333333px;width:2.6px;height:2px;background:#b4aae0;opacity:0.5;border-radius:1px;"></div>
<div class="a" style="left:532.8px;top:386.4666666666667px;width:2.6px;height:2px;background:#b4aae0;opacity:0.5;border-radius:1px;"></div>
<div class="a" style="left:532.8px;top:392.1px;width:2.6px;height:2px;background:#b4aae0;opacity:0.5;border-radius:1px;"></div>
<div class="a" style="left:566.1px;top:373.2px;width:4.4px;height:22.900000000000034px;background:#a2a2a2;"></div>
<div class="a" style="left:567.3px;top:380.757px;width:3.2px;height:3.6640000000000055px;background:#7060b0;"></div>
<div class="a" style="left:567.3px;top:386.482px;width:3.2px;height:3.6640000000000055px;background:#7060b0;"></div>
<div class="a" style="left:539.6px;top:375.59999999999997px;width:25.9px;height:18.200000000000035px;background:#101010;"></div>
<div class="a" style="left:544.1px;top:375.59999999999997px;width:16.9px;height:18.200000000000035px;background:#464646;"></div>
<svg class="a" style="left:539.6px;top:375.59999999999997px;" width="25.9" height="18.200000000000035" viewBox="0 0 25.9 18.200000000000035"><path d="M12.2 0.5L14.5 0.9L16.1 5.5L17.1 10.0L18.1 14.9L21.8 15.7L21.8 17.8L15.5 17.8L14.5 10.9L12.9 6.4L11.9 2.7z" fill="#f4f4f4" stroke="#f4f4f4" stroke-width="0.6" stroke-linejoin="round"/></svg>
<div class="a" style="left:528.5px;top:396.1px;width:42.0px;height:6.8px;background:#2a2a2d;border:0.8px solid #56565a;border-top:none;"></div>
<div class="a t" style="left:529.90px;top:397.78px;font-size:4.6px;color:#bdbdbd;font-family:'Liberation Mono',monospace;transform:scaleX(0.8875);transform-origin:0 0;">crop1</div>
<div class="a" style="left:560.5px;top:397.1px;width:4.5px;height:5px;background:#2c3550;"></div>
<div class="a" style="left:565.5px;top:397.1px;width:4px;height:5px;background:#34343a;"></div>
<div class="a" style="left:601.3px;top:373.2px;width:41.700000000000045px;height:22.80000000000001px;background:#6a6a6a;"></div>
<div class="a" style="left:601.3px;top:373.2px;width:9.2px;height:22.80000000000001px;background:#6b5ca8;"></div>
<div class="a" style="left:603.9px;top:373.2px;width:0.7px;height:22.80000000000001px;background:#8270c0;"></div>
<div class="a" style="left:609.0999999999999px;top:373.2px;width:0.6px;height:22.80000000000001px;background:#5d4f98;"></div>
<div class="a" style="left:605.5999999999999px;top:375.2px;width:2.6px;height:2px;background:#b4aae0;opacity:0.5;border-radius:1px;"></div>
<div class="a" style="left:605.5999999999999px;top:380.8px;width:2.6px;height:2px;background:#b4aae0;opacity:0.5;border-radius:1px;"></div>
<div class="a" style="left:605.5999999999999px;top:386.4px;width:2.6px;height:2px;background:#b4aae0;opacity:0.5;border-radius:1px;"></div>
<div class="a" style="left:605.5999999999999px;top:392.0px;width:2.6px;height:2px;background:#b4aae0;opacity:0.5;border-radius:1px;"></div>
<div class="a" style="left:638.6px;top:373.2px;width:4.4px;height:22.80000000000001px;background:#a2a2a2;"></div>
<div class="a" style="left:639.8px;top:380.724px;width:3.2px;height:3.648000000000002px;background:#7060b0;"></div>
<div class="a" style="left:639.8px;top:386.424px;width:3.2px;height:3.648000000000002px;background:#7060b0;"></div>
<div class="a" style="left:612.4px;top:375.59999999999997px;width:25.600000000000044px;height:18.100000000000012px;background:#111;"></div>
<div class="a" style="left:616.24px;top:375.9px;width:17.92000000000003px;height:17.50000000000001px;background:#ffffff;"></div>
<div class="a" style="left:601.3px;top:396px;width:41.700000000000045px;height:6.8px;background:#2a2a2d;border:0.8px solid #56565a;border-top:none;"></div>
<div class="a t" style="left:602.70px;top:397.68px;font-size:4.6px;color:#bdbdbd;font-family:'Liberation Mono',monospace;transform:scaleX(0.8875);transform-origin:0 0;">analyze1</div>
<div class="a" style="left:633px;top:397px;width:4.5px;height:5px;background:#2c3550;"></div>
<div class="a" style="left:638px;top:397px;width:4px;height:5px;background:#34343a;"></div>
<div class="a" style="left:649.4px;top:373.2px;width:42.5px;height:22.80000000000001px;background:#6a6a6a;"></div>
<div class="a" style="left:649.4px;top:373.2px;width:9.2px;height:22.80000000000001px;background:#64b844;"></div>
<div class="a" style="left:652.0px;top:373.2px;width:0.7px;height:22.80000000000001px;background:#84d464;"></div>
<div class="a" style="left:657.1999999999999px;top:373.2px;width:0.6px;height:22.80000000000001px;background:#52a034;"></div>
<div class="a" style="left:653.6999999999999px;top:375.2px;width:2.6px;height:2px;background:#c8f0b8;opacity:0.5;border-radius:1px;"></div>
<div class="a" style="left:653.6999999999999px;top:380.8px;width:2.6px;height:2px;background:#c8f0b8;opacity:0.5;border-radius:1px;"></div>
<div class="a" style="left:653.6999999999999px;top:386.4px;width:2.6px;height:2px;background:#c8f0b8;opacity:0.5;border-radius:1px;"></div>
<div class="a" style="left:653.6999999999999px;top:392.0px;width:2.6px;height:2px;background:#c8f0b8;opacity:0.5;border-radius:1px;"></div>
<div class="a" style="left:687.5px;top:373.2px;width:4.4px;height:22.80000000000001px;background:#a2a2a2;"></div>
<div class="a" style="left:688.6999999999999px;top:380.724px;width:3.2px;height:3.648000000000002px;background:#70b850;"></div>
<div class="a" style="left:688.6999999999999px;top:386.424px;width:3.2px;height:3.648000000000002px;background:#70b850;"></div>
<div class="a" style="left:660.2px;top:375.29999999999995px;width:27.0px;height:18.700000000000014px;background:#707070;"></div>
<div class="a" style="left:662.5px;top:375.59999999999997px;width:0.6px;height:18.100000000000012px;background:#7c7c7c;"></div>
<div class="a" style="left:667.78px;top:375.59999999999997px;width:0.6px;height:18.100000000000012px;background:#7c7c7c;"></div>
<div class="a" style="left:673.06px;top:375.59999999999997px;width:0.6px;height:18.100000000000012px;background:#7c7c7c;"></div>
<div class="a" style="left:678.34px;top:375.59999999999997px;width:0.6px;height:18.100000000000012px;background:#7c7c7c;"></div>
<div class="a" style="left:683.62px;top:375.59999999999997px;width:0.6px;height:18.100000000000012px;background:#7c7c7c;"></div>
<div class="a" style="left:660.5px;top:375.59999999999997px;width:1.8px;height:18.100000000000012px;background:#62607a;"></div>
<div class="a" style="left:674.228px;top:375.59999999999997px;width:0.8px;height:18.100000000000012px;background:#c89a94;"></div>
<div class="a t" style="left:666.48px;top:384.69px;font-size:4.2px;color:#2e2e2e;font-family:'Liberation Sans',sans-serif;">### value</div>
<div class="a" style="left:649.4px;top:396px;width:42.5px;height:6.8px;background:#2a2a2d;border:0.8px solid #56565a;border-top:none;"></div>
<div class="a t" style="left:650.80px;top:397.68px;font-size:4.6px;color:#bdbdbd;font-family:'Liberation Mono',monospace;transform:scaleX(0.8875);transform-origin:0 0;">topnum1</div>
<div class="a" style="left:681.9px;top:397px;width:4.5px;height:5px;background:#2c3550;"></div>
<div class="a" style="left:686.9px;top:397px;width:4px;height:5px;background:#34343a;"></div>
<div class="a" style="left:698.2px;top:373.2px;width:41.59999999999991px;height:22.80000000000001px;background:#6a6a6a;"></div>
<div class="a" style="left:698.2px;top:373.2px;width:9.2px;height:22.80000000000001px;background:#64b844;"></div>
<div class="a" style="left:700.8000000000001px;top:373.2px;width:0.7px;height:22.80000000000001px;background:#84d464;"></div>
<div class="a" style="left:706.0px;top:373.2px;width:0.6px;height:22.80000000000001px;background:#52a034;"></div>
<div class="a" style="left:702.5px;top:375.2px;width:2.6px;height:2px;background:#c8f0b8;opacity:0.5;border-radius:1px;"></div>
<div class="a" style="left:702.5px;top:380.8px;width:2.6px;height:2px;background:#c8f0b8;opacity:0.5;border-radius:1px;"></div>
<div class="a" style="left:702.5px;top:386.4px;width:2.6px;height:2px;background:#c8f0b8;opacity:0.5;border-radius:1px;"></div>
<div class="a" style="left:702.5px;top:392.0px;width:2.6px;height:2px;background:#c8f0b8;opacity:0.5;border-radius:1px;"></div>
<div class="a" style="left:735.4px;top:373.2px;width:4.4px;height:22.80000000000001px;background:#a2a2a2;"></div>
<div class="a" style="left:736.5999999999999px;top:380.724px;width:3.2px;height:3.648000000000002px;background:#70b850;"></div>
<div class="a" style="left:736.5999999999999px;top:386.424px;width:3.2px;height:3.648000000000002px;background:#70b850;"></div>
<div class="a" style="left:709.0000000000001px;top:375.29999999999995px;width:26.09999999999991px;height:18.700000000000014px;background:#707070;"></div>
<div class="a" style="left:711.3000000000001px;top:375.59999999999997px;width:0.6px;height:18.100000000000012px;background:#7c7c7c;"></div>
<div class="a" style="left:716.4000000000001px;top:375.59999999999997px;width:0.6px;height:18.100000000000012px;background:#7c7c7c;"></div>
<div class="a" style="left:721.5px;top:375.59999999999997px;width:0.6px;height:18.100000000000012px;background:#7c7c7c;"></div>
<div class="a" style="left:726.6px;top:375.59999999999997px;width:0.6px;height:18.100000000000012px;background:#7c7c7c;"></div>
<div class="a" style="left:731.7px;top:375.59999999999997px;width:0.6px;height:18.100000000000012px;background:#7c7c7c;"></div>
<div class="a" style="left:709.3000000000001px;top:375.59999999999997px;width:1.8px;height:18.100000000000012px;background:#62607a;"></div>
<div class="a" style="left:723.325px;top:376.4px;width:7.649999999999972px;height:16.50000000000001px;background:#c8c2f2;"></div>
<div class="a t" style="left:713.22px;top:384.69px;font-size:4.2px;color:#2e2e2e;font-family:'Liberation Sans',sans-serif;">##.# value</div>
<div class="a" style="left:698.2px;top:396px;width:41.59999999999991px;height:6.8px;background:#2a2a2d;border:0.8px solid #56565a;border-top:none;"></div>
<div class="a t" style="left:699.60px;top:397.68px;font-size:4.6px;color:#bdbdbd;font-family:'Liberation Mono',monospace;transform:scaleX(0.8875);transform-origin:0 0;">filter1</div>
<div class="a" style="left:729.8px;top:397px;width:4.5px;height:5px;background:#2c3550;"></div>
<div class="a" style="left:734.8px;top:397px;width:4px;height:5px;background:#34343a;"></div>
<div class="a" style="left:754.5px;top:373.2px;width:41.89999999999998px;height:22.80000000000001px;background:#6a6a6a;"></div>
<div class="a" style="left:754.5px;top:373.2px;width:9.2px;height:22.80000000000001px;background:#64b844;"></div>
<div class="a" style="left:757.1px;top:373.2px;width:0.7px;height:22.80000000000001px;background:#84d464;"></div>
<div class="a" style="left:762.3px;top:373.2px;width:0.6px;height:22.80000000000001px;background:#52a034;"></div>
<div class="a" style="left:758.8px;top:375.2px;width:2.6px;height:2px;background:#c8f0b8;opacity:0.5;border-radius:1px;"></div>
<div class="a" style="left:758.8px;top:380.8px;width:2.6px;height:2px;background:#c8f0b8;opacity:0.5;border-radius:1px;"></div>
<div class="a" style="left:758.8px;top:386.4px;width:2.6px;height:2px;background:#c8f0b8;opacity:0.5;border-radius:1px;"></div>
<div class="a" style="left:758.8px;top:392.0px;width:2.6px;height:2px;background:#c8f0b8;opacity:0.5;border-radius:1px;"></div>
<div class="a" style="left:792.0px;top:373.2px;width:4.4px;height:22.80000000000001px;background:#a2a2a2;"></div>
<div class="a" style="left:793.1999999999999px;top:380.724px;width:3.2px;height:3.648000000000002px;background:#70b850;"></div>
<div class="a" style="left:793.1999999999999px;top:386.424px;width:3.2px;height:3.648000000000002px;background:#70b850;"></div>
<div class="a" style="left:765.3000000000001px;top:375.29999999999995px;width:26.399999999999977px;height:18.700000000000014px;background:#707070;"></div>
<div class="a" style="left:767.6px;top:375.59999999999997px;width:0.6px;height:18.100000000000012px;background:#7c7c7c;"></div>
<div class="a" style="left:772.76px;top:375.59999999999997px;width:0.6px;height:18.100000000000012px;background:#7c7c7c;"></div>
<div class="a" style="left:777.92px;top:375.59999999999997px;width:0.6px;height:18.100000000000012px;background:#7c7c7c;"></div>
<div class="a" style="left:783.08px;top:375.59999999999997px;width:0.6px;height:18.100000000000012px;background:#7c7c7c;"></div>
<div class="a" style="left:788.24px;top:375.59999999999997px;width:0.6px;height:18.100000000000012px;background:#7c7c7c;"></div>
<div class="a" style="left:765.6px;top:375.59999999999997px;width:1.8px;height:18.100000000000012px;background:#62607a;"></div>
<div class="a t" style="left:775.66px;top:384.69px;font-size:4.2px;color:#2e2e2e;font-family:'Liberation Sans',sans-serif;">0 value</div>
<div class="a" style="left:754.5px;top:396px;width:41.89999999999998px;height:6.8px;background:#2a2a2d;border:0.8px solid #56565a;border-top:none;"></div>
<div class="a t" style="left:755.90px;top:397.68px;font-size:4.6px;color:#bdbdbd;font-family:'Liberation Mono',monospace;transform:scaleX(0.8875);transform-origin:0 0;">trigger1</div>
<div class="a" style="left:786.4px;top:397px;width:4.5px;height:5px;background:#2c3550;"></div>
<div class="a" style="left:791.4px;top:397px;width:4px;height:5px;background:#34343a;"></div>
<div class="a" style="left:826.6px;top:373.2px;width:42.19999999999993px;height:22.80000000000001px;background:#6a6a6a;"></div>
<div class="a" style="left:826.6px;top:373.2px;width:9.2px;height:22.80000000000001px;background:#64b844;"></div>
<div class="a" style="left:829.2px;top:373.2px;width:0.7px;height:22.80000000000001px;background:#84d464;"></div>
<div class="a" style="left:834.4px;top:373.2px;width:0.6px;height:22.80000000000001px;background:#52a034;"></div>
<div class="a" style="left:830.9px;top:375.2px;width:2.6px;height:2px;background:#c8f0b8;opacity:0.5;border-radius:1px;"></div>
<div class="a" style="left:830.9px;top:380.8px;width:2.6px;height:2px;background:#c8f0b8;opacity:0.5;border-radius:1px;"></div>
<div class="a" style="left:830.9px;top:386.4px;width:2.6px;height:2px;background:#c8f0b8;opacity:0.5;border-radius:1px;"></div>
<div class="a" style="left:830.9px;top:392.0px;width:2.6px;height:2px;background:#c8f0b8;opacity:0.5;border-radius:1px;"></div>
<div class="a" style="left:864.4px;top:373.2px;width:4.4px;height:22.80000000000001px;background:#a2a2a2;"></div>
<div class="a" style="left:865.5999999999999px;top:380.724px;width:3.2px;height:3.648000000000002px;background:#70b850;"></div>
<div class="a" style="left:865.5999999999999px;top:386.424px;width:3.2px;height:3.648000000000002px;background:#70b850;"></div>
<div class="a" style="left:837.4000000000001px;top:375.29999999999995px;width:26.699999999999932px;height:18.700000000000014px;background:#707070;"></div>
<div class="a" style="left:839.7px;top:375.59999999999997px;width:0.6px;height:18.100000000000012px;background:#7c7c7c;"></div>
<div class="a" style="left:844.9200000000001px;top:375.59999999999997px;width:0.6px;height:18.100000000000012px;background:#7c7c7c;"></div>
<div class="a" style="left:850.14px;top:375.59999999999997px;width:0.6px;height:18.100000000000012px;background:#7c7c7c;"></div>
<div class="a" style="left:855.36px;top:375.59999999999997px;width:0.6px;height:18.100000000000012px;background:#7c7c7c;"></div>
<div class="a" style="left:860.58px;top:375.59999999999997px;width:0.6px;height:18.100000000000012px;background:#7c7c7c;"></div>
<div class="a" style="left:837.7px;top:375.59999999999997px;width:1.8px;height:18.100000000000012px;background:#62607a;"></div>
<div class="a t" style="left:848.06px;top:384.69px;font-size:4.2px;color:#2e2e2e;font-family:'Liberation Sans',sans-serif;">0 value</div>
<div class="a" style="left:826.6px;top:396px;width:42.19999999999993px;height:6.8px;background:#2a2a2d;border:0.8px solid #56565a;border-top:none;"></div>
<div class="a t" style="left:828.00px;top:397.68px;font-size:4.6px;color:#bdbdbd;font-family:'Liberation Mono',monospace;transform:scaleX(0.8875);transform-origin:0 0;">null1</div>
<div class="a" style="left:858.8px;top:397px;width:4.5px;height:5px;background:#2c3550;"></div>
<div class="a" style="left:863.8px;top:397px;width:4px;height:5px;background:#34343a;"></div>
<svg class="a" style="left:852.6px;top:397.2px;" width="4.2" height="4.2" viewBox="0 0 4.2 4.2"><circle cx="2.1" cy="2.1" r="2" fill="#7ad654"/></svg>
<div class="a" style="left:862.0px;top:403px;width:6.5px;height:6.5px;background:#c86ab4;"></div>
<div class="a" style="left:863.8px;top:405.5px;width:3px;height:1.5px;background:#f0d8ea;"></div>
<div class="a" style="left:907.2px;top:373.2px;width:42.0px;height:22.80000000000001px;background:#6a6a6a;"></div>
<div class="a" style="left:907.2px;top:373.2px;width:9.2px;height:22.80000000000001px;background:#64b844;"></div>
<div class="a" style="left:909.8000000000001px;top:373.2px;width:0.7px;height:22.80000000000001px;background:#84d464;"></div>
<div class="a" style="left:915.0px;top:373.2px;width:0.6px;height:22.80000000000001px;background:#52a034;"></div>
<div class="a" style="left:911.5px;top:375.2px;width:2.6px;height:2px;background:#c8f0b8;opacity:0.5;border-radius:1px;"></div>
<div class="a" style="left:911.5px;top:380.8px;width:2.6px;height:2px;background:#c8f0b8;opacity:0.5;border-radius:1px;"></div>
<div class="a" style="left:911.5px;top:386.4px;width:2.6px;height:2px;background:#c8f0b8;opacity:0.5;border-radius:1px;"></div>
<div class="a" style="left:911.5px;top:392.0px;width:2.6px;height:2px;background:#c8f0b8;opacity:0.5;border-radius:1px;"></div>
<div class="a" style="left:944.8000000000001px;top:373.2px;width:4.4px;height:22.80000000000001px;background:#a2a2a2;"></div>
<div class="a" style="left:946.0px;top:380.724px;width:3.2px;height:3.648000000000002px;background:#70b850;"></div>
<div class="a" style="left:946.0px;top:386.424px;width:3.2px;height:3.648000000000002px;background:#70b850;"></div>
<div class="a" style="left:918.3000000000001px;top:375.59999999999997px;width:25.9px;height:18.100000000000012px;background:#060606;"></div>
<svg class="a" style="left:0;top:0" width="1024" height="576"><polyline points="920.80,383.35 921.67,380.54 922.54,381.67 923.41,380.87 924.28,380.31 925.15,381.75 926.03,383.86 926.90,384.64 927.77,381.07 928.64,381.56 929.51,380.27 930.38,379.56 931.25,384.46 932.12,383.39 932.99,379.72 933.86,379.99 934.73,381.85 935.60,381.20 936.48,384.86 937.35,381.26 938.22,380.10 939.09,381.29 939.96,383.21 940.83,384.78 941.70,378.23" stroke="#ff1c1c" stroke-width="1.4" fill="none"/><polyline points="920.80,380.76 921.67,385.05 922.54,379.96 923.41,378.71 924.28,379.23 925.15,384.89 926.03,383.48 926.90,381.93 927.77,379.04 928.64,381.69 929.51,381.68 930.38,378.98 931.25,384.50 932.12,383.90 932.99,384.61 933.86,378.39 934.73,383.99 935.60,379.40 936.48,380.88 937.35,382.61 938.22,379.03 939.09,381.61 939.96,382.96 940.83,378.54 941.70,381.31" stroke="#ff1c1c" stroke-width="1.4" fill="none"/><rect x="921.3000000000001" y="380.66799999999995" width="19.9" height="1.448000000000001" fill="#ff1c1c"/><polyline points="920.80,388.47 921.67,391.34 922.54,389.88 923.41,391.46 924.28,389.40 925.15,386.65 926.03,388.45 926.90,387.00 927.77,386.92 928.64,387.28 929.51,387.73 930.38,389.73 931.25,388.32 932.12,389.40 932.99,389.81 933.86,390.54 934.73,391.56 935.60,387.95 936.48,389.44 937.35,388.14 938.22,391.51 939.09,387.57 939.96,389.17 940.83,389.00 941.70,389.20" stroke="#f4ef14" stroke-width="1.3" fill="none"/><polyline points="920.80,391.17 921.67,387.87 922.54,388.77 923.41,389.83 924.28,388.71 925.15,391.07 926.03,390.62 926.90,390.49 927.77,387.18 928.64,387.28 929.51,388.44 930.38,388.40 931.25,389.63 932.12,389.70 932.99,389.70 933.86,389.09 934.73,389.46 935.60,386.93 936.48,386.42 937.35,388.59 938.22,389.72 939.09,388.09 939.96,388.17 940.83,390.36 941.70,389.44" stroke="#f4ef14" stroke-width="1.3" fill="none"/><rect x="921.3000000000001" y="388.27" width="19.9" height="1.267000000000001" fill="#f4ef14"/><rect x="920.8000000000001" y="378.85799999999995" width="1" height="4.525000000000003" fill="#e0e0e0"/><rect x="920.8000000000001" y="386.46" width="1" height="4.525000000000003" fill="#e0e0e0"/></svg>
<div class="a" style="left:907.2px;top:396px;width:42.0px;height:6.8px;background:#2a2a2d;border:0.8px solid #56565a;border-top:none;"></div>
<div class="a t" style="left:908.60px;top:397.68px;font-size:4.6px;color:#bdbdbd;font-family:'Liberation Mono',monospace;transform:scaleX(0.8875);transform-origin:0 0;">audiofilein1</div>
<div class="a" style="left:939.2px;top:397px;width:4.5px;height:5px;background:#2c3550;"></div>
<div class="a" style="left:944.2px;top:397px;width:4px;height:5px;background:#34343a;"></div>
<div class="a" style="left:963.6px;top:373.2px;width:42.10000000000002px;height:22.80000000000001px;background:#6a6a6a;"></div>
<div class="a" style="left:963.6px;top:373.2px;width:9.2px;height:22.80000000000001px;background:#64b844;"></div>
<div class="a" style="left:966.2px;top:373.2px;width:0.7px;height:22.80000000000001px;background:#84d464;"></div>
<div class="a" style="left:971.4px;top:373.2px;width:0.6px;height:22.80000000000001px;background:#52a034;"></div>
<div class="a" style="left:967.9px;top:375.2px;width:2.6px;height:2px;background:#c8f0b8;opacity:0.5;border-radius:1px;"></div>
<div class="a" style="left:967.9px;top:380.8px;width:2.6px;height:2px;background:#c8f0b8;opacity:0.5;border-radius:1px;"></div>
<div class="a" style="left:967.9px;top:386.4px;width:2.6px;height:2px;background:#c8f0b8;opacity:0.5;border-radius:1px;"></div>
<div class="a" style="left:967.9px;top:392.0px;width:2.6px;height:2px;background:#c8f0b8;opacity:0.5;border-radius:1px;"></div>
<div class="a" style="left:1001.3000000000001px;top:373.2px;width:4.4px;height:22.80000000000001px;background:#a2a2a2;"></div>
<div class="a" style="left:1002.5px;top:380.724px;width:3.2px;height:3.648000000000002px;background:#70b850;"></div>
<div class="a" style="left:1002.5px;top:386.424px;width:3.2px;height:3.648000000000002px;background:#70b850;"></div>
<div class="a" style="left:974.7px;top:375.59999999999997px;width:26.00000000000002px;height:18.100000000000012px;background:#060606;"></div>
<svg class="a" style="left:0;top:0" width="1024" height="576"><polyline points="977.20,383.72 978.08,379.03 978.95,381.39 979.83,381.79 980.70,383.63 981.58,383.25 982.45,383.30 983.33,384.35 984.20,381.06 985.08,384.66 985.95,381.08 986.83,380.06 987.70,379.68 988.58,381.19 989.45,383.65 990.33,384.75 991.20,381.11 992.08,384.47 992.95,379.97 993.83,381.24 994.70,382.46 995.58,379.47 996.45,383.22 997.33,381.58 998.20,380.04" stroke="#ff1c1c" stroke-width="1.4" fill="none"/><polyline points="977.20,378.50 978.08,378.68 978.95,383.53 979.83,381.52 980.70,383.53 981.58,384.20 982.45,379.69 983.33,383.62 984.20,383.19 985.08,383.62 985.95,384.89 986.83,384.95 987.70,382.09 988.58,383.54 989.45,379.65 990.33,383.41 991.20,378.65 992.08,380.91 992.95,383.29 993.83,379.20 994.70,380.90 995.58,384.60 996.45,383.28 997.33,380.70 998.20,380.04" stroke="#ff1c1c" stroke-width="1.4" fill="none"/><rect x="977.7" y="380.66799999999995" width="20.00000000000002" height="1.448000000000001" fill="#ff1c1c"/><polyline points="977.20,391.38 978.08,388.45 978.95,389.47 979.83,388.09 980.70,386.84 981.58,390.59 982.45,390.57 983.33,390.76 984.20,391.51 985.08,388.21 985.95,387.73 986.83,388.62 987.70,389.63 988.58,388.91 989.45,391.54 990.33,386.53 991.20,387.13 992.08,387.21 992.95,388.92 993.83,387.50 994.70,390.42 995.58,387.03 996.45,390.62 997.33,388.10 998.20,390.13" stroke="#f4ef14" stroke-width="1.3" fill="none"/><polyline points="977.20,390.87 978.08,390.04 978.95,390.64 979.83,390.35 980.70,391.17 981.58,386.96 982.45,390.13 983.33,388.79 984.20,386.64 985.08,391.19 985.95,390.75 986.83,386.84 987.70,390.84 988.58,390.46 989.45,390.12 990.33,390.43 991.20,388.51 992.08,388.35 992.95,389.46 993.83,390.30 994.70,391.30 995.58,390.51 996.45,389.49 997.33,388.41 998.20,388.84" stroke="#f4ef14" stroke-width="1.3" fill="none"/><rect x="977.7" y="388.27" width="20.00000000000002" height="1.267000000000001" fill="#f4ef14"/><rect x="977.2" y="378.85799999999995" width="1" height="4.525000000000003" fill="#e0e0e0"/><rect x="977.2" y="386.46" width="1" height="4.525000000000003" fill="#e0e0e0"/></svg>
<div class="a" style="left:963.6px;top:396px;width:42.10000000000002px;height:6.8px;background:#2a2a2d;border:0.8px solid #56565a;border-top:none;"></div>
<div class="a t" style="left:965.00px;top:397.68px;font-size:4.6px;color:#bdbdbd;font-family:'Liberation Mono',monospace;transform:scaleX(0.8875);transform-origin:0 0;">audiodevout1</div>
<div class="a" style="left:995.7px;top:397px;width:4.5px;height:5px;background:#2c3550;"></div>
<div class="a" style="left:1000.7px;top:397px;width:4px;height:5px;background:#34343a;"></div>
<svg class="a" style="left:0;top:0" width="1024" height="576"><path d="M513 447H528.5" stroke="#7462b8" stroke-width="1.2" fill="none"/></svg>
<svg class="a" style="left:0;top:0" width="1024" height="576"><path d="M571 446.6C586 446.6 586 449.1 601 449.1" stroke="#7462b8" stroke-width="1.2" fill="none"/></svg>
<svg class="a" style="left:0;top:0" width="1024" height="576"><path d="M643 448.5H649.4" stroke="#0a0a0a" stroke-width="1.3" fill="none"/></svg>
<svg class="a" style="left:644.5px;top:450.2px;" width="4" height="4" viewBox="0 0 4 4"><path d="M0 0L4 2L0 4z" fill="#5a7390"/></svg>
<svg class="a" style="left:0;top:0" width="1024" height="576"><path d="M691.9 452C695 452 695 446 698.2 446" stroke="#78d050" stroke-width="1.1" fill="none"/></svg>
<svg class="a" style="left:0;top:0" width="1024" height="576"><path d="M698.2 450.5H702" stroke="#0a0a0a" stroke-width="1.2" fill="none"/></svg>
<svg class="a" style="left:0;top:0" width="1024" height="576"><path d="M739.8 449H754.5" stroke="#78d050" stroke-width="1.2" fill="none"/></svg>
<svg class="a" style="left:0;top:0" width="1024" height="576"><path d="M796.4 449H826.7" stroke="#78d050" stroke-width="1.2" fill="none"/></svg>
<svg class="a" style="left:0;top:0" width="1024" height="576"><path d="M869 452.7H907" stroke="#6a7f96" stroke-width="1.1" fill="none"/></svg>
<svg class="a" style="left:0;top:0" width="1024" height="576"><path d="M870 452.7H906" stroke="#1c1d21" stroke-width="1.3" stroke-dasharray="1 1.4" fill="none"/></svg>
<svg class="a" style="left:884.5px;top:450.2px;" width="5" height="5" viewBox="0 0 5 5"><path d="M0 0L5 2.5L0 5z" fill="#5a6f86"/></svg>
<svg class="a" style="left:0;top:0" width="1024" height="576"><path d="M949 451.5C956 451.5 957 446 963.6 446" stroke="#78d050" stroke-width="1.1" fill="none"/></svg>
<div class="a" style="left:528.4px;top:432.9px;width:42.60000000000002px;height:28.30000000000001px;background:#6a6a6a;"></div>
<div class="a" style="left:528.4px;top:432.9px;width:9.2px;height:28.30000000000001px;background:#6b5ca8;"></div>
<div class="a" style="left:531.0px;top:432.9px;width:0.7px;height:28.30000000000001px;background:#8270c0;"></div>
<div class="a" style="left:536.1999999999999px;top:432.9px;width:0.6px;height:28.30000000000001px;background:#5d4f98;"></div>
<div class="a" style="left:532.6999999999999px;top:434.9px;width:2.6px;height:2px;background:#b4aae0;opacity:0.5;border-radius:1px;"></div>
<div class="a" style="left:532.6999999999999px;top:442.3333333333333px;width:2.6px;height:2px;background:#b4aae0;opacity:0.5;border-radius:1px;"></div>
<div class="a" style="left:532.6999999999999px;top:449.76666666666665px;width:2.6px;height:2px;background:#b4aae0;opacity:0.5;border-radius:1px;"></div>
<div class="a" style="left:532.6999999999999px;top:457.2px;width:2.6px;height:2px;background:#b4aae0;opacity:0.5;border-radius:1px;"></div>
<div class="a" style="left:566.6px;top:432.9px;width:4.4px;height:28.30000000000001px;background:#a2a2a2;"></div>
<div class="a" style="left:567.8px;top:442.239px;width:3.2px;height:4.528000000000002px;background:#7060b0;"></div>
<div class="a" style="left:567.8px;top:449.31399999999996px;width:3.2px;height:4.528000000000002px;background:#7060b0;"></div>
<div class="a" style="left:539.5px;top:435.29999999999995px;width:26.50000000000002px;height:23.600000000000012px;background:#484848;"></div>
<div class="a" style="left:539.5px;top:435.29999999999995px;width:1.2px;height:23.600000000000012px;background:#151515;"></div>
<div class="a" style="left:541.3px;top:441.19999999999993px;width:0.6px;height:4.720000000000002px;background:#d0d0d0;"></div>
<div class="a" style="left:528.4px;top:461.2px;width:42.60000000000002px;height:6.8px;background:#2a2a2d;border:0.8px solid #56565a;border-top:none;"></div>
<div class="a t" style="left:529.80px;top:462.88px;font-size:4.6px;color:#bdbdbd;font-family:'Liberation Mono',monospace;transform:scaleX(0.8875);transform-origin:0 0;">crop2</div>
<div class="a" style="left:561px;top:462.2px;width:4.5px;height:5px;background:#2c3550;"></div>
<div class="a" style="left:566px;top:462.2px;width:4px;height:5px;background:#34343a;"></div>
<div class="a" style="left:601.3px;top:437.7px;width:41.700000000000045px;height:23.5px;background:#6a6a6a;"></div>
<div class="a" style="left:601.3px;top:437.7px;width:9.2px;height:23.5px;background:#6b5ca8;"></div>
<div class="a" style="left:603.9px;top:437.7px;width:0.7px;height:23.5px;background:#8270c0;"></div>
<div class="a" style="left:609.0999999999999px;top:437.7px;width:0.6px;height:23.5px;background:#5d4f98;"></div>
<div class="a" style="left:605.5999999999999px;top:439.7px;width:2.6px;height:2px;background:#b4aae0;opacity:0.5;border-radius:1px;"></div>
<div class="a" style="left:605.5999999999999px;top:445.5333333333333px;width:2.6px;height:2px;background:#b4aae0;opacity:0.5;border-radius:1px;"></div>
<div class="a" style="left:605.5999999999999px;top:451.3666666666667px;width:2.6px;height:2px;background:#b4aae0;opacity:0.5;border-radius:1px;"></div>
<div class="a" style="left:605.5999999999999px;top:457.2px;width:2.6px;height:2px;background:#b4aae0;opacity:0.5;border-radius:1px;"></div>
<div class="a" style="left:638.6px;top:437.7px;width:4.4px;height:23.5px;background:#a2a2a2;"></div>
<div class="a" style="left:639.8px;top:445.455px;width:3.2px;height:3.7600000000000002px;background:#7060b0;"></div>
<div class="a" style="left:639.8px;top:451.33px;width:3.2px;height:3.7600000000000002px;background:#7060b0;"></div>
<div class="a" style="left:612.4px;top:440.09999999999997px;width:25.600000000000044px;height:18.8px;background:#111;"></div>
<div class="a" style="left:616.24px;top:440.4px;width:17.92000000000003px;height:18.2px;background:#ffffff;"></div>
<div class="a" style="left:601.3px;top:461.2px;width:41.700000000000045px;height:6.8px;background:#2a2a2d;border:0.8px solid #56565a;border-top:none;"></div>
<div class="a t" style="left:602.70px;top:462.88px;font-size:4.6px;color:#bdbdbd;font-family:'Liberation Mono',monospace;transform:scaleX(0.8875);transform-origin:0 0;">analyze2</div>
<div class="a" style="left:633px;top:462.2px;width:4.5px;height:5px;background:#2c3550;"></div>
<div class="a" style="left:638px;top:462.2px;width:4px;height:5px;background:#34343a;"></div>
<div class="a" style="left:649.4px;top:437.5px;width:42.5px;height:23.69999999999999px;background:#6a6a6a;"></div>
<div class="a" style="left:649.4px;top:437.5px;width:9.2px;height:23.69999999999999px;background:#64b844;"></div>
<div class="a" style="left:652.0px;top:437.5px;width:0.7px;height:23.69999999999999px;background:#84d464;"></div>
<div class="a" style="left:657.1999999999999px;top:437.5px;width:0.6px;height:23.69999999999999px;background:#52a034;"></div>
<div class="a" style="left:653.6999999999999px;top:439.5px;width:2.6px;height:2px;background:#c8f0b8;opacity:0.5;border-radius:1px;"></div>
<div class="a" style="left:653.6999999999999px;top:445.4px;width:2.6px;height:2px;background:#c8f0b8;opacity:0.5;border-radius:1px;"></div>
<div class="a" style="left:653.6999999999999px;top:451.3px;width:2.6px;height:2px;background:#c8f0b8;opacity:0.5;border-radius:1px;"></div>
<div class="a" style="left:653.6999999999999px;top:457.2px;width:2.6px;height:2px;background:#c8f0b8;opacity:0.5;border-radius:1px;"></div>
<div class="a" style="left:687.5px;top:437.5px;width:4.4px;height:23.69999999999999px;background:#a2a2a2;"></div>
<div class="a" style="left:688.6999999999999px;top:445.32099999999997px;width:3.2px;height:3.791999999999998px;background:#70b850;"></div>
<div class="a" style="left:688.6999999999999px;top:451.246px;width:3.2px;height:3.791999999999998px;background:#70b850;"></div>
<div class="a" style="left:660.2px;top:439.59999999999997px;width:27.0px;height:19.59999999999999px;background:#707070;"></div>
<div class="a" style="left:662.5px;top:439.9px;width:0.6px;height:18.99999999999999px;background:#7c7c7c;"></div>
<div class="a" style="left:667.78px;top:439.9px;width:0.6px;height:18.99999999999999px;background:#7c7c7c;"></div>
<div class="a" style="left:673.06px;top:439.9px;width:0.6px;height:18.99999999999999px;background:#7c7c7c;"></div>
<div class="a" style="left:678.34px;top:439.9px;width:0.6px;height:18.99999999999999px;background:#7c7c7c;"></div>
<div class="a" style="left:683.62px;top:439.9px;width:0.6px;height:18.99999999999999px;background:#7c7c7c;"></div>
<div class="a" style="left:660.5px;top:439.9px;width:1.8px;height:18.99999999999999px;background:#62607a;"></div>
<div class="a t" style="left:668.82px;top:449.58px;font-size:4.2px;color:#2e2e2e;font-family:'Liberation Sans',sans-serif;">## value</div>
<div class="a" style="left:649.4px;top:461.2px;width:42.5px;height:6.8px;background:#2a2a2d;border:0.8px solid #56565a;border-top:none;"></div>
<div class="a t" style="left:650.80px;top:462.88px;font-size:4.6px;color:#bdbdbd;font-family:'Liberation Mono',monospace;transform:scaleX(0.8875);transform-origin:0 0;">topnum2</div>
<div class="a" style="left:681.9px;top:462.2px;width:4.5px;height:5px;background:#2c3550;"></div>
<div class="a" style="left:686.9px;top:462.2px;width:4px;height:5px;background:#34343a;"></div>
<div class="a" style="left:698.2px;top:437.5px;width:41.59999999999991px;height:23.69999999999999px;background:#6a6a6a;"></div>
<div class="a" style="left:698.2px;top:437.5px;width:9.2px;height:23.69999999999999px;background:#64b844;"></div>
<div class="a" style="left:700.8000000000001px;top:437.5px;width:0.7px;height:23.69999999999999px;background:#84d464;"></div>
<div class="a" style="left:706.0px;top:437.5px;width:0.6px;height:23.69999999999999px;background:#52a034;"></div>
<div class="a" style="left:702.5px;top:439.5px;width:2.6px;height:2px;background:#c8f0b8;opacity:0.5;border-radius:1px;"></div>
<div class="a" style="left:702.5px;top:445.4px;width:2.6px;height:2px;background:#c8f0b8;opacity:0.5;border-radius:1px;"></div>
<div class="a" style="left:702.5px;top:451.3px;width:2.6px;height:2px;background:#c8f0b8;opacity:0.5;border-radius:1px;"></div>
<div class="a" style="left:702.5px;top:457.2px;width:2.6px;height:2px;background:#c8f0b8;opacity:0.5;border-radius:1px;"></div>
<div class="a" style="left:735.4px;top:437.5px;width:4.4px;height:23.69999999999999px;background:#a2a2a2;"></div>
<div class="a" style="left:736.5999999999999px;top:445.32099999999997px;width:3.2px;height:3.791999999999998px;background:#70b850;"></div>
<div class="a" style="left:736.5999999999999px;top:451.246px;width:3.2px;height:3.791999999999998px;background:#70b850;"></div>
<div class="a" style="left:709.0000000000001px;top:439.59999999999997px;width:26.09999999999991px;height:19.59999999999999px;background:#707070;"></div>
<div class="a" style="left:711.3000000000001px;top:439.9px;width:0.6px;height:18.99999999999999px;background:#7c7c7c;"></div>
<div class="a" style="left:716.4000000000001px;top:439.9px;width:0.6px;height:18.99999999999999px;background:#7c7c7c;"></div>
<div class="a" style="left:721.5px;top:439.9px;width:0.6px;height:18.99999999999999px;background:#7c7c7c;"></div>
<div class="a" style="left:726.6px;top:439.9px;width:0.6px;height:18.99999999999999px;background:#7c7c7c;"></div>
<div class="a" style="left:731.7px;top:439.9px;width:0.6px;height:18.99999999999999px;background:#7c7c7c;"></div>
<div class="a" style="left:709.3000000000001px;top:439.9px;width:1.8px;height:18.99999999999999px;background:#62607a;"></div>
<div class="a t" style="left:713.22px;top:449.58px;font-size:4.2px;color:#2e2e2e;font-family:'Liberation Sans',sans-serif;">##.# value</div>
<div class="a" style="left:698.2px;top:461.2px;width:41.59999999999991px;height:6.8px;background:#2a2a2d;border:0.8px solid #56565a;border-top:none;"></div>
<div class="a t" style="left:699.60px;top:462.88px;font-size:4.6px;color:#bdbdbd;font-family:'Liberation Mono',monospace;transform:scaleX(0.8875);transform-origin:0 0;">filter2</div>
<div class="a" style="left:729.8px;top:462.2px;width:4.5px;height:5px;background:#2c3550;"></div>
<div class="a" style="left:734.8px;top:462.2px;width:4px;height:5px;background:#34343a;"></div>
<div class="a" style="left:754.5px;top:437.5px;width:41.89999999999998px;height:23.69999999999999px;background:#6a6a6a;"></div>
<div class="a" style="left:754.5px;top:437.5px;width:9.2px;height:23.69999999999999px;background:#64b844;"></div>
<div class="a" style="left:757.1px;top:437.5px;width:0.7px;height:23.69999999999999px;background:#84d464;"></div>
<div class="a" style="left:762.3px;top:437.5px;width:0.6px;height:23.69999999999999px;background:#52a034;"></div>
<div class="a" style="left:758.8px;top:439.5px;width:2.6px;height:2px;background:#c8f0b8;opacity:0.5;border-radius:1px;"></div>
<div class="a" style="left:758.8px;top:445.4px;width:2.6px;height:2px;background:#c8f0b8;opacity:0.5;border-radius:1px;"></div>
<div class="a" style="left:758.8px;top:451.3px;width:2.6px;height:2px;background:#c8f0b8;opacity:0.5;border-radius:1px;"></div>
<div class="a" style="left:758.8px;top:457.2px;width:2.6px;height:2px;background:#c8f0b8;opacity:0.5;border-radius:1px;"></div>
<div class="a" style="left:792.0px;top:437.5px;width:4.4px;height:23.69999999999999px;background:#a2a2a2;"></div>
<div class="a" style="left:793.1999999999999px;top:445.32099999999997px;width:3.2px;height:3.791999999999998px;background:#70b850;"></div>
<div class="a" style="left:793.1999999999999px;top:451.246px;width:3.2px;height:3.791999999999998px;background:#70b850;"></div>
<div class="a" style="left:765.3000000000001px;top:439.59999999999997px;width:26.399999999999977px;height:19.59999999999999px;background:#707070;"></div>
<div class="a" style="left:767.6px;top:439.9px;width:0.6px;height:18.99999999999999px;background:#7c7c7c;"></div>
<div class="a" style="left:772.76px;top:439.9px;width:0.6px;height:18.99999999999999px;background:#7c7c7c;"></div>
<div class="a" style="left:777.92px;top:439.9px;width:0.6px;height:18.99999999999999px;background:#7c7c7c;"></div>
<div class="a" style="left:783.08px;top:439.9px;width:0.6px;height:18.99999999999999px;background:#7c7c7c;"></div>
<div class="a" style="left:788.24px;top:439.9px;width:0.6px;height:18.99999999999999px;background:#7c7c7c;"></div>
<div class="a" style="left:765.6px;top:439.9px;width:1.8px;height:18.99999999999999px;background:#62607a;"></div>
<div class="a t" style="left:775.66px;top:449.58px;font-size:4.2px;color:#2e2e2e;font-family:'Liberation Sans',sans-serif;">0 value</div>
<div class="a" style="left:754.5px;top:461.2px;width:41.89999999999998px;height:6.8px;background:#2a2a2d;border:0.8px solid #56565a;border-top:none;"></div>
<div class="a t" style="left:755.90px;top:462.88px;font-size:4.6px;color:#bdbdbd;font-family:'Liberation Mono',monospace;transform:scaleX(0.8875);transform-origin:0 0;">trigger2</div>
<div class="a" style="left:786.4px;top:462.2px;width:4.5px;height:5px;background:#2c3550;"></div>
<div class="a" style="left:791.4px;top:462.2px;width:4px;height:5px;background:#34343a;"></div>
<div class="a" style="left:826.6px;top:437.5px;width:42.19999999999993px;height:23.69999999999999px;background:#6a6a6a;"></div>
<div class="a" style="left:826.6px;top:437.5px;width:9.2px;height:23.69999999999999px;background:#64b844;"></div>
<div class="a" style="left:829.2px;top:437.5px;width:0.7px;height:23.69999999999999px;background:#84d464;"></div>
<div class="a" style="left:834.4px;top:437.5px;width:0.6px;height:23.69999999999999px;background:#52a034;"></div>
<div class="a" style="left:830.9px;top:439.5px;width:2.6px;height:2px;background:#c8f0b8;opacity:0.5;border-radius:1px;"></div>
<div class="a" style="left:830.9px;top:445.4px;width:2.6px;height:2px;background:#c8f0b8;opacity:0.5;border-radius:1px;"></div>
<div class="a" style="left:830.9px;top:451.3px;width:2.6px;height:2px;background:#c8f0b8;opacity:0.5;border-radius:1px;"></div>
<div class="a" style="left:830.9px;top:457.2px;width:2.6px;height:2px;background:#c8f0b8;opacity:0.5;border-radius:1px;"></div>
<div class="a" style="left:864.4px;top:437.5px;width:4.4px;height:23.69999999999999px;background:#a2a2a2;"></div>
<div class="a" style="left:865.5999999999999px;top:445.32099999999997px;width:3.2px;height:3.791999999999998px;background:#70b850;"></div>
<div class="a" style="left:865.5999999999999px;top:451.246px;width:3.2px;height:3.791999999999998px;background:#70b850;"></div>
<div class="a" style="left:837.4000000000001px;top:439.59999999999997px;width:26.699999999999932px;height:19.59999999999999px;background:#707070;"></div>
<div class="a" style="left:839.7px;top:439.9px;width:0.6px;height:18.99999999999999px;background:#7c7c7c;"></div>
<div class="a" style="left:844.9200000000001px;top:439.9px;width:0.6px;height:18.99999999999999px;background:#7c7c7c;"></div>
<div class="a" style="left:850.14px;top:439.9px;width:0.6px;height:18.99999999999999px;background:#7c7c7c;"></div>
<div class="a" style="left:855.36px;top:439.9px;width:0.6px;height:18.99999999999999px;background:#7c7c7c;"></div>
<div class="a" style="left:860.58px;top:439.9px;width:0.6px;height:18.99999999999999px;background:#7c7c7c;"></div>
<div class="a" style="left:837.7px;top:439.9px;width:1.8px;height:18.99999999999999px;background:#62607a;"></div>
<div class="a t" style="left:848.06px;top:449.58px;font-size:4.2px;color:#2e2e2e;font-family:'Liberation Sans',sans-serif;">0 value</div>
<div class="a" style="left:826.6px;top:461.2px;width:42.19999999999993px;height:6.8px;background:#2a2a2d;border:0.8px solid #56565a;border-top:none;"></div>
<div class="a t" style="left:828.00px;top:462.88px;font-size:4.6px;color:#bdbdbd;font-family:'Liberation Mono',monospace;transform:scaleX(0.8875);transform-origin:0 0;">null2</div>
<div class="a" style="left:858.8px;top:462.2px;width:4.5px;height:5px;background:#2c3550;"></div>
<div class="a" style="left:863.8px;top:462.2px;width:4px;height:5px;background:#34343a;"></div>
<svg class="a" style="left:852.6px;top:462.4px;" width="4.2" height="4.2" viewBox="0 0 4.2 4.2"><circle cx="2.1" cy="2.1" r="2" fill="#7ad654"/></svg>
<div class="a" style="left:862.0px;top:468.2px;width:6.5px;height:6.5px;background:#c86ab4;"></div>
<div class="a" style="left:863.8px;top:470.7px;width:3px;height:1.5px;background:#f0d8ea;"></div>
<div class="a" style="left:907.2px;top:437.5px;width:42.0px;height:23.69999999999999px;background:#6a6a6a;"></div>
<div class="a" style="left:907.2px;top:437.5px;width:9.2px;height:23.69999999999999px;background:#64b844;"></div>
<div class="a" style="left:909.8000000000001px;top:437.5px;width:0.7px;height:23.69999999999999px;background:#84d464;"></div>
<div class="a" style="left:915.0px;top:437.5px;width:0.6px;height:23.69999999999999px;background:#52a034;"></div>
<div class="a" style="left:911.5px;top:439.5px;width:2.6px;height:2px;background:#c8f0b8;opacity:0.5;border-radius:1px;"></div>
<div class="a" style="left:911.5px;top:445.4px;width:2.6px;height:2px;background:#c8f0b8;opacity:0.5;border-radius:1px;"></div>
<div class="a" style="left:911.5px;top:451.3px;width:2.6px;height:2px;background:#c8f0b8;opacity:0.5;border-radius:1px;"></div>
<div class="a" style="left:911.5px;top:457.2px;width:2.6px;height:2px;background:#c8f0b8;opacity:0.5;border-radius:1px;"></div>
<div class="a" style="left:944.8000000000001px;top:437.5px;width:4.4px;height:23.69999999999999px;background:#a2a2a2;"></div>
<div class="a" style="left:946.0px;top:445.32099999999997px;width:3.2px;height:3.791999999999998px;background:#70b850;"></div>
<div class="a" style="left:946.0px;top:451.246px;width:3.2px;height:3.791999999999998px;background:#70b850;"></div>
<div class="a" style="left:918.3000000000001px;top:439.9px;width:25.9px;height:18.99999999999999px;background:#060606;"></div>
<svg class="a" style="left:0;top:0" width="1024" height="576"><polyline points="920.80,445.26 921.67,442.54 922.54,443.58 923.41,443.19 924.28,448.35 925.15,449.40 926.03,445.94 926.90,443.96 927.77,446.64 928.64,447.53 929.51,446.07 930.38,443.51 931.25,444.20 932.12,445.59 932.99,443.72 933.86,447.23 934.73,444.78 935.60,445.81 936.48,443.41 937.35,446.95 938.22,449.69 939.09,446.25 939.96,446.46 940.83,446.08 941.70,444.05" stroke="#ff1c1c" stroke-width="1.4" fill="none"/><polyline points="920.80,447.86 921.67,448.37 922.54,448.85 923.41,442.46 924.28,447.56 925.15,448.04 926.03,446.02 926.90,442.61 927.77,446.98 928.64,445.42 929.51,444.29 930.38,444.77 931.25,444.95 932.12,445.35 932.99,444.78 933.86,447.85 934.73,447.70 935.60,449.26 936.48,445.61 937.35,446.05 938.22,447.33 939.09,448.32 939.96,442.74 940.83,442.46 941.70,446.73" stroke="#ff1c1c" stroke-width="1.4" fill="none"/><rect x="921.3000000000001" y="445.21999999999997" width="19.9" height="1.5199999999999991" fill="#ff1c1c"/><polyline points="920.80,455.66 921.67,453.15 922.54,456.50 923.41,455.14 924.28,451.65 925.15,451.96 926.03,453.24 926.90,456.47 927.77,451.72 928.64,456.20 929.51,455.75 930.38,453.12 931.25,453.72 932.12,452.55 932.99,454.78 933.86,456.80 934.73,453.60 935.60,451.36 936.48,455.71 937.35,453.47 938.22,451.96 939.09,455.73 939.96,454.49 940.83,453.20 941.70,453.17" stroke="#f4ef14" stroke-width="1.3" fill="none"/><polyline points="920.80,455.05 921.67,455.44 922.54,451.67 923.41,455.19 924.28,455.55 925.15,452.47 926.03,454.47 926.90,455.81 927.77,451.67 928.64,456.39 929.51,455.05 930.38,454.69 931.25,454.48 932.12,454.55 932.99,451.39 933.86,453.53 934.73,456.02 935.60,455.17 936.48,452.62 937.35,451.88 938.22,451.64 939.09,456.16 939.96,453.59 940.83,451.20 941.70,452.65" stroke="#f4ef14" stroke-width="1.3" fill="none"/><rect x="921.3000000000001" y="453.2" width="19.9" height="1.3299999999999994" fill="#f4ef14"/><rect x="920.8000000000001" y="443.32" width="1" height="4.749999999999997" fill="#e0e0e0"/><rect x="920.8000000000001" y="451.29999999999995" width="1" height="4.749999999999997" fill="#e0e0e0"/></svg>
<div class="a" style="left:907.2px;top:461.2px;width:42.0px;height:6.8px;background:#2a2a2d;border:0.8px solid #56565a;border-top:none;"></div>
<div class="a t" style="left:908.60px;top:462.88px;font-size:4.6px;color:#bdbdbd;font-family:'Liberation Mono',monospace;transform:scaleX(0.8875);transform-origin:0 0;">audiofilein2</div>
<div class="a" style="left:939.2px;top:462.2px;width:4.5px;height:5px;background:#2c3550;"></div>
<div class="a" style="left:944.2px;top:462.2px;width:4px;height:5px;background:#34343a;"></div>
<div class="a" style="left:963.6px;top:437.5px;width:42.10000000000002px;height:23.69999999999999px;background:#6a6a6a;"></div>
<div class="a" style="left:963.6px;top:437.5px;width:9.2px;height:23.69999999999999px;background:#64b844;"></div>
<div class="a" style="left:966.2px;top:437.5px;width:0.7px;height:23.69999999999999px;background:#84d464;"></div>
<div class="a" style="left:971.4px;top:437.5px;width:0.6px;height:23.69999999999999px;background:#52a034;"></div>
<div class="a" style="left:967.9px;top:439.5px;width:2.6px;height:2px;background:#c8f0b8;opacity:0.5;border-radius:1px;"></div>
<div class="a" style="left:967.9px;top:445.4px;width:2.6px;height:2px;background:#c8f0b8;opacity:0.5;border-radius:1px;"></div>
<div class="a" style="left:967.9px;top:451.3px;width:2.6px;height:2px;background:#c8f0b8;opacity:0.5;border-radius:1px;"></div>
<div class="a" style="left:967.9px;top:457.2px;width:2.6px;height:2px;background:#c8f0b8;opacity:0.5;border-radius:1px;"></div>
<div class="a" style="left:1001.3000000000001px;top:437.5px;width:4.4px;height:23.69999999999999px;background:#a2a2a2;"></div>
<div class="a" style="left:1002.5px;top:445.32099999999997px;width:3.2px;height:3.791999999999998px;background:#70b850;"></div>
<div class="a" style="left:1002.5px;top:451.246px;width:3.2px;height:3.791999999999998px;background:#70b850;"></div>
<div class="a" style="left:974.7px;top:439.9px;width:26.00000000000002px;height:18.99999999999999px;background:#060606;"></div>
<svg class="a" style="left:0;top:0" width="1024" height="576"><polyline points="977.20,444.72 978.08,447.32 978.95,447.58 979.83,444.10 980.70,445.32 981.58,446.71 982.45,447.58 983.33,444.05 984.20,446.50 985.08,448.74 985.95,448.20 986.83,446.39 987.70,443.52 988.58,444.20 989.45,449.85 990.33,448.72 991.20,442.74 992.08,446.21 992.95,444.23 993.83,446.57 994.70,443.77 995.58,448.70 996.45,446.42 997.33,448.92 998.20,445.01" stroke="#ff1c1c" stroke-width="1.4" fill="none"/><polyline points="977.20,446.91 978.08,444.52 978.95,448.29 979.83,445.33 980.70,448.58 981.58,443.18 982.45,446.65 983.33,445.59 984.20,443.25 985.08,448.77 985.95,448.87 986.83,442.42 987.70,446.91 988.58,445.82 989.45,442.62 990.33,446.31 991.20,442.56 992.08,445.85 992.95,447.18 993.83,447.03 994.70,444.47 995.58,445.80 996.45,445.54 997.33,449.92 998.20,449.33" stroke="#ff1c1c" stroke-width="1.4" fill="none"/><rect x="977.7" y="445.21999999999997" width="20.00000000000002" height="1.5199999999999991" fill="#ff1c1c"/><polyline points="977.20,453.50 978.08,452.23 978.95,456.39 979.83,454.45 980.70,455.46 981.58,456.57 982.45,454.38 983.33,452.84 984.20,453.38 985.08,455.28 985.95,455.45 986.83,455.64 987.70,451.92 988.58,453.99 989.45,453.89 990.33,453.31 991.20,454.93 992.08,453.40 992.95,455.48 993.83,454.99 994.70,453.25 995.58,455.10 996.45,456.61 997.33,452.47 998.20,455.77" stroke="#f4ef14" stroke-width="1.3" fill="none"/><polyline points="977.20,452.51 978.08,453.29 978.95,454.13 979.83,453.48 980.70,451.43 981.58,455.24 982.45,456.53 983.33,454.38 984.20,454.65 985.08,455.61 985.95,453.68 986.83,454.64 987.70,452.28 988.58,455.87 989.45,451.27 990.33,451.15 991.20,456.26 992.08,455.80 992.95,451.91 993.83,452.16 994.70,453.29 995.58,453.96 996.45,453.09 997.33,451.79 998.20,456.20" stroke="#f4ef14" stroke-width="1.3" fill="none"/><rect x="977.7" y="453.2" width="20.00000000000002" height="1.3299999999999994" fill="#f4ef14"/><rect x="977.2" y="443.32" width="1" height="4.749999999999997" fill="#e0e0e0"/><rect x="977.2" y="451.29999999999995" width="1" height="4.749999999999997" fill="#e0e0e0"/></svg>
<div class="a" style="left:963.6px;top:461.2px;width:42.10000000000002px;height:6.8px;background:#2a2a2d;border:0.8px solid #56565a;border-top:none;"></div>
<div class="a t" style="left:965.00px;top:462.88px;font-size:4.6px;color:#bdbdbd;font-family:'Liberation Mono',monospace;transform:scaleX(0.8875);transform-origin:0 0;">audiodevout2</div>
<div class="a" style="left:995.7px;top:462.2px;width:4.5px;height:5px;background:#2c3550;"></div>
<div class="a" style="left:1000.7px;top:462.2px;width:4px;height:5px;background:#34343a;"></div>
<div class="a" style="left:4px;top:534px;width:1016px;height:42px;background:#000;"></div>
<div class="a" style="left:4px;top:534px;width:1015.5px;height:37.3px;background:#333338;"></div>
<div class="a" style="left:5px;top:534.3px;width:148px;height:36.9px;background:#13121d;border:1px solid #4c4c52;"></div>
<div class="a t" style="left:7.80px;top:537.63px;font-size:7.4px;color:#8a8a96;font-family:'Liberation Sans',sans-serif;">Start:</div>
<div class="a t" style="left:39.80px;top:537.63px;font-size:7.4px;color:#6e86d0;font-family:'Liberation Sans',sans-serif;">1</div>
<div class="a t" style="left:76.50px;top:537.63px;font-size:7.4px;color:#8a8a96;font-family:'Liberation Sans',sans-serif;">End:</div>
<div class="a t" style="left:108.60px;top:537.63px;font-size:7.4px;color:#6e86d0;font-family:'Liberation Sans',sans-serif;">600</div>
<div class="a t" style="left:7.80px;top:545.53px;font-size:7.4px;color:#8a8a96;font-family:'Liberation Sans',sans-serif;">RStart:</div>
<div class="a t" style="left:39.80px;top:545.53px;font-size:7.4px;color:#6e86d0;font-family:'Liberation Sans',sans-serif;">1</div>
<div class="a t" style="left:76.50px;top:545.53px;font-size:7.4px;color:#8a8a96;font-family:'Liberation Sans',sans-serif;">REnd:</div>
<div class="a t" style="left:108.60px;top:545.53px;font-size:7.4px;color:#6e86d0;font-family:'Liberation Sans',sans-serif;">600</div>
<div class="a t" style="left:7.80px;top:553.83px;font-size:7.4px;color:#8a8a96;font-family:'Liberation Sans',sans-serif;">FPS:</div>
<div class="a t" style="left:39.80px;top:553.83px;font-size:7.4px;color:#6e86d0;font-family:'Liberation Sans',sans-serif;">60.0</div>
<div class="a t" style="left:76.50px;top:553.83px;font-size:7.4px;color:#8a8a96;font-family:'Liberation Sans',sans-serif;">Tempo:</div>
<div class="a t" style="left:108.60px;top:553.83px;font-size:7.4px;color:#6e86d0;font-family:'Liberation Sans',sans-serif;">120.0</div>
<div class="a t" style="left:7.80px;top:561.83px;font-size:7.4px;color:#8a8a96;font-family:'Liberation Sans',sans-serif;">ResetF:</div>
<div class="a t" style="left:39.80px;top:561.83px;font-size:7.4px;color:#6e86d0;font-family:'Liberation Sans',sans-serif;">1</div>
<div class="a t" style="left:76.50px;top:561.83px;font-size:7.4px;color:#8a8a96;font-family:'Liberation Sans',sans-serif;">T Sig:</div>
<div class="a t" style="left:108.60px;top:561.83px;font-size:7.4px;color:#6e86d0;font-family:'Liberation Sans',sans-serif;">4</div>
<div class="a t" style="left:128.00px;top:561.83px;font-size:7.4px;color:#6e86d0;font-family:'Liberation Sans',sans-serif;">4</div>
<div class="a" style="left:153px;top:534px;width:866.5px;height:7.6px;background:#0f0e0f;"></div>
<div class="a" style="left:153px;top:534px;width:866.5px;height:0.8px;background:#3e3e44;"></div>
<div class="a" style="left:153.0px;top:534.5px;width:0.7px;height:7px;background:#3a3a3a;"></div>
<div class="a t" style="left:154.20px;top:535.52px;font-size:6px;color:#8a8a8a;font-family:'Liberation Sans',sans-serif;">1</div>
<div class="a" style="left:225.1202003338898px;top:534.5px;width:0.7px;height:7px;background:#3a3a3a;"></div>
<div class="a t" style="left:226.32px;top:535.52px;font-size:6px;color:#8a8a8a;font-family:'Liberation Sans',sans-serif;">51</div>
<div class="a" style="left:297.2404006677796px;top:534.5px;width:0.7px;height:7px;background:#3a3a3a;"></div>
<div class="a t" style="left:298.44px;top:535.52px;font-size:6px;color:#8a8a8a;font-family:'Liberation Sans',sans-serif;">101</div>
<div class="a" style="left:369.36060100166947px;top:534.5px;width:0.7px;height:7px;background:#3a3a3a;"></div>
<div class="a t" style="left:370.56px;top:535.52px;font-size:6px;color:#8a8a8a;font-family:'Liberation Sans',sans-serif;">151</div>
<div class="a" style="left:441.48080133555925px;top:534.5px;width:0.7px;height:7px;background:#3a3a3a;"></div>
<div class="a t" style="left:442.68px;top:535.52px;font-size:6px;color:#8a8a8a;font-family:'Liberation Sans',sans-serif;">201</div>
<div class="a" style="left:513.601001669449px;top:534.5px;width:0.7px;height:7px;background:#3a3a3a;"></div>
<div class="a t" style="left:514.80px;top:535.52px;font-size:6px;color:#8a8a8a;font-family:'Liberation Sans',sans-serif;">251</div>
<div class="a" style="left:585.7212020033389px;top:534.5px;width:0.7px;height:7px;background:#3a3a3a;"></div>
<div class="a t" style="left:586.92px;top:535.52px;font-size:6px;color:#8a8a8a;font-family:'Liberation Sans',sans-serif;">301</div>
<div class="a" style="left:657.8414023372287px;top:534.5px;width:0.7px;height:7px;background:#3a3a3a;"></div>
<div class="a t" style="left:659.04px;top:535.52px;font-size:6px;color:#8a8a8a;font-family:'Liberation Sans',sans-serif;">351</div>
<div class="a" style="left:729.9616026711185px;top:534.5px;width:0.7px;height:7px;background:#3a3a3a;"></div>
<div class="a t" style="left:731.16px;top:535.52px;font-size:6px;color:#8a8a8a;font-family:'Liberation Sans',sans-serif;">401</div>
<div class="a" style="left:802.0818030050084px;top:534.5px;width:0.7px;height:7px;background:#3a3a3a;"></div>
<div class="a t" style="left:803.28px;top:535.52px;font-size:6px;color:#8a8a8a;font-family:'Liberation Sans',sans-serif;">451</div>
<div class="a" style="left:874.2020033388982px;top:534.5px;width:0.7px;height:7px;background:#3a3a3a;"></div>
<div class="a t" style="left:875.40px;top:535.52px;font-size:6px;color:#8a8a8a;font-family:'Liberation Sans',sans-serif;">501</div>
<div class="a" style="left:946.322203672788px;top:534.5px;width:0.7px;height:7px;background:#3a3a3a;"></div>
<div class="a t" style="left:947.52px;top:535.52px;font-size:6px;color:#8a8a8a;font-family:'Liberation Sans',sans-serif;">551</div>
<div class="a" style="left:1017.0px;top:534.5px;width:0.7px;height:7px;background:#3a3a3a;"></div>
<div class="a t" style="left:1018.20px;top:535.52px;font-size:6px;color:#8a8a8a;font-family:'Liberation Sans',sans-serif;">600</div>
<div class="a" style="left:745.8280467445743px;top:534.5px;width:1px;height:7px;background:#7d9ae6;"></div>
<div class="a" style="left:153px;top:541.6px;width:866.5px;height:6.4px;background:#28282c;"></div>
<div class="a" style="left:153px;top:541.8px;width:12.5px;height:5.6px;background:#5a5a5e;"></div>
<div class="a" style="left:165.5px;top:541.8px;width:840px;height:5.6px;background:#3f5b8c;"></div>
<div class="a" style="left:1005.5px;top:541.8px;width:12px;height:5.6px;background:#666;"></div>
<div class="a" style="left:153px;top:548px;width:866.5px;height:23px;background:#333338;"></div>
<div class="a" style="left:153px;top:548.3px;width:12.2px;height:10.6px;background:#3e3e44;border:1px solid #4a4a50;"></div>
<div class="a" style="left:153px;top:559px;width:12.2px;height:10.8px;background:#3e3e44;border:1px solid #4a4a50;"></div>
<div class="a" style="left:158.5px;top:551px;width:0.9px;height:5px;background:#6a6a70;"></div>
<div class="a" style="left:158.5px;top:561.5px;width:0.9px;height:5px;background:#6a6a70;"></div>
<div class="a" style="left:167px;top:550.2px;width:35.4px;height:8px;background:#e0893c;border:1px solid #f0a060;"></div>
<div class="a t" style="left:169.00px;top:550.80px;font-size:7.2px;color:#5a2408;font-family:'Liberation Sans',sans-serif;transform:scaleX(0.9561);transform-origin:0 0;">TimeCode</div>
<div class="a" style="left:167px;top:559.3px;width:35.4px;height:9px;background:#3c3d48;border:1px solid #50515c;"></div>
<div class="a t" style="left:175.50px;top:560.50px;font-size:7.2px;color:#9aa0c0;font-family:'Liberation Sans',sans-serif;transform:scaleX(1.0320);transform-origin:0 0;">Beats</div>
<div class="a" style="left:205px;top:549.5px;width:104.6px;height:20.5px;background:#000;"></div>
<div class="a t" style="left:215.00px;top:552.63px;font-size:15.2px;color:#7e9ef2;font-family:'Liberation Sans',sans-serif;transform:scaleX(1.0523);transform-origin:0 0;">00:00:06:51</div>
<div class="a" style="left:313px;top:549.7px;width:69.6px;height:19.5px;background:#000;"></div>
<div class="a t" style="left:333.50px;top:552.53px;font-size:15.2px;color:#7e9ef2;font-family:'Liberation Sans',sans-serif;transform:scaleX(1.0765);transform-origin:0 0;">412</div>
<div class="a" style="left:385.8px;top:549.5px;width:19.19999999999999px;height:19.6px;background:#3c3c42;border:1px solid #48484e;"></div>
<div class="a" style="left:407.2px;top:549.5px;width:19.80000000000001px;height:19.6px;background:#3c3c42;border:1px solid #48484e;"></div>
<div class="a" style="left:429.3px;top:549.5px;width:19.69999999999999px;height:19.6px;background:#3c3c42;border:1px solid #48484e;"></div>
<div class="a" style="left:451px;top:549.5px;width:19.899999999999977px;height:19.6px;background:#dd8a40;border:1px solid #e89a58;"></div>
<div class="a" style="left:473px;top:549.5px;width:19.5px;height:19.6px;background:#3c3c42;border:1px solid #48484e;"></div>
<div class="a" style="left:494px;top:549.5px;width:19.600000000000023px;height:19.6px;background:#3c3c42;border:1px solid #48484e;"></div>
<svg class="a" style="left:392px;top:556px;" width="8" height="7" viewBox="0 0 8 7"><rect x="0" y="0" width="1.2" height="7" fill="#a8a8b4"/><path d="M4.2 0V7L1.2 3.5z" fill="#a8a8b4"/><path d="M7.4 0V7L4.4 3.5z" fill="#a8a8b4"/></svg>
<div class="a" style="left:414.5px;top:556px;width:1.5px;height:6.5px;background:#a8a8b4;"></div>
<div class="a" style="left:418px;top:556px;width:1.5px;height:6.5px;background:#a8a8b4;"></div>
<svg class="a" style="left:437.5px;top:555.8px;" width="4" height="7" viewBox="0 0 4 7"><path d="M4 0V7L0 3.5z" fill="#a8a8b4"/></svg>
<svg class="a" style="left:459.5px;top:555.8px;" width="4" height="7" viewBox="0 0 4 7"><path d="M0 0V7L4 3.5z" fill="#4a1808"/></svg>
<div class="a" style="left:481px;top:558.6px;width:3px;height:1px;background:#a8a8b4;"></div>
<div class="a" style="left:501px;top:558.8px;width:6px;height:1px;background:#a8a8b4;"></div>
<div class="a" style="left:503.5px;top:556.3px;width:1px;height:6px;background:#a8a8b4;"></div>
<div class="a t" style="left:517.70px;top:549.86px;font-size:7.6px;color:#a8a8b0;font-family:'Liberation Sans',sans-serif;transform:scaleX(0.9395);transform-origin:0 0;">Range Limit</div>
<div class="a" style="left:517px;top:561.6px;width:26.5px;height:7.4px;background:#dd8a40;border:1px solid #f0a060;"></div>
<div class="a t" style="left:522.50px;top:561.40px;font-size:7.2px;color:#6a2a08;font-family:'Liberation Sans',sans-serif;transform:scaleX(0.9677);transform-origin:0 0;">Loop</div>
<div class="a" style="left:545px;top:561.3px;width:24.5px;height:8px;background:#3c3d48;border:1px solid #55565e;"></div>
<div class="a t" style="left:548.50px;top:561.50px;font-size:7.2px;color:#9aa0c0;font-family:'Liberation Sans',sans-serif;transform:scaleX(1.0169);transform-origin:0 0;">Once</div>
<div class="a" style="left:1018.5px;top:548px;width:1px;height:23px;background:#55555a;"></div>
<div class="a" style="left:153px;top:570.6px;width:866px;height:0.8px;background:#4a4a50;"></div>
<div class="a" style="left:26px;top:575px;width:152px;height:1px;background:#3a3a3c;"></div>
<div class="a" style="left:287px;top:575px;width:24px;height:1px;background:#2e2e30;"></div>
</body></html>
